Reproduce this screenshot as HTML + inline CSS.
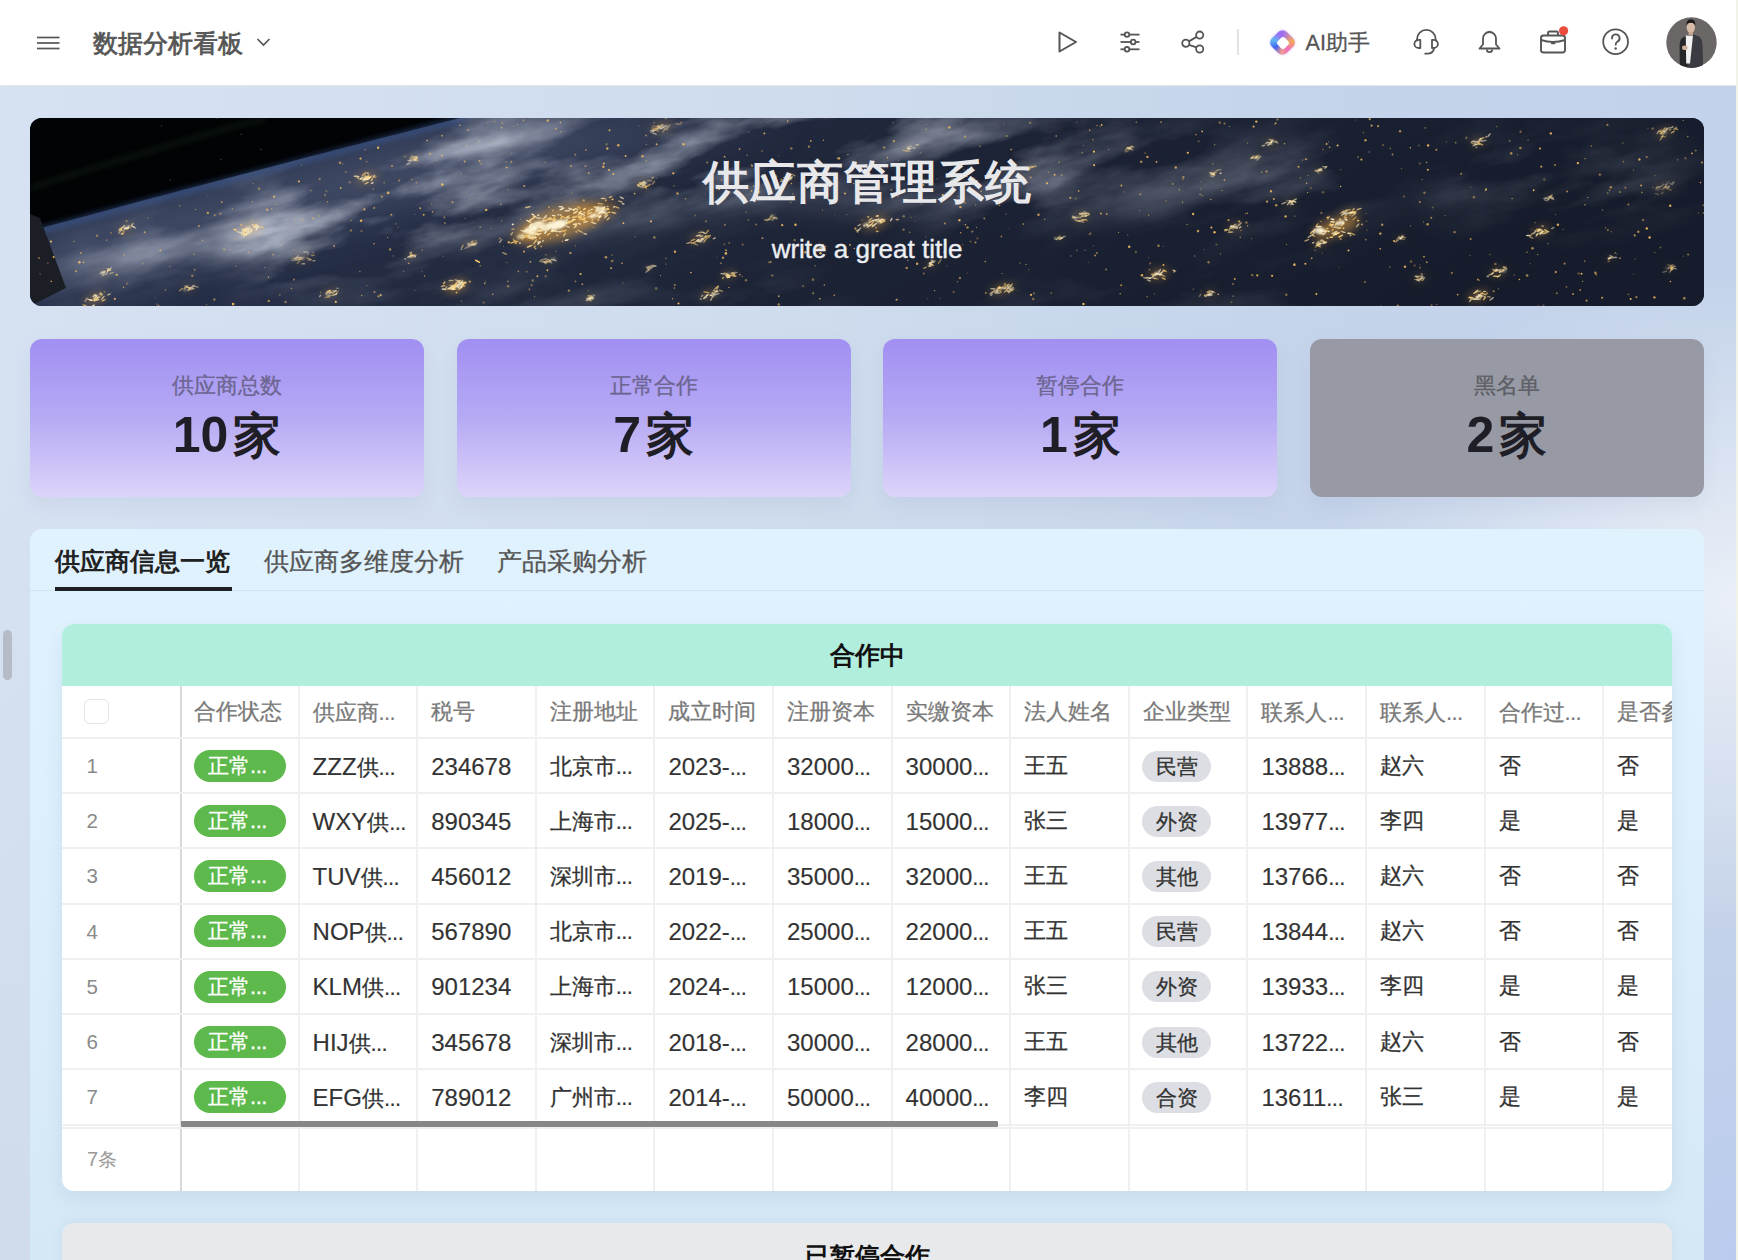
<!DOCTYPE html>
<html><head><meta charset="utf-8">
<style>
*{box-sizing:border-box;margin:0;padding:0}
html,body{width:1738px;height:1260px;overflow:hidden;background:#f0f3e6;font-family:"Liberation Sans", sans-serif}
.med{-webkit-text-stroke-width:0.3px}
.td,.th,.tag,.pill,.tab,#title,#ai,.card .lbl{-webkit-text-stroke-width:0.3px}
.abs{position:absolute}
#page{position:absolute;left:0;top:0;width:1736px;height:1260px;overflow:hidden;
 background:
 radial-gradient(ellipse 420px 330px at 1736px 600px, rgba(234,239,247,1) 0%, rgba(234,239,247,0.6) 40%, rgba(234,239,247,0) 100%),
 radial-gradient(ellipse 300px 450px at 1736px 1260px, rgba(186,203,238,1) 0%, rgba(186,203,238,0) 100%),
 linear-gradient(180deg, rgba(206,216,230,0) 35%, rgba(206,216,230,0.65) 100%),
 linear-gradient(90deg, #d6e2f2 0%, #cfdcee 45%, #c5d4eb 75%, #c2d2ea 100%);}
#hdr{position:absolute;left:0;top:0;width:1736px;height:86px;background:#fff;border-bottom:1px solid #e5e5e5}
.ico{position:absolute}
#title{position:absolute;left:93px;top:25px;font-size:25.4px;font-weight:500;color:#555;line-height:36px;letter-spacing:0px;-webkit-text-stroke-width:0.75px !important}
#ai{position:absolute;left:1305.5px;top:28px;font-size:21.6px;color:#555;line-height:30px}
#banner{position:absolute;left:30px;top:118px;width:1674px;height:188px;border-radius:12px;overflow:hidden;background:#1d2538}
#btitle{position:absolute;left:0;width:1674px;top:34px;text-align:center;font-size:46px;font-weight:700;color:#e8e8ea;line-height:60px;letter-spacing:1px}
#bsub{position:absolute;left:0;width:1674px;top:114px;text-align:center;font-size:26px;color:#eceef2;line-height:34px;-webkit-text-stroke-width:0.4px}
.card{position:absolute;top:339px;width:394px;height:158px;border-radius:12px;
 background:linear-gradient(180deg,#a18ff2 0%,#b6aaf4 50%,#ddd4fa 100%);box-shadow:0 8px 18px rgba(120,130,170,0.10)}
.card.gray{background:#979aa5}
.card .lbl{position:absolute;left:0;width:100%;top:32px;text-align:center;font-size:22.3px;font-weight:500;color:#6c6590;line-height:30px}
.card.gray .lbl{color:#5e5f66}
.card .num .j{font-size:48px;font-weight:400;-webkit-text-stroke-width:1.5px;margin-left:5px}
.card .num{position:absolute;left:0;width:100%;top:66px;text-align:center;font-size:50px;font-weight:700;color:#1f1d26;line-height:60px}
#tabs{position:absolute;left:30px;top:529px;width:1674px;height:800px;border-radius:12px;background:linear-gradient(180deg,#e0f2fd 0px,#ddeffb 300px,#d5e8f5 731px)}
.tab{position:absolute;top:9.5px;line-height:46px;color:#555;font-size:24.7px}
#tab1{left:25px;font-size:24.5px;font-weight:700;color:#222;-webkit-text-stroke-width:0 !important}
#uline{position:absolute;left:25px;top:58px;width:177px;height:4px;background:#1f2022}
#tdiv{position:absolute;left:0;top:61px;width:1674px;height:1px;background:#cfe2ee}
#tcard{position:absolute;left:62px;top:624px;width:1610px;height:567px;border-radius:12px;background:#fff;overflow:hidden;box-shadow:0 8px 20px rgba(40,90,140,0.09)}
#thead{position:absolute;left:0;top:0;width:1610px;height:62px;background:#b1eede}
#ttitle{position:absolute;left:0;width:1610px;top:0;line-height:62px;text-align:center;font-size:25px;font-weight:700;color:#111}
.vl{position:absolute;top:62px;height:505px}
.hl{position:absolute;left:0;width:1610px;height:2px;background:#f0f0f0}
.th{position:absolute;line-height:51px;font-size:21.5px;font-weight:500;color:#7a7a7a;white-space:nowrap}
.th .l{font-size:23px;font-weight:400}
.d{font-size:22px;letter-spacing:-0.6px;-webkit-text-stroke-width:0.15px}
.td{position:absolute;line-height:55px;font-size:21.5px;font-weight:500;color:#333;white-space:nowrap}
.td .l{font-size:24px;font-weight:400;-webkit-text-stroke-width:0.15px}
.idx{position:absolute;line-height:55px;font-size:20.5px;color:#8a8a8a}
.foot{font-size:19px;color:#999} .foot .l{font-size:20px}
.foot{line-height:62px}
.cb{position:absolute;width:25px;height:25px;border:1.5px solid #e3e3e3;border-radius:6px;background:#fff}
.pill{position:absolute;width:92px;height:32px;border-radius:16px;background:#5db94b;color:#fff;font-size:21px;font-weight:500;line-height:32px;text-align:center;padding-right:4px}
.pill .l{font-size:22px;font-weight:400;letter-spacing:-0.5px}
.tag{position:absolute;width:69px;height:31px;border-radius:15.5px;background:#dcdee3;color:#333;font-size:21px;font-weight:500;line-height:31px;text-align:center}
.hscroll{position:absolute;left:119px;top:497px;width:817px;height:6px;background:#878787;border-radius:1px}
#ncard{position:absolute;left:62px;top:1223px;width:1610px;height:200px;border-radius:12px;background:#e8e9eb;box-shadow:0 -2px 14px rgba(40,90,140,0.06)}
#ntitle{position:absolute;left:0;width:1610px;top:13px;line-height:40px;text-align:center;font-size:25px;font-weight:700;color:#111}
#lpill{position:absolute;left:3px;top:630px;width:9px;height:50px;border-radius:5px;background:#b5bcc8}
</style></head><body>
<div id="page">
 <div id="hdr">
  <svg class="ico" style="left:36px;top:35.5px" width="25" height="14" viewBox="0 0 25 14"><g stroke="#555" stroke-width="1.7"><line x1="1" y1="1.5" x2="23.5" y2="1.5"/><line x1="1" y1="7" x2="23.5" y2="7"/><line x1="1" y1="12.5" x2="23.5" y2="12.5"/></g></svg>
  <div id="title">数据分析看板</div>
  <svg class="ico" style="left:256px;top:37px" width="15" height="10" viewBox="0 0 15 10"><polyline points="1.5,2 7.5,8 13.5,2" fill="none" stroke="#555" stroke-width="1.7"/></svg>
  <!-- play -->
  <svg class="ico" style="left:1055px;top:29px" width="26" height="26" viewBox="0 0 26 26"><path d="M4.5 3.5 L21 13 L4.5 22.5 Z" fill="none" stroke="#555" stroke-width="2" stroke-linejoin="round"/></svg>
  <!-- sliders -->
  <svg class="ico" style="left:1117px;top:29px" width="26" height="26" viewBox="0 0 26 26"><g stroke="#555" stroke-width="1.8" fill="#fff"><line x1="3.5" y1="5.6" x2="22.5" y2="5.6"/><line x1="3.5" y1="13" x2="22.5" y2="13"/><line x1="3.5" y1="20.3" x2="22.5" y2="20.3"/><circle cx="10" cy="5.6" r="2.3"/><circle cx="16.2" cy="13" r="2.3"/><circle cx="10" cy="20.3" r="2.3"/></g></svg>
  <!-- share -->
  <svg class="ico" style="left:1179px;top:29px" width="28" height="28" viewBox="0 0 28 28"><g stroke="#555" stroke-width="1.8" fill="none"><circle cx="20.7" cy="6.1" r="3.6"/><circle cx="6.8" cy="14.2" r="3.6"/><circle cx="20.7" cy="20" r="3.6"/><line x1="9.9" y1="12.4" x2="17.6" y2="7.9"/><line x1="9.9" y1="15.9" x2="17.6" y2="18.3"/></g></svg>
  <div class="abs" style="left:1237px;top:29px;width:1.5px;height:26px;background:#e2e2e2"></div>
  <!-- AI logo -->
  <div class="abs" style="left:1270px;top:30px;width:25px;height:25px;">
   <div class="abs" style="left:2px;top:2px;width:21px;height:21px;border-radius:6px;transform:rotate(45deg);background:conic-gradient(from -45deg,#9d6ff6 0deg,#f5a55c 85deg,#ee6fc0 140deg,#f39a92 185deg,#3f63ee 235deg,#62b6f2 285deg,#9d6ff6 340deg);box-shadow:0 0 3px rgba(190,140,245,0.6)"></div>
   <div class="abs" style="left:7.5px;top:7.5px;width:10px;height:10px;border-radius:3px;transform:rotate(45deg);background:#fff"></div>
  </div>
  <div id="ai">AI助手</div>
  <!-- headset -->
  <svg class="ico" style="left:1411px;top:27px" width="30" height="30" viewBox="0 0 30 30"><g stroke="#555" stroke-width="1.8" fill="none" stroke-linecap="round" stroke-linejoin="round"><path d="M6 13.5 V12.2 A9.35 9.35 0 0 1 24.7 12.2 V13.5"/><path d="M9.3 12.8 V21 H8 A4.6 4.1 0 0 1 8 12.8 Z"/><path d="M21 12.8 V21 H22.3 A4.6 4.1 0 0 0 22.3 12.8 Z"/><path d="M23 21.8 Q22 26.6 16.5 26.7 H14.2"/></g></svg>
  <!-- bell -->
  <svg class="ico" style="left:1476px;top:28px" width="28" height="28" viewBox="0 0 28 28"><g stroke="#555" stroke-width="1.8" fill="none" stroke-linejoin="round"><path d="M13.5 4 A6.5 6.5 0 0 1 20 11 V16.5 L23.5 20.5 H3.5 L7 16.5 V11 A6.5 6.5 0 0 1 13.5 4Z"/><path d="M10.8 21.5 A2.7 2.7 0 0 0 16.2 21.5"/><line x1="13.5" y1="2.8" x2="13.5" y2="4"/></g></svg>
  <!-- briefcase -->
  <svg class="ico" style="left:1538px;top:28px;overflow:visible" width="32" height="28" viewBox="0 0 32 28"><g stroke="#555" stroke-width="1.9" fill="none" stroke-linejoin="round"><rect x="3" y="7.5" width="24" height="17" rx="2.5"/><path d="M10 7.5 V5 A1.5 1.5 0 0 1 11.5 3.5 H18.5 A1.5 1.5 0 0 1 20 5 V7.5"/><path d="M3 12 Q15 16 27 12"/></g><rect x="13" y="14.2" width="4.4" height="2" rx="0.6" fill="#555"/><circle cx="25.6" cy="2.8" r="4.6" fill="#ea4b3c"/></svg>
  <!-- help -->
  <svg class="ico" style="left:1601px;top:27px" width="30" height="30" viewBox="0 0 30 30"><circle cx="14.6" cy="14.7" r="12.4" stroke="#555" stroke-width="1.8" fill="none"/><path d="M11 11.5 A3.8 3.8 0 1 1 16.5 14.6 C15.2 15.4 14.7 16 14.7 17.7" stroke="#555" stroke-width="1.8" fill="none" stroke-linecap="round"/><circle cx="14.7" cy="21.5" r="1.2" fill="#555"/></svg>
  <!-- avatar -->
  <svg class="ico" style="left:1666px;top:17px" width="51" height="51" viewBox="0 0 51 51">
   <defs><clipPath id="avc"><circle cx="25.5" cy="25.5" r="25.2"/></clipPath></defs>
   <g clip-path="url(#avc)">
    <rect width="51" height="51" fill="#6a6766"/>
    <path d="M13.8 51 L13.6 27 Q14 21 19.5 19.2 L23 17.8 L27.5 17.8 L32.5 19.6 Q36 21.5 36.2 28 L36.8 51Z" fill="#26272b"/>
    <path d="M27 18 L32.5 19.6 Q36 21.5 36.2 28 L36.8 51 L21 51 Z" fill="#3a3c41"/>
    <path d="M19.8 18.6 L27 18.4 L24 46.5 L20.2 46.5 Z" fill="#f1f1f1"/>
    <rect x="22.6" y="14.2" width="4.4" height="4" fill="#c6a28c"/>
    <ellipse cx="24.8" cy="10.6" rx="4.2" ry="5" fill="#d8b9a6"/>
    <path d="M20.4 8.8 Q20 2.6 24.8 2.2 Q29.8 2.4 29.4 8.8 Q28.5 5.6 24.8 5.8 Q21.2 5.6 20.4 8.8Z" fill="#1c1918"/>
    <ellipse cx="18.8" cy="30.8" rx="2.8" ry="2.3" fill="#cfae9a"/>
   </g>
  </svg>
 </div>

 <div id="banner">
 <svg width="1674" height="188" viewBox="0 0 1674 188" style="position:absolute;left:0;top:0">
<defs>
<filter id="g5" x="-100%" y="-200%" width="300%" height="500%"><feGaussianBlur stdDeviation="5"/></filter>
<filter id="g1" x="-100%" y="-200%" width="300%" height="500%"><feGaussianBlur stdDeviation="1.2"/></filter>
<filter id="g3" x="-50%" y="-50%" width="200%" height="200%"><feGaussianBlur stdDeviation="3"/></filter>
<filter id="g25" x="-50%" y="-50%" width="200%" height="200%"><feGaussianBlur stdDeviation="22"/></filter>
<filter id="cl" filterUnits="userSpaceOnUse" x="-600" y="-600" width="3000" height="1400">
 <feTurbulence type="fractalNoise" baseFrequency="0.007 0.022" numOctaves="5" seed="8" result="n"/>
 <feColorMatrix in="n" type="matrix" values="0 0 0 0 0.56  0 0 0 0 0.60  0 0 0 0 0.70  2.4 0 0 0 -0.95"/>
</filter>
<linearGradient id="base" x1="0" y1="0" x2="1" y2="0.2">
 <stop offset="0" stop-color="#2b3550"/><stop offset="0.3" stop-color="#252e46"/><stop offset="0.6" stop-color="#1c2335"/><stop offset="1" stop-color="#161c2b"/>
</linearGradient>
<mask id="cm" maskUnits="userSpaceOnUse" x="0" y="0" width="1674" height="188">
 <rect width="1674" height="188" fill="#000"/>
 <g filter="url(#g25)">
  <path d="M0 165 L70 165 L520 30 L480 0 L420 0 Z" fill="#fff"/>
  <ellipse cx="420" cy="80" rx="230" ry="42" transform="rotate(-17 420 80)" fill="#fff"/>
  <ellipse cx="680" cy="35" rx="260" ry="50" transform="rotate(-8 680 35)" fill="#ddd"/>
  <ellipse cx="980" cy="45" rx="220" ry="50" fill="#999"/>
  <ellipse cx="1200" cy="60" rx="160" ry="45" fill="#555"/>
  <ellipse cx="1530" cy="60" rx="140" ry="45" fill="#444"/>
  <ellipse cx="560" cy="180" rx="260" ry="18" fill="#555"/>
  <ellipse cx="1150" cy="180" rx="200" ry="20" fill="#444"/>
 </g>
</mask>
</defs>
<rect width="1674" height="188" fill="url(#base)"/>
<path d="M0 118 L0 178 L300 105 L760 0 L440 0 Z" fill="#56617c" opacity="0.55" filter="url(#g25)"/>
<g mask="url(#cm)"><g transform="rotate(-14 600 100)"><rect x="-400" y="-500" width="2600" height="1200" fill="#fff" filter="url(#cl)"/></g></g>
<path d="M0 0 L430 0 C 320 28 150 72 0 113 Z" fill="#020305"/>
<path d="M0 115 C 150 74 320 30 435 0" stroke="#3c62a6" stroke-width="4" fill="none" opacity="0.75" filter="url(#g3)"/>
<path d="M0 70 C 80 45 160 20 235 0" stroke="#2d4a25" stroke-width="3" fill="none" opacity="0.45" filter="url(#g3)"/>
<circle cx="140.3" cy="62.1" r="0.6" fill="#8890a0" opacity="0.6"/><circle cx="131.4" cy="7.8" r="0.6" fill="#8890a0" opacity="0.6"/><circle cx="211.2" cy="16.2" r="0.6" fill="#8890a0" opacity="0.6"/><circle cx="190.8" cy="41.3" r="0.6" fill="#8890a0" opacity="0.6"/><circle cx="186.9" cy="0.1" r="0.6" fill="#8890a0" opacity="0.6"/><circle cx="230.9" cy="31.4" r="0.6" fill="#8890a0" opacity="0.6"/>
<path d="M0 96 L10 100 L36 170 L0 188 Z" fill="#1b1e24"/>
<ellipse cx="530" cy="105" rx="44.0" ry="16.5" transform="rotate(-18 530 105)" fill="#f0a840" opacity="0.50" filter="url(#g5)"/><ellipse cx="565" cy="95" rx="24.0" ry="9.0" transform="rotate(-18 565 95)" fill="#f0a840" opacity="0.45" filter="url(#g5)"/><ellipse cx="500" cy="115" rx="20.0" ry="7.5" transform="rotate(-18 500 115)" fill="#f0a840" opacity="0.40" filter="url(#g5)"/><ellipse cx="1306" cy="109" rx="24.0" ry="9.0" transform="rotate(-18 1306 109)" fill="#f0a840" opacity="0.50" filter="url(#g5)"/><ellipse cx="1290" cy="125" rx="8.0" ry="3.0" transform="rotate(-18 1290 125)" fill="#f0a840" opacity="0.35" filter="url(#g5)"/><ellipse cx="1320" cy="95" rx="9.6" ry="3.6" transform="rotate(-18 1320 95)" fill="#f0a840" opacity="0.35" filter="url(#g5)"/><ellipse cx="845" cy="105" rx="14.4" ry="5.4" transform="rotate(-18 845 105)" fill="#f0a840" opacity="0.40" filter="url(#g5)"/><ellipse cx="669" cy="120" rx="9.6" ry="3.6" transform="rotate(-18 669 120)" fill="#f0a840" opacity="0.40" filter="url(#g5)"/><ellipse cx="426" cy="168" rx="12.8" ry="4.8" transform="rotate(-18 426 168)" fill="#f0a840" opacity="0.40" filter="url(#g5)"/><ellipse cx="680" cy="176" rx="9.6" ry="3.6" transform="rotate(-18 680 176)" fill="#f0a840" opacity="0.35" filter="url(#g5)"/><ellipse cx="699" cy="157" rx="8.0" ry="3.0" transform="rotate(-18 699 157)" fill="#f0a840" opacity="0.35" filter="url(#g5)"/><ellipse cx="968" cy="172" rx="9.6" ry="3.6" transform="rotate(-18 968 172)" fill="#f0a840" opacity="0.35" filter="url(#g5)"/><ellipse cx="613" cy="67" rx="8.0" ry="3.0" transform="rotate(-18 613 67)" fill="#f0a840" opacity="0.30" filter="url(#g5)"/><ellipse cx="632" cy="9" rx="12.8" ry="4.8" transform="rotate(-18 632 9)" fill="#f0a840" opacity="0.25" filter="url(#g5)"/><ellipse cx="520" cy="142" rx="6.4" ry="2.4" transform="rotate(-18 520 142)" fill="#f0a840" opacity="0.30" filter="url(#g5)"/><ellipse cx="381" cy="138" rx="6.4" ry="2.4" transform="rotate(-18 381 138)" fill="#f0a840" opacity="0.30" filter="url(#g5)"/><ellipse cx="901" cy="146" rx="6.4" ry="2.4" transform="rotate(-18 901 146)" fill="#f0a840" opacity="0.30" filter="url(#g5)"/><ellipse cx="96" cy="111" rx="8.0" ry="3.0" transform="rotate(-18 96 111)" fill="#f0a840" opacity="0.35" filter="url(#g5)"/><ellipse cx="220" cy="111" rx="11.2" ry="4.2" transform="rotate(-18 220 111)" fill="#f0a840" opacity="0.45" filter="url(#g5)"/><ellipse cx="337" cy="60" rx="11.2" ry="4.2" transform="rotate(-18 337 60)" fill="#f0a840" opacity="0.40" filter="url(#g5)"/><ellipse cx="272" cy="140" rx="9.6" ry="3.6" transform="rotate(-18 272 140)" fill="#f0a840" opacity="0.25" filter="url(#g5)"/><ellipse cx="75" cy="155" rx="6.4" ry="2.4" transform="rotate(-18 75 155)" fill="#f0a840" opacity="0.30" filter="url(#g5)"/><ellipse cx="65" cy="181" rx="11.2" ry="4.2" transform="rotate(-18 65 181)" fill="#f0a840" opacity="0.40" filter="url(#g5)"/><ellipse cx="427" cy="168" rx="8.0" ry="3.0" transform="rotate(-18 427 168)" fill="#f0a840" opacity="0.35" filter="url(#g5)"/><ellipse cx="440" cy="127" rx="6.4" ry="2.4" transform="rotate(-18 440 127)" fill="#f0a840" opacity="0.30" filter="url(#g5)"/><ellipse cx="383" cy="41" rx="6.4" ry="2.4" transform="rotate(-18 383 41)" fill="#f0a840" opacity="0.30" filter="url(#g5)"/><ellipse cx="1051" cy="99" rx="8.0" ry="3.0" transform="rotate(-18 1051 99)" fill="#f0a840" opacity="0.35" filter="url(#g5)"/><ellipse cx="1205" cy="109" rx="8.0" ry="3.0" transform="rotate(-18 1205 109)" fill="#f0a840" opacity="0.35" filter="url(#g5)"/><ellipse cx="1128" cy="156" rx="11.2" ry="4.2" transform="rotate(-18 1128 156)" fill="#f0a840" opacity="0.40" filter="url(#g5)"/><ellipse cx="1448" cy="178" rx="11.2" ry="4.2" transform="rotate(-18 1448 178)" fill="#f0a840" opacity="0.40" filter="url(#g5)"/><ellipse cx="1468" cy="154" rx="8.0" ry="3.0" transform="rotate(-18 1468 154)" fill="#f0a840" opacity="0.40" filter="url(#g5)"/><ellipse cx="1511" cy="113" rx="9.6" ry="3.6" transform="rotate(-18 1511 113)" fill="#f0a840" opacity="0.40" filter="url(#g5)"/><ellipse cx="1448" cy="24" rx="8.0" ry="3.0" transform="rotate(-18 1448 24)" fill="#f0a840" opacity="0.35" filter="url(#g5)"/><ellipse cx="1634" cy="14" rx="9.6" ry="3.6" transform="rotate(-18 1634 14)" fill="#f0a840" opacity="0.30" filter="url(#g5)"/><ellipse cx="1634" cy="69" rx="9.6" ry="3.6" transform="rotate(-18 1634 69)" fill="#f0a840" opacity="0.17" filter="url(#g5)"/><ellipse cx="978" cy="170" rx="8.0" ry="3.0" transform="rotate(-18 978 170)" fill="#f0a840" opacity="0.30" filter="url(#g5)"/><ellipse cx="1240" cy="25" rx="6.4" ry="2.4" transform="rotate(-18 1240 25)" fill="#f0a840" opacity="0.30" filter="url(#g5)"/><ellipse cx="1225" cy="40" rx="4.8" ry="1.8" transform="rotate(-18 1225 40)" fill="#f0a840" opacity="0.30" filter="url(#g5)"/><ellipse cx="1185" cy="55" rx="4.8" ry="1.8" transform="rotate(-18 1185 55)" fill="#f0a840" opacity="0.30" filter="url(#g5)"/><ellipse cx="1290" cy="52" rx="4.8" ry="1.8" transform="rotate(-18 1290 52)" fill="#f0a840" opacity="0.30" filter="url(#g5)"/><ellipse cx="1260" cy="85" rx="6.4" ry="2.4" transform="rotate(-18 1260 85)" fill="#f0a840" opacity="0.30" filter="url(#g5)"/><ellipse cx="1370" cy="120" rx="4.8" ry="1.8" transform="rotate(-18 1370 120)" fill="#f0a840" opacity="0.30" filter="url(#g5)"/><ellipse cx="1520" cy="80" rx="4.8" ry="1.8" transform="rotate(-18 1520 80)" fill="#f0a840" opacity="0.25" filter="url(#g5)"/><ellipse cx="1580" cy="140" rx="4.8" ry="1.8" transform="rotate(-18 1580 140)" fill="#f0a840" opacity="0.25" filter="url(#g5)"/><ellipse cx="1640" cy="150" rx="4.8" ry="1.8" transform="rotate(-18 1640 150)" fill="#f0a840" opacity="0.25" filter="url(#g5)"/><ellipse cx="1390" cy="160" rx="6.4" ry="2.4" transform="rotate(-18 1390 160)" fill="#f0a840" opacity="0.30" filter="url(#g5)"/><ellipse cx="1180" cy="175" rx="6.4" ry="2.4" transform="rotate(-18 1180 175)" fill="#f0a840" opacity="0.30" filter="url(#g5)"/><ellipse cx="1030" cy="120" rx="4.8" ry="1.8" transform="rotate(-18 1030 120)" fill="#f0a840" opacity="0.25" filter="url(#g5)"/><ellipse cx="760" cy="60" rx="6.4" ry="2.4" transform="rotate(-18 760 60)" fill="#f0a840" opacity="0.30" filter="url(#g5)"/><ellipse cx="790" cy="130" rx="4.8" ry="1.8" transform="rotate(-18 790 130)" fill="#f0a840" opacity="0.25" filter="url(#g5)"/><ellipse cx="740" cy="100" rx="4.8" ry="1.8" transform="rotate(-18 740 100)" fill="#f0a840" opacity="0.25" filter="url(#g5)"/><ellipse cx="620" cy="150" rx="4.8" ry="1.8" transform="rotate(-18 620 150)" fill="#f0a840" opacity="0.25" filter="url(#g5)"/><ellipse cx="560" cy="180" rx="6.4" ry="2.4" transform="rotate(-18 560 180)" fill="#f0a840" opacity="0.30" filter="url(#g5)"/><ellipse cx="300" cy="175" rx="8.0" ry="3.0" transform="rotate(-18 300 175)" fill="#f0a840" opacity="0.35" filter="url(#g5)"/><ellipse cx="160" cy="170" rx="6.4" ry="2.4" transform="rotate(-18 160 170)" fill="#f0a840" opacity="0.30" filter="url(#g5)"/><ellipse cx="930" cy="60" rx="4.8" ry="1.8" transform="rotate(-18 930 60)" fill="#f0a840" opacity="0.25" filter="url(#g5)"/><ellipse cx="880" cy="30" rx="4.8" ry="1.8" transform="rotate(-18 880 30)" fill="#f0a840" opacity="0.25" filter="url(#g5)"/><ellipse cx="1000" cy="50" rx="4.8" ry="1.8" transform="rotate(-18 1000 50)" fill="#f0a840" opacity="0.25" filter="url(#g5)"/><ellipse cx="1100" cy="30" rx="4.8" ry="1.8" transform="rotate(-18 1100 30)" fill="#f0a840" opacity="0.25" filter="url(#g5)"/>
<ellipse cx="498.7" cy="103.2" rx="3.0" ry="0.8" transform="rotate(25 498.7 103.2)" fill="#ffe9b0" opacity="0.94"/><ellipse cx="530.6" cy="97.0" rx="1.1" ry="0.8" transform="rotate(-46 530.6 97.0)" fill="#fff3d0" opacity="0.79"/><ellipse cx="534.5" cy="116.6" rx="2.4" ry="0.8" transform="rotate(-59 534.5 116.6)" fill="#ffd98a" opacity="0.76"/><ellipse cx="555.2" cy="115.9" rx="2.0" ry="0.8" transform="rotate(9 555.2 115.9)" fill="#ffe9b0" opacity="0.66"/><ellipse cx="519.9" cy="104.6" rx="1.0" ry="0.8" transform="rotate(18 519.9 104.6)" fill="#ffd98a" opacity="0.91"/><ellipse cx="543.3" cy="99.1" rx="1.4" ry="0.8" transform="rotate(-32 543.3 99.1)" fill="#ffd98a" opacity="0.82"/><ellipse cx="521.2" cy="101.5" rx="3.4" ry="0.8" transform="rotate(2 521.2 101.5)" fill="#ffcf70" opacity="0.72"/><ellipse cx="522.3" cy="112.3" rx="1.4" ry="0.8" transform="rotate(-54 522.3 112.3)" fill="#fff3d0" opacity="0.93"/><ellipse cx="500.7" cy="107.3" rx="2.8" ry="0.8" transform="rotate(-54 500.7 107.3)" fill="#fff3d0" opacity="0.93"/><ellipse cx="510.0" cy="112.6" rx="2.2" ry="0.8" transform="rotate(3 510.0 112.6)" fill="#ffe9b0" opacity="0.70"/><ellipse cx="580.5" cy="79.1" rx="1.9" ry="0.8" transform="rotate(-24 580.5 79.1)" fill="#ffcf70" opacity="0.75"/><ellipse cx="527.0" cy="105.3" rx="1.1" ry="0.8" transform="rotate(-44 527.0 105.3)" fill="#ffd98a" opacity="0.65"/><ellipse cx="536.7" cy="122.1" rx="2.2" ry="0.8" transform="rotate(-14 536.7 122.1)" fill="#fff3d0" opacity="0.91"/><ellipse cx="563.6" cy="104.9" rx="3.0" ry="0.8" transform="rotate(17 563.6 104.9)" fill="#ffe9b0" opacity="0.77"/><ellipse cx="545.7" cy="98.9" rx="2.3" ry="0.8" transform="rotate(-27 545.7 98.9)" fill="#ffd98a" opacity="0.74"/><ellipse cx="554.5" cy="91.0" rx="1.8" ry="0.8" transform="rotate(-31 554.5 91.0)" fill="#ffd98a" opacity="0.92"/><ellipse cx="500.2" cy="102.8" rx="1.8" ry="0.8" transform="rotate(-16 500.2 102.8)" fill="#ffe9b0" opacity="0.63"/><ellipse cx="482.8" cy="106.4" rx="1.1" ry="0.8" transform="rotate(7 482.8 106.4)" fill="#fff3d0" opacity="0.93"/><ellipse cx="507.2" cy="115.4" rx="1.1" ry="0.8" transform="rotate(22 507.2 115.4)" fill="#ffe9b0" opacity="0.92"/><ellipse cx="523.7" cy="113.2" rx="3.5" ry="0.8" transform="rotate(-9 523.7 113.2)" fill="#ffd98a" opacity="0.85"/><ellipse cx="531.2" cy="99.8" rx="2.1" ry="0.8" transform="rotate(-47 531.2 99.8)" fill="#ffcf70" opacity="0.72"/><ellipse cx="447.5" cy="143.3" rx="3.1" ry="0.8" transform="rotate(28 447.5 143.3)" fill="#ffcf70" opacity="0.98"/><ellipse cx="519.8" cy="99.9" rx="1.7" ry="0.8" transform="rotate(-18 519.8 99.9)" fill="#ffd98a" opacity="0.65"/><ellipse cx="539.3" cy="90.4" rx="1.4" ry="0.8" transform="rotate(24 539.3 90.4)" fill="#fff3d0" opacity="0.67"/><ellipse cx="501.9" cy="114.8" rx="2.4" ry="0.8" transform="rotate(-15 501.9 114.8)" fill="#ffe9b0" opacity="0.91"/><ellipse cx="531.0" cy="88.8" rx="2.7" ry="0.8" transform="rotate(8 531.0 88.8)" fill="#fff3d0" opacity="0.82"/><ellipse cx="503.0" cy="96.6" rx="1.7" ry="0.8" transform="rotate(28 503.0 96.6)" fill="#fff3d0" opacity="0.98"/><ellipse cx="523.7" cy="112.6" rx="3.1" ry="0.8" transform="rotate(-17 523.7 112.6)" fill="#fff3d0" opacity="0.73"/><ellipse cx="529.6" cy="113.6" rx="2.3" ry="0.8" transform="rotate(1 529.6 113.6)" fill="#fff3d0" opacity="0.74"/><ellipse cx="502.3" cy="100.6" rx="3.1" ry="0.8" transform="rotate(-28 502.3 100.6)" fill="#ffd98a" opacity="0.95"/><ellipse cx="498.0" cy="89.1" rx="3.4" ry="0.8" transform="rotate(-13 498.0 89.1)" fill="#ffd98a" opacity="0.68"/><ellipse cx="504.7" cy="128.8" rx="1.7" ry="0.8" transform="rotate(-53 504.7 128.8)" fill="#ffcf70" opacity="0.67"/><ellipse cx="531.9" cy="90.9" rx="2.7" ry="0.8" transform="rotate(-22 531.9 90.9)" fill="#fff3d0" opacity="0.89"/><ellipse cx="544.0" cy="101.5" rx="2.1" ry="0.8" transform="rotate(-1 544.0 101.5)" fill="#ffd98a" opacity="0.90"/><ellipse cx="550.3" cy="113.4" rx="3.5" ry="0.8" transform="rotate(28 550.3 113.4)" fill="#ffd98a" opacity="0.62"/><ellipse cx="545.7" cy="106.7" rx="1.5" ry="0.8" transform="rotate(-43 545.7 106.7)" fill="#ffe9b0" opacity="0.77"/><ellipse cx="513.0" cy="122.9" rx="1.2" ry="0.8" transform="rotate(-42 513.0 122.9)" fill="#fff3d0" opacity="0.60"/><ellipse cx="515.6" cy="114.4" rx="2.0" ry="0.8" transform="rotate(-50 515.6 114.4)" fill="#fff3d0" opacity="0.99"/><ellipse cx="510.2" cy="108.7" rx="1.7" ry="0.8" transform="rotate(-14 510.2 108.7)" fill="#fff3d0" opacity="0.98"/><ellipse cx="537.3" cy="92.8" rx="3.0" ry="0.8" transform="rotate(-2 537.3 92.8)" fill="#fff3d0" opacity="0.79"/><ellipse cx="545.3" cy="108.6" rx="2.2" ry="0.8" transform="rotate(-42 545.3 108.6)" fill="#ffd98a" opacity="0.84"/><ellipse cx="505.6" cy="130.6" rx="1.0" ry="0.8" transform="rotate(-50 505.6 130.6)" fill="#ffd98a" opacity="0.73"/><ellipse cx="548.9" cy="89.5" rx="2.1" ry="0.8" transform="rotate(28 548.9 89.5)" fill="#ffcf70" opacity="0.72"/><ellipse cx="552.1" cy="96.1" rx="3.4" ry="0.8" transform="rotate(22 552.1 96.1)" fill="#fff3d0" opacity="0.90"/><ellipse cx="526.6" cy="113.6" rx="1.0" ry="0.8" transform="rotate(25 526.6 113.6)" fill="#fff3d0" opacity="0.80"/><ellipse cx="527.3" cy="117.4" rx="1.3" ry="0.8" transform="rotate(-4 527.3 117.4)" fill="#ffcf70" opacity="0.70"/><ellipse cx="542.8" cy="102.3" rx="2.0" ry="0.8" transform="rotate(-17 542.8 102.3)" fill="#fff3d0" opacity="0.70"/><ellipse cx="523.8" cy="107.5" rx="2.2" ry="0.8" transform="rotate(16 523.8 107.5)" fill="#fff3d0" opacity="0.72"/><ellipse cx="507.0" cy="105.0" rx="2.6" ry="0.8" transform="rotate(-6 507.0 105.0)" fill="#ffe9b0" opacity="0.61"/><ellipse cx="545.2" cy="106.1" rx="2.8" ry="0.8" transform="rotate(-5 545.2 106.1)" fill="#ffe9b0" opacity="0.79"/><ellipse cx="508.9" cy="125.1" rx="2.5" ry="0.8" transform="rotate(-57 508.9 125.1)" fill="#fff3d0" opacity="0.82"/><ellipse cx="524.2" cy="102.3" rx="2.7" ry="0.8" transform="rotate(-43 524.2 102.3)" fill="#ffcf70" opacity="0.91"/><ellipse cx="504.1" cy="119.4" rx="2.8" ry="0.8" transform="rotate(-3 504.1 119.4)" fill="#ffcf70" opacity="0.94"/><ellipse cx="541.6" cy="91.3" rx="2.7" ry="0.8" transform="rotate(5 541.6 91.3)" fill="#fff3d0" opacity="0.79"/><ellipse cx="528.4" cy="96.7" rx="1.0" ry="0.8" transform="rotate(10 528.4 96.7)" fill="#fff3d0" opacity="0.86"/><ellipse cx="510.4" cy="112.9" rx="1.4" ry="0.8" transform="rotate(3 510.4 112.9)" fill="#ffcf70" opacity="0.99"/><ellipse cx="505.2" cy="110.5" rx="2.4" ry="0.8" transform="rotate(-56 505.2 110.5)" fill="#ffd98a" opacity="0.71"/><ellipse cx="537.9" cy="104.4" rx="3.4" ry="0.8" transform="rotate(-30 537.9 104.4)" fill="#ffcf70" opacity="0.99"/><ellipse cx="566.5" cy="93.0" rx="1.1" ry="0.8" transform="rotate(16 566.5 93.0)" fill="#ffd98a" opacity="0.85"/><ellipse cx="533.8" cy="99.2" rx="3.2" ry="0.8" transform="rotate(29 533.8 99.2)" fill="#ffcf70" opacity="0.66"/><ellipse cx="509.3" cy="104.8" rx="1.4" ry="0.8" transform="rotate(-4 509.3 104.8)" fill="#ffe9b0" opacity="0.82"/><ellipse cx="504.9" cy="98.6" rx="1.7" ry="0.8" transform="rotate(-9 504.9 98.6)" fill="#ffe9b0" opacity="0.90"/><ellipse cx="538.0" cy="98.5" rx="2.1" ry="0.8" transform="rotate(-32 538.0 98.5)" fill="#ffcf70" opacity="0.80"/><ellipse cx="550.0" cy="94.7" rx="1.1" ry="0.8" transform="rotate(3 550.0 94.7)" fill="#ffd98a" opacity="0.83"/><ellipse cx="519.2" cy="100.8" rx="3.4" ry="0.8" transform="rotate(-11 519.2 100.8)" fill="#ffd98a" opacity="0.71"/><ellipse cx="512.2" cy="108.3" rx="2.9" ry="0.8" transform="rotate(-13 512.2 108.3)" fill="#ffd98a" opacity="0.92"/><ellipse cx="544.4" cy="91.7" rx="2.0" ry="0.8" transform="rotate(-48 544.4 91.7)" fill="#ffe9b0" opacity="0.86"/><ellipse cx="562.4" cy="102.4" rx="1.2" ry="0.8" transform="rotate(-49 562.4 102.4)" fill="#ffcf70" opacity="0.70"/><ellipse cx="546.8" cy="91.2" rx="1.8" ry="0.8" transform="rotate(12 546.8 91.2)" fill="#ffe9b0" opacity="0.82"/><ellipse cx="499.7" cy="128.2" rx="3.4" ry="0.8" transform="rotate(-21 499.7 128.2)" fill="#ffd98a" opacity="0.90"/><ellipse cx="578.2" cy="100.9" rx="2.2" ry="0.8" transform="rotate(-41 578.2 100.9)" fill="#ffcf70" opacity="0.74"/><ellipse cx="534.7" cy="112.8" rx="2.5" ry="0.8" transform="rotate(-29 534.7 112.8)" fill="#ffcf70" opacity="0.75"/><ellipse cx="523.4" cy="97.5" rx="1.7" ry="0.8" transform="rotate(-3 523.4 97.5)" fill="#fff3d0" opacity="0.81"/><ellipse cx="502.1" cy="106.6" rx="2.9" ry="0.8" transform="rotate(-24 502.1 106.6)" fill="#ffe9b0" opacity="0.61"/><ellipse cx="537.9" cy="108.8" rx="2.2" ry="0.8" transform="rotate(24 537.9 108.8)" fill="#fff3d0" opacity="0.60"/><ellipse cx="482.6" cy="124.5" rx="2.5" ry="0.8" transform="rotate(-21 482.6 124.5)" fill="#ffcf70" opacity="0.78"/><ellipse cx="546.4" cy="113.8" rx="1.2" ry="0.8" transform="rotate(18 546.4 113.8)" fill="#ffcf70" opacity="0.66"/><ellipse cx="532.0" cy="112.7" rx="1.4" ry="0.8" transform="rotate(-34 532.0 112.7)" fill="#ffd98a" opacity="0.61"/><ellipse cx="545.5" cy="94.2" rx="2.9" ry="0.8" transform="rotate(-32 545.5 94.2)" fill="#ffe9b0" opacity="0.88"/><ellipse cx="514.7" cy="99.5" rx="3.4" ry="0.8" transform="rotate(-49 514.7 99.5)" fill="#fff3d0" opacity="0.72"/><ellipse cx="508.2" cy="97.1" rx="1.4" ry="0.8" transform="rotate(-42 508.2 97.1)" fill="#ffe9b0" opacity="0.83"/><ellipse cx="508.4" cy="100.0" rx="3.3" ry="0.8" transform="rotate(4 508.4 100.0)" fill="#fff3d0" opacity="0.67"/><ellipse cx="525.2" cy="109.5" rx="3.5" ry="0.8" transform="rotate(-18 525.2 109.5)" fill="#ffd98a" opacity="0.67"/><ellipse cx="532.7" cy="107.1" rx="2.5" ry="0.8" transform="rotate(5 532.7 107.1)" fill="#fff3d0" opacity="0.60"/><ellipse cx="569.9" cy="98.8" rx="2.0" ry="0.8" transform="rotate(-56 569.9 98.8)" fill="#fff3d0" opacity="0.98"/><ellipse cx="524.2" cy="99.4" rx="3.0" ry="0.8" transform="rotate(-52 524.2 99.4)" fill="#ffcf70" opacity="0.62"/><ellipse cx="531.3" cy="107.9" rx="2.0" ry="0.8" transform="rotate(-55 531.3 107.9)" fill="#fff3d0" opacity="0.93"/><ellipse cx="499.7" cy="119.8" rx="3.2" ry="0.8" transform="rotate(26 499.7 119.8)" fill="#ffd98a" opacity="0.67"/><ellipse cx="550.2" cy="98.2" rx="2.4" ry="0.8" transform="rotate(-26 550.2 98.2)" fill="#ffd98a" opacity="0.80"/><ellipse cx="573.7" cy="89.7" rx="2.1" ry="0.8" transform="rotate(14 573.7 89.7)" fill="#ffd98a" opacity="0.74"/><ellipse cx="576.0" cy="96.4" rx="2.9" ry="0.8" transform="rotate(-36 576.0 96.4)" fill="#ffcf70" opacity="0.65"/><ellipse cx="569.1" cy="95.4" rx="1.6" ry="0.8" transform="rotate(-52 569.1 95.4)" fill="#ffcf70" opacity="0.89"/><ellipse cx="558.7" cy="93.1" rx="2.2" ry="0.8" transform="rotate(-38 558.7 93.1)" fill="#ffd98a" opacity="0.83"/><ellipse cx="582.5" cy="81.4" rx="1.2" ry="0.8" transform="rotate(9 582.5 81.4)" fill="#ffcf70" opacity="0.81"/><ellipse cx="538.1" cy="99.6" rx="2.6" ry="0.8" transform="rotate(8 538.1 99.6)" fill="#ffe9b0" opacity="0.70"/><ellipse cx="570.4" cy="85.7" rx="3.4" ry="0.8" transform="rotate(6 570.4 85.7)" fill="#ffcf70" opacity="0.64"/><ellipse cx="568.3" cy="88.8" rx="1.3" ry="0.8" transform="rotate(-54 568.3 88.8)" fill="#ffd98a" opacity="0.59"/><ellipse cx="553.7" cy="98.8" rx="1.1" ry="0.8" transform="rotate(-11 553.7 98.8)" fill="#ffe9b0" opacity="0.55"/><ellipse cx="571.7" cy="93.8" rx="1.9" ry="0.8" transform="rotate(17 571.7 93.8)" fill="#ffe9b0" opacity="0.62"/><ellipse cx="554.7" cy="100.7" rx="1.8" ry="0.8" transform="rotate(-59 554.7 100.7)" fill="#ffd98a" opacity="0.80"/><ellipse cx="579.2" cy="94.3" rx="1.4" ry="0.8" transform="rotate(4 579.2 94.3)" fill="#ffcf70" opacity="0.82"/><ellipse cx="553.2" cy="101.2" rx="1.8" ry="0.8" transform="rotate(-20 553.2 101.2)" fill="#ffd98a" opacity="0.71"/><ellipse cx="553.0" cy="101.4" rx="2.9" ry="0.8" transform="rotate(24 553.0 101.4)" fill="#ffcf70" opacity="0.89"/><ellipse cx="559.6" cy="95.2" rx="3.0" ry="0.8" transform="rotate(-22 559.6 95.2)" fill="#ffe9b0" opacity="0.61"/><ellipse cx="593.1" cy="85.9" rx="1.6" ry="0.8" transform="rotate(3 593.1 85.9)" fill="#fff3d0" opacity="0.68"/><ellipse cx="568.5" cy="98.3" rx="1.5" ry="0.8" transform="rotate(-9 568.5 98.3)" fill="#fff3d0" opacity="0.82"/><ellipse cx="566.1" cy="89.3" rx="3.0" ry="0.8" transform="rotate(13 566.1 89.3)" fill="#ffe9b0" opacity="0.76"/><ellipse cx="559.7" cy="98.5" rx="3.1" ry="0.8" transform="rotate(-16 559.7 98.5)" fill="#ffe9b0" opacity="0.57"/><ellipse cx="549.5" cy="105.8" rx="1.7" ry="0.8" transform="rotate(23 549.5 105.8)" fill="#fff3d0" opacity="0.71"/><ellipse cx="549.8" cy="101.2" rx="1.2" ry="0.8" transform="rotate(-42 549.8 101.2)" fill="#ffe9b0" opacity="0.58"/><ellipse cx="549.5" cy="95.2" rx="3.0" ry="0.8" transform="rotate(-58 549.5 95.2)" fill="#ffe9b0" opacity="0.76"/><ellipse cx="549.7" cy="99.4" rx="2.4" ry="0.8" transform="rotate(2 549.7 99.4)" fill="#ffcf70" opacity="0.89"/><ellipse cx="573.2" cy="80.5" rx="2.7" ry="0.8" transform="rotate(0 573.2 80.5)" fill="#ffd98a" opacity="0.83"/><ellipse cx="555.5" cy="103.9" rx="2.7" ry="0.8" transform="rotate(-13 555.5 103.9)" fill="#fff3d0" opacity="0.64"/><ellipse cx="587.3" cy="89.4" rx="2.5" ry="0.8" transform="rotate(18 587.3 89.4)" fill="#ffcf70" opacity="0.65"/><ellipse cx="573.7" cy="90.2" rx="2.8" ry="0.8" transform="rotate(-54 573.7 90.2)" fill="#ffe9b0" opacity="0.78"/><ellipse cx="590.4" cy="83.5" rx="2.7" ry="0.8" transform="rotate(15 590.4 83.5)" fill="#ffd98a" opacity="0.71"/><ellipse cx="570.9" cy="94.6" rx="1.9" ry="0.8" transform="rotate(11 570.9 94.6)" fill="#ffcf70" opacity="0.68"/><ellipse cx="577.8" cy="90.9" rx="1.4" ry="0.8" transform="rotate(-1 577.8 90.9)" fill="#ffd98a" opacity="0.87"/><ellipse cx="554.3" cy="94.8" rx="1.3" ry="0.8" transform="rotate(2 554.3 94.8)" fill="#fff3d0" opacity="0.63"/><ellipse cx="574.5" cy="94.7" rx="3.0" ry="0.8" transform="rotate(12 574.5 94.7)" fill="#ffe9b0" opacity="0.86"/><ellipse cx="576.1" cy="98.4" rx="2.9" ry="0.8" transform="rotate(-40 576.1 98.4)" fill="#ffe9b0" opacity="0.75"/><ellipse cx="550.4" cy="93.9" rx="2.4" ry="0.8" transform="rotate(-23 550.4 93.9)" fill="#ffd98a" opacity="0.69"/><ellipse cx="537.0" cy="101.9" rx="1.8" ry="0.8" transform="rotate(-35 537.0 101.9)" fill="#fff3d0" opacity="0.61"/><ellipse cx="571.4" cy="93.5" rx="2.4" ry="0.8" transform="rotate(-6 571.4 93.5)" fill="#ffd98a" opacity="0.70"/><ellipse cx="562.9" cy="98.0" rx="3.0" ry="0.8" transform="rotate(-30 562.9 98.0)" fill="#ffe9b0" opacity="0.56"/><ellipse cx="541.1" cy="103.8" rx="3.4" ry="0.8" transform="rotate(-31 541.1 103.8)" fill="#ffcf70" opacity="0.77"/><ellipse cx="572.8" cy="90.7" rx="2.7" ry="0.8" transform="rotate(16 572.8 90.7)" fill="#ffcf70" opacity="0.84"/><ellipse cx="584.2" cy="88.8" rx="1.3" ry="0.8" transform="rotate(-30 584.2 88.8)" fill="#fff3d0" opacity="0.76"/><ellipse cx="583.8" cy="94.7" rx="2.8" ry="0.8" transform="rotate(13 583.8 94.7)" fill="#ffd98a" opacity="0.80"/><ellipse cx="591.7" cy="79.8" rx="2.6" ry="0.8" transform="rotate(27 591.7 79.8)" fill="#ffe9b0" opacity="0.67"/><ellipse cx="567.3" cy="90.8" rx="1.8" ry="0.8" transform="rotate(-44 567.3 90.8)" fill="#ffe9b0" opacity="0.63"/><ellipse cx="577.7" cy="88.6" rx="1.0" ry="0.8" transform="rotate(28 577.7 88.6)" fill="#fff3d0" opacity="0.59"/><ellipse cx="577.6" cy="91.0" rx="1.9" ry="0.8" transform="rotate(7 577.6 91.0)" fill="#ffcf70" opacity="0.81"/><ellipse cx="561.7" cy="91.4" rx="1.3" ry="0.8" transform="rotate(-17 561.7 91.4)" fill="#fff3d0" opacity="0.81"/><ellipse cx="570.4" cy="98.2" rx="1.4" ry="0.8" transform="rotate(22 570.4 98.2)" fill="#ffe9b0" opacity="0.75"/><ellipse cx="503.3" cy="120.9" rx="1.2" ry="0.8" transform="rotate(-36 503.3 120.9)" fill="#ffe9b0" opacity="0.66"/><ellipse cx="494.2" cy="118.1" rx="3.1" ry="0.8" transform="rotate(17 494.2 118.1)" fill="#ffd98a" opacity="0.51"/><ellipse cx="490.0" cy="125.1" rx="1.0" ry="0.8" transform="rotate(9 490.0 125.1)" fill="#fff3d0" opacity="0.74"/><ellipse cx="513.9" cy="111.3" rx="3.4" ry="0.8" transform="rotate(18 513.9 111.3)" fill="#ffe9b0" opacity="0.50"/><ellipse cx="509.4" cy="124.5" rx="2.1" ry="0.8" transform="rotate(-18 509.4 124.5)" fill="#ffe9b0" opacity="0.79"/><ellipse cx="481.8" cy="115.7" rx="2.2" ry="0.8" transform="rotate(-58 481.8 115.7)" fill="#ffd98a" opacity="0.61"/><ellipse cx="500.6" cy="109.8" rx="2.5" ry="0.8" transform="rotate(21 500.6 109.8)" fill="#ffe9b0" opacity="0.55"/><ellipse cx="485.9" cy="123.2" rx="3.0" ry="0.8" transform="rotate(14 485.9 123.2)" fill="#ffcf70" opacity="0.77"/><ellipse cx="474.7" cy="135.4" rx="2.9" ry="0.8" transform="rotate(20 474.7 135.4)" fill="#ffd98a" opacity="0.58"/><ellipse cx="509.8" cy="120.2" rx="1.2" ry="0.8" transform="rotate(-27 509.8 120.2)" fill="#ffcf70" opacity="0.61"/><ellipse cx="500.0" cy="120.3" rx="1.7" ry="0.8" transform="rotate(-0 500.0 120.3)" fill="#ffe9b0" opacity="0.73"/><ellipse cx="499.7" cy="113.2" rx="2.7" ry="0.8" transform="rotate(-57 499.7 113.2)" fill="#ffcf70" opacity="0.76"/><ellipse cx="500.9" cy="115.6" rx="3.1" ry="0.8" transform="rotate(26 500.9 115.6)" fill="#ffcf70" opacity="0.52"/><ellipse cx="505.1" cy="123.9" rx="3.3" ry="0.8" transform="rotate(-57 505.1 123.9)" fill="#ffd98a" opacity="0.74"/><ellipse cx="505.3" cy="114.6" rx="2.6" ry="0.8" transform="rotate(-30 505.3 114.6)" fill="#ffd98a" opacity="0.53"/><ellipse cx="470.7" cy="123.0" rx="2.8" ry="0.8" transform="rotate(-52 470.7 123.0)" fill="#ffe9b0" opacity="0.51"/><ellipse cx="493.4" cy="119.5" rx="3.3" ry="0.8" transform="rotate(-11 493.4 119.5)" fill="#ffcf70" opacity="0.79"/><ellipse cx="502.6" cy="120.3" rx="1.7" ry="0.8" transform="rotate(-11 502.6 120.3)" fill="#ffcf70" opacity="0.52"/><ellipse cx="483.6" cy="121.2" rx="1.0" ry="0.8" transform="rotate(9 483.6 121.2)" fill="#ffcf70" opacity="0.55"/><ellipse cx="497.3" cy="112.5" rx="1.8" ry="0.8" transform="rotate(12 497.3 112.5)" fill="#ffd98a" opacity="0.49"/><ellipse cx="493.4" cy="120.0" rx="1.1" ry="0.8" transform="rotate(-33 493.4 120.0)" fill="#ffcf70" opacity="0.51"/><ellipse cx="518.7" cy="116.1" rx="2.4" ry="0.8" transform="rotate(-35 518.7 116.1)" fill="#ffcf70" opacity="0.80"/><ellipse cx="498.7" cy="118.1" rx="3.3" ry="0.8" transform="rotate(-53 498.7 118.1)" fill="#ffcf70" opacity="0.50"/><ellipse cx="505.4" cy="119.6" rx="1.2" ry="0.8" transform="rotate(-14 505.4 119.6)" fill="#fff3d0" opacity="0.75"/><ellipse cx="507.4" cy="115.9" rx="2.2" ry="0.8" transform="rotate(-9 507.4 115.9)" fill="#ffd98a" opacity="0.66"/><ellipse cx="517.6" cy="111.3" rx="1.3" ry="0.8" transform="rotate(20 517.6 111.3)" fill="#fff3d0" opacity="0.79"/><ellipse cx="500.4" cy="118.7" rx="3.0" ry="0.8" transform="rotate(7 500.4 118.7)" fill="#fff3d0" opacity="0.56"/><ellipse cx="508.2" cy="112.9" rx="1.4" ry="0.8" transform="rotate(11 508.2 112.9)" fill="#fff3d0" opacity="0.67"/><ellipse cx="514.6" cy="102.8" rx="3.1" ry="0.8" transform="rotate(-7 514.6 102.8)" fill="#ffe9b0" opacity="0.77"/><ellipse cx="497.2" cy="117.8" rx="2.1" ry="0.8" transform="rotate(2 497.2 117.8)" fill="#ffcf70" opacity="0.70"/><ellipse cx="498.3" cy="114.7" rx="2.0" ry="0.8" transform="rotate(-23 498.3 114.7)" fill="#ffcf70" opacity="0.68"/><ellipse cx="508.0" cy="123.8" rx="1.3" ry="0.8" transform="rotate(-54 508.0 123.8)" fill="#ffe9b0" opacity="0.49"/><ellipse cx="496.9" cy="112.1" rx="2.3" ry="0.8" transform="rotate(-11 496.9 112.1)" fill="#ffe9b0" opacity="0.79"/><ellipse cx="495.3" cy="113.1" rx="2.0" ry="0.8" transform="rotate(-33 495.3 113.1)" fill="#ffcf70" opacity="0.58"/><ellipse cx="518.1" cy="109.2" rx="2.3" ry="0.8" transform="rotate(21 518.1 109.2)" fill="#ffcf70" opacity="0.60"/><ellipse cx="483.0" cy="111.1" rx="1.8" ry="0.8" transform="rotate(-5 483.0 111.1)" fill="#ffcf70" opacity="0.51"/><ellipse cx="497.8" cy="117.2" rx="2.1" ry="0.8" transform="rotate(-4 497.8 117.2)" fill="#ffcf70" opacity="0.54"/><ellipse cx="509.2" cy="116.2" rx="2.7" ry="0.8" transform="rotate(-20 509.2 116.2)" fill="#fff3d0" opacity="0.77"/><ellipse cx="506.0" cy="116.0" rx="2.2" ry="0.8" transform="rotate(-12 506.0 116.0)" fill="#ffd98a" opacity="0.66"/><ellipse cx="492.9" cy="113.1" rx="3.0" ry="0.8" transform="rotate(15 492.9 113.1)" fill="#fff3d0" opacity="0.68"/><ellipse cx="1327.7" cy="107.3" rx="2.7" ry="0.8" transform="rotate(-50 1327.7 107.3)" fill="#ffe9b0" opacity="0.64"/><ellipse cx="1286.9" cy="107.1" rx="2.5" ry="0.8" transform="rotate(-56 1286.9 107.1)" fill="#ffcf70" opacity="0.67"/><ellipse cx="1297.4" cy="120.1" rx="1.2" ry="0.8" transform="rotate(17 1297.4 120.1)" fill="#ffe9b0" opacity="0.72"/><ellipse cx="1304.4" cy="114.5" rx="3.5" ry="0.8" transform="rotate(-23 1304.4 114.5)" fill="#ffe9b0" opacity="0.72"/><ellipse cx="1322.7" cy="115.9" rx="3.0" ry="0.8" transform="rotate(21 1322.7 115.9)" fill="#ffcf70" opacity="0.64"/><ellipse cx="1298.7" cy="113.4" rx="1.1" ry="0.8" transform="rotate(-9 1298.7 113.4)" fill="#fff3d0" opacity="0.86"/><ellipse cx="1299.9" cy="106.4" rx="1.9" ry="0.8" transform="rotate(-53 1299.9 106.4)" fill="#ffcf70" opacity="0.64"/><ellipse cx="1305.9" cy="106.2" rx="2.3" ry="0.8" transform="rotate(-52 1305.9 106.2)" fill="#ffcf70" opacity="0.77"/><ellipse cx="1305.8" cy="116.2" rx="3.4" ry="0.8" transform="rotate(-21 1305.8 116.2)" fill="#ffd98a" opacity="0.95"/><ellipse cx="1312.7" cy="106.5" rx="2.6" ry="0.8" transform="rotate(-44 1312.7 106.5)" fill="#ffd98a" opacity="0.73"/><ellipse cx="1310.0" cy="101.2" rx="1.3" ry="0.8" transform="rotate(-55 1310.0 101.2)" fill="#ffcf70" opacity="0.72"/><ellipse cx="1283.3" cy="113.1" rx="2.6" ry="0.8" transform="rotate(-37 1283.3 113.1)" fill="#ffd98a" opacity="0.90"/><ellipse cx="1307.3" cy="115.0" rx="2.9" ry="0.8" transform="rotate(-6 1307.3 115.0)" fill="#ffd98a" opacity="0.84"/><ellipse cx="1276.8" cy="122.2" rx="2.9" ry="0.8" transform="rotate(-20 1276.8 122.2)" fill="#ffd98a" opacity="0.65"/><ellipse cx="1309.4" cy="110.0" rx="2.1" ry="0.8" transform="rotate(-4 1309.4 110.0)" fill="#ffd98a" opacity="0.92"/><ellipse cx="1295.4" cy="113.0" rx="3.2" ry="0.8" transform="rotate(-4 1295.4 113.0)" fill="#ffe9b0" opacity="0.82"/><ellipse cx="1297.4" cy="110.5" rx="1.1" ry="0.8" transform="rotate(-8 1297.4 110.5)" fill="#ffcf70" opacity="0.86"/><ellipse cx="1280.2" cy="118.2" rx="3.3" ry="0.8" transform="rotate(-35 1280.2 118.2)" fill="#fff3d0" opacity="0.62"/><ellipse cx="1304.2" cy="116.3" rx="1.7" ry="0.8" transform="rotate(-27 1304.2 116.3)" fill="#ffd98a" opacity="0.72"/><ellipse cx="1320.6" cy="117.4" rx="1.1" ry="0.8" transform="rotate(-16 1320.6 117.4)" fill="#ffd98a" opacity="0.72"/><ellipse cx="1315.4" cy="99.3" rx="2.1" ry="0.8" transform="rotate(15 1315.4 99.3)" fill="#ffcf70" opacity="0.74"/><ellipse cx="1302.3" cy="103.5" rx="2.8" ry="0.8" transform="rotate(-5 1302.3 103.5)" fill="#ffe9b0" opacity="0.66"/><ellipse cx="1305.4" cy="109.2" rx="3.0" ry="0.8" transform="rotate(9 1305.4 109.2)" fill="#fff3d0" opacity="0.62"/><ellipse cx="1291.3" cy="112.4" rx="1.3" ry="0.8" transform="rotate(-42 1291.3 112.4)" fill="#ffd98a" opacity="0.94"/><ellipse cx="1310.9" cy="118.0" rx="2.6" ry="0.8" transform="rotate(-25 1310.9 118.0)" fill="#ffd98a" opacity="0.86"/><ellipse cx="1313.1" cy="104.8" rx="1.6" ry="0.8" transform="rotate(-54 1313.1 104.8)" fill="#fff3d0" opacity="0.77"/><ellipse cx="1301.3" cy="119.2" rx="1.9" ry="0.8" transform="rotate(-6 1301.3 119.2)" fill="#ffcf70" opacity="0.91"/><ellipse cx="1298.6" cy="99.6" rx="2.3" ry="0.8" transform="rotate(-60 1298.6 99.6)" fill="#ffcf70" opacity="0.62"/><ellipse cx="1328.1" cy="102.7" rx="1.3" ry="0.8" transform="rotate(-19 1328.1 102.7)" fill="#ffcf70" opacity="0.96"/><ellipse cx="1295.9" cy="113.2" rx="1.2" ry="0.8" transform="rotate(9 1295.9 113.2)" fill="#ffcf70" opacity="0.93"/><ellipse cx="1288.9" cy="108.6" rx="3.1" ry="0.8" transform="rotate(-4 1288.9 108.6)" fill="#ffe9b0" opacity="0.86"/><ellipse cx="1292.4" cy="115.7" rx="3.4" ry="0.8" transform="rotate(3 1292.4 115.7)" fill="#ffd98a" opacity="0.64"/><ellipse cx="1302.7" cy="111.9" rx="1.6" ry="0.8" transform="rotate(-60 1302.7 111.9)" fill="#ffcf70" opacity="0.62"/><ellipse cx="1319.1" cy="115.4" rx="2.0" ry="0.8" transform="rotate(9 1319.1 115.4)" fill="#ffe9b0" opacity="0.96"/><ellipse cx="1301.6" cy="106.8" rx="2.0" ry="0.8" transform="rotate(-19 1301.6 106.8)" fill="#ffcf70" opacity="0.98"/><ellipse cx="1305.7" cy="116.0" rx="1.5" ry="0.8" transform="rotate(2 1305.7 116.0)" fill="#fff3d0" opacity="0.91"/><ellipse cx="1323.0" cy="94.3" rx="3.0" ry="0.8" transform="rotate(-23 1323.0 94.3)" fill="#ffcf70" opacity="0.89"/><ellipse cx="1313.1" cy="113.9" rx="2.8" ry="0.8" transform="rotate(18 1313.1 113.9)" fill="#ffe9b0" opacity="0.68"/><ellipse cx="1281.3" cy="114.8" rx="1.9" ry="0.8" transform="rotate(-51 1281.3 114.8)" fill="#ffcf70" opacity="0.74"/><ellipse cx="1313.6" cy="110.2" rx="1.0" ry="0.8" transform="rotate(-47 1313.6 110.2)" fill="#ffcf70" opacity="0.98"/><ellipse cx="1302.5" cy="101.3" rx="2.2" ry="0.8" transform="rotate(15 1302.5 101.3)" fill="#fff3d0" opacity="0.89"/><ellipse cx="1315.9" cy="101.5" rx="1.9" ry="0.8" transform="rotate(29 1315.9 101.5)" fill="#fff3d0" opacity="0.90"/><ellipse cx="1283.5" cy="117.7" rx="2.1" ry="0.8" transform="rotate(23 1283.5 117.7)" fill="#ffcf70" opacity="0.67"/><ellipse cx="1294.4" cy="115.5" rx="3.1" ry="0.8" transform="rotate(-39 1294.4 115.5)" fill="#fff3d0" opacity="0.64"/><ellipse cx="1283.6" cy="115.4" rx="2.2" ry="0.8" transform="rotate(-53 1283.6 115.4)" fill="#fff3d0" opacity="0.64"/><ellipse cx="1302.7" cy="104.3" rx="1.8" ry="0.8" transform="rotate(17 1302.7 104.3)" fill="#ffe9b0" opacity="0.72"/><ellipse cx="1302.3" cy="107.6" rx="2.3" ry="0.8" transform="rotate(-53 1302.3 107.6)" fill="#ffe9b0" opacity="0.62"/><ellipse cx="1291.4" cy="113.2" rx="2.1" ry="0.8" transform="rotate(-46 1291.4 113.2)" fill="#fff3d0" opacity="0.85"/><ellipse cx="1294.0" cy="124.5" rx="2.0" ry="0.8" transform="rotate(-46 1294.0 124.5)" fill="#ffcf70" opacity="0.44"/><ellipse cx="1288.7" cy="126.5" rx="2.7" ry="0.8" transform="rotate(-18 1288.7 126.5)" fill="#ffe9b0" opacity="0.65"/><ellipse cx="1288.9" cy="125.4" rx="3.4" ry="0.8" transform="rotate(3 1288.9 125.4)" fill="#ffe9b0" opacity="0.59"/><ellipse cx="1292.5" cy="123.1" rx="2.1" ry="0.8" transform="rotate(20 1292.5 123.1)" fill="#fff3d0" opacity="0.56"/><ellipse cx="1294.6" cy="124.8" rx="3.2" ry="0.8" transform="rotate(-23 1294.6 124.8)" fill="#ffd98a" opacity="0.59"/><ellipse cx="1286.6" cy="127.2" rx="1.3" ry="0.8" transform="rotate(-20 1286.6 127.2)" fill="#ffe9b0" opacity="0.51"/><ellipse cx="1286.7" cy="128.0" rx="2.5" ry="0.8" transform="rotate(-44 1286.7 128.0)" fill="#ffcf70" opacity="0.46"/><ellipse cx="1288.8" cy="127.7" rx="2.5" ry="0.8" transform="rotate(3 1288.8 127.7)" fill="#ffe9b0" opacity="0.44"/><ellipse cx="1295.6" cy="124.5" rx="1.7" ry="0.8" transform="rotate(-1 1295.6 124.5)" fill="#ffe9b0" opacity="0.54"/><ellipse cx="1288.9" cy="128.1" rx="2.3" ry="0.8" transform="rotate(30 1288.9 128.1)" fill="#ffcf70" opacity="0.66"/><ellipse cx="1283.2" cy="124.7" rx="1.4" ry="0.8" transform="rotate(-17 1283.2 124.7)" fill="#fff3d0" opacity="0.66"/><ellipse cx="1294.2" cy="124.7" rx="1.7" ry="0.8" transform="rotate(23 1294.2 124.7)" fill="#fff3d0" opacity="0.68"/><ellipse cx="1293.8" cy="123.1" rx="3.1" ry="0.8" transform="rotate(30 1293.8 123.1)" fill="#ffd98a" opacity="0.46"/><ellipse cx="1291.0" cy="122.4" rx="1.9" ry="0.8" transform="rotate(-44 1291.0 122.4)" fill="#ffcf70" opacity="0.42"/><ellipse cx="1288.0" cy="124.1" rx="1.5" ry="0.8" transform="rotate(-46 1288.0 124.1)" fill="#ffcf70" opacity="0.45"/><ellipse cx="1288.2" cy="126.4" rx="1.5" ry="0.8" transform="rotate(-23 1288.2 126.4)" fill="#ffcf70" opacity="0.67"/><ellipse cx="1325.5" cy="95.1" rx="1.2" ry="0.8" transform="rotate(-30 1325.5 95.1)" fill="#fff3d0" opacity="0.47"/><ellipse cx="1321.4" cy="94.3" rx="2.2" ry="0.8" transform="rotate(-35 1321.4 94.3)" fill="#ffd98a" opacity="0.43"/><ellipse cx="1324.5" cy="100.3" rx="3.0" ry="0.8" transform="rotate(-40 1324.5 100.3)" fill="#ffcf70" opacity="0.42"/><ellipse cx="1316.2" cy="92.6" rx="1.3" ry="0.8" transform="rotate(2 1316.2 92.6)" fill="#ffe9b0" opacity="0.49"/><ellipse cx="1322.4" cy="94.7" rx="3.5" ry="0.8" transform="rotate(7 1322.4 94.7)" fill="#fff3d0" opacity="0.64"/><ellipse cx="1320.3" cy="96.3" rx="1.7" ry="0.8" transform="rotate(-54 1320.3 96.3)" fill="#ffd98a" opacity="0.49"/><ellipse cx="1329.2" cy="91.0" rx="2.9" ry="0.8" transform="rotate(-18 1329.2 91.0)" fill="#ffd98a" opacity="0.66"/><ellipse cx="1317.9" cy="92.0" rx="3.3" ry="0.8" transform="rotate(-10 1317.9 92.0)" fill="#ffcf70" opacity="0.61"/><ellipse cx="1325.3" cy="94.8" rx="2.7" ry="0.8" transform="rotate(-60 1325.3 94.8)" fill="#ffd98a" opacity="0.45"/><ellipse cx="1323.6" cy="94.7" rx="1.9" ry="0.8" transform="rotate(26 1323.6 94.7)" fill="#ffcf70" opacity="0.42"/><ellipse cx="1319.9" cy="94.9" rx="3.4" ry="0.8" transform="rotate(-13 1319.9 94.9)" fill="#fff3d0" opacity="0.51"/><ellipse cx="1312.3" cy="94.2" rx="3.0" ry="0.8" transform="rotate(-33 1312.3 94.2)" fill="#ffd98a" opacity="0.61"/><ellipse cx="1316.9" cy="95.2" rx="3.3" ry="0.8" transform="rotate(-9 1316.9 95.2)" fill="#ffe9b0" opacity="0.48"/><ellipse cx="1323.1" cy="97.2" rx="2.5" ry="0.8" transform="rotate(-35 1323.1 97.2)" fill="#ffd98a" opacity="0.48"/><ellipse cx="1322.1" cy="93.8" rx="2.5" ry="0.8" transform="rotate(3 1322.1 93.8)" fill="#ffcf70" opacity="0.48"/><ellipse cx="1316.1" cy="97.0" rx="1.6" ry="0.8" transform="rotate(-6 1316.1 97.0)" fill="#ffcf70" opacity="0.64"/><ellipse cx="1314.7" cy="94.0" rx="2.6" ry="0.8" transform="rotate(-9 1314.7 94.0)" fill="#ffe9b0" opacity="0.50"/><ellipse cx="1313.1" cy="96.1" rx="2.6" ry="0.8" transform="rotate(-32 1313.1 96.1)" fill="#fff3d0" opacity="0.65"/><ellipse cx="1323.5" cy="91.4" rx="1.8" ry="0.8" transform="rotate(-43 1323.5 91.4)" fill="#ffd98a" opacity="0.63"/><ellipse cx="848.8" cy="102.6" rx="2.4" ry="0.8" transform="rotate(-42 848.8 102.6)" fill="#ffd98a" opacity="0.57"/><ellipse cx="847.1" cy="101.9" rx="2.6" ry="0.8" transform="rotate(-32 847.1 101.9)" fill="#ffe9b0" opacity="0.68"/><ellipse cx="850.6" cy="103.5" rx="1.7" ry="0.8" transform="rotate(21 850.6 103.5)" fill="#ffcf70" opacity="0.74"/><ellipse cx="852.5" cy="104.0" rx="3.4" ry="0.8" transform="rotate(-23 852.5 104.0)" fill="#ffcf70" opacity="0.78"/><ellipse cx="867.4" cy="101.6" rx="2.0" ry="0.8" transform="rotate(-6 867.4 101.6)" fill="#ffd98a" opacity="0.64"/><ellipse cx="840.6" cy="103.8" rx="2.7" ry="0.8" transform="rotate(-27 840.6 103.8)" fill="#ffd98a" opacity="0.78"/><ellipse cx="840.3" cy="101.4" rx="2.8" ry="0.8" transform="rotate(-39 840.3 101.4)" fill="#ffe9b0" opacity="0.57"/><ellipse cx="852.8" cy="102.0" rx="2.2" ry="0.8" transform="rotate(17 852.8 102.0)" fill="#ffd98a" opacity="0.72"/><ellipse cx="827.6" cy="112.3" rx="2.1" ry="0.8" transform="rotate(-9 827.6 112.3)" fill="#ffd98a" opacity="0.58"/><ellipse cx="838.2" cy="98.9" rx="1.2" ry="0.8" transform="rotate(10 838.2 98.9)" fill="#ffcf70" opacity="0.65"/><ellipse cx="846.8" cy="97.9" rx="1.4" ry="0.8" transform="rotate(-16 846.8 97.9)" fill="#ffd98a" opacity="0.79"/><ellipse cx="847.9" cy="98.0" rx="1.2" ry="0.8" transform="rotate(-22 847.9 98.0)" fill="#ffd98a" opacity="0.78"/><ellipse cx="844.4" cy="102.1" rx="2.9" ry="0.8" transform="rotate(-12 844.4 102.1)" fill="#fff3d0" opacity="0.71"/><ellipse cx="853.6" cy="101.5" rx="2.2" ry="0.8" transform="rotate(-1 853.6 101.5)" fill="#fff3d0" opacity="0.50"/><ellipse cx="851.3" cy="102.2" rx="2.2" ry="0.8" transform="rotate(-56 851.3 102.2)" fill="#ffd98a" opacity="0.66"/><ellipse cx="847.2" cy="113.4" rx="1.6" ry="0.8" transform="rotate(0 847.2 113.4)" fill="#ffcf70" opacity="0.69"/><ellipse cx="829.2" cy="107.1" rx="2.2" ry="0.8" transform="rotate(-30 829.2 107.1)" fill="#fff3d0" opacity="0.55"/><ellipse cx="839.2" cy="108.0" rx="3.0" ry="0.8" transform="rotate(-39 839.2 108.0)" fill="#fff3d0" opacity="0.73"/><ellipse cx="851.4" cy="101.8" rx="1.6" ry="0.8" transform="rotate(-34 851.4 101.8)" fill="#ffcf70" opacity="0.56"/><ellipse cx="834.1" cy="107.6" rx="1.1" ry="0.8" transform="rotate(0 834.1 107.6)" fill="#ffe9b0" opacity="0.51"/><ellipse cx="844.2" cy="107.1" rx="3.3" ry="0.8" transform="rotate(-40 844.2 107.1)" fill="#fff3d0" opacity="0.78"/><ellipse cx="861.3" cy="101.7" rx="2.1" ry="0.8" transform="rotate(-60 861.3 101.7)" fill="#fff3d0" opacity="0.75"/><ellipse cx="837.3" cy="107.0" rx="1.2" ry="0.8" transform="rotate(-51 837.3 107.0)" fill="#fff3d0" opacity="0.58"/><ellipse cx="829.0" cy="111.8" rx="3.3" ry="0.8" transform="rotate(-47 829.0 111.8)" fill="#fff3d0" opacity="0.57"/><ellipse cx="827.7" cy="114.0" rx="1.0" ry="0.8" transform="rotate(-17 827.7 114.0)" fill="#ffcf70" opacity="0.51"/><ellipse cx="841.9" cy="105.8" rx="3.5" ry="0.8" transform="rotate(-50 841.9 105.8)" fill="#ffd98a" opacity="0.69"/><ellipse cx="837.3" cy="107.3" rx="1.5" ry="0.8" transform="rotate(1 837.3 107.3)" fill="#ffcf70" opacity="0.65"/><ellipse cx="842.5" cy="107.2" rx="1.1" ry="0.8" transform="rotate(-49 842.5 107.2)" fill="#ffcf70" opacity="0.61"/><ellipse cx="672.0" cy="118.0" rx="1.6" ry="0.8" transform="rotate(-16 672.0 118.0)" fill="#fff3d0" opacity="0.50"/><ellipse cx="679.0" cy="119.2" rx="2.4" ry="0.8" transform="rotate(-34 679.0 119.2)" fill="#ffcf70" opacity="0.49"/><ellipse cx="677.2" cy="113.9" rx="2.7" ry="0.8" transform="rotate(-55 677.2 113.9)" fill="#ffcf70" opacity="0.65"/><ellipse cx="670.7" cy="118.5" rx="1.9" ry="0.8" transform="rotate(2 670.7 118.5)" fill="#ffcf70" opacity="0.54"/><ellipse cx="659.2" cy="124.8" rx="3.3" ry="0.8" transform="rotate(-16 659.2 124.8)" fill="#ffd98a" opacity="0.62"/><ellipse cx="672.1" cy="120.8" rx="1.3" ry="0.8" transform="rotate(-18 672.1 120.8)" fill="#ffe9b0" opacity="0.79"/><ellipse cx="665.2" cy="125.9" rx="3.1" ry="0.8" transform="rotate(24 665.2 125.9)" fill="#ffd98a" opacity="0.50"/><ellipse cx="668.6" cy="123.4" rx="3.3" ry="0.8" transform="rotate(1 668.6 123.4)" fill="#ffe9b0" opacity="0.72"/><ellipse cx="663.6" cy="124.6" rx="3.1" ry="0.8" transform="rotate(-26 663.6 124.6)" fill="#ffcf70" opacity="0.60"/><ellipse cx="669.1" cy="122.3" rx="3.4" ry="0.8" transform="rotate(-6 669.1 122.3)" fill="#ffe9b0" opacity="0.59"/><ellipse cx="677.9" cy="118.2" rx="3.3" ry="0.8" transform="rotate(-22 677.9 118.2)" fill="#ffcf70" opacity="0.69"/><ellipse cx="684.4" cy="120.3" rx="1.9" ry="0.8" transform="rotate(-24 684.4 120.3)" fill="#ffe9b0" opacity="0.60"/><ellipse cx="668.0" cy="121.8" rx="1.4" ry="0.8" transform="rotate(-30 668.0 121.8)" fill="#fff3d0" opacity="0.64"/><ellipse cx="675.3" cy="122.1" rx="3.3" ry="0.8" transform="rotate(-56 675.3 122.1)" fill="#ffcf70" opacity="0.58"/><ellipse cx="674.5" cy="119.6" rx="3.4" ry="0.8" transform="rotate(-52 674.5 119.6)" fill="#ffd98a" opacity="0.67"/><ellipse cx="663.0" cy="121.9" rx="2.7" ry="0.8" transform="rotate(-17 663.0 121.9)" fill="#ffcf70" opacity="0.62"/><ellipse cx="670.6" cy="114.4" rx="2.6" ry="0.8" transform="rotate(-7 670.6 114.4)" fill="#ffd98a" opacity="0.51"/><ellipse cx="668.4" cy="117.5" rx="2.8" ry="0.8" transform="rotate(-8 668.4 117.5)" fill="#fff3d0" opacity="0.73"/><ellipse cx="673.8" cy="114.7" rx="2.4" ry="0.8" transform="rotate(25 673.8 114.7)" fill="#ffe9b0" opacity="0.70"/><ellipse cx="430.7" cy="170.1" rx="2.6" ry="0.8" transform="rotate(-34 430.7 170.1)" fill="#ffd98a" opacity="0.68"/><ellipse cx="424.6" cy="166.9" rx="3.1" ry="0.8" transform="rotate(-34 424.6 166.9)" fill="#ffcf70" opacity="0.72"/><ellipse cx="424.3" cy="170.7" rx="1.8" ry="0.8" transform="rotate(28 424.3 170.7)" fill="#ffcf70" opacity="0.63"/><ellipse cx="416.3" cy="169.5" rx="1.7" ry="0.8" transform="rotate(-53 416.3 169.5)" fill="#ffe9b0" opacity="0.51"/><ellipse cx="432.1" cy="167.9" rx="2.6" ry="0.8" transform="rotate(-50 432.1 167.9)" fill="#fff3d0" opacity="0.80"/><ellipse cx="418.9" cy="170.4" rx="2.2" ry="0.8" transform="rotate(-27 418.9 170.4)" fill="#fff3d0" opacity="0.52"/><ellipse cx="433.7" cy="164.5" rx="2.9" ry="0.8" transform="rotate(-11 433.7 164.5)" fill="#ffe9b0" opacity="0.64"/><ellipse cx="427.9" cy="166.7" rx="1.7" ry="0.8" transform="rotate(-4 427.9 166.7)" fill="#ffd98a" opacity="0.72"/><ellipse cx="423.5" cy="169.8" rx="2.9" ry="0.8" transform="rotate(-41 423.5 169.8)" fill="#ffcf70" opacity="0.70"/><ellipse cx="426.0" cy="168.2" rx="2.5" ry="0.8" transform="rotate(11 426.0 168.2)" fill="#ffd98a" opacity="0.67"/><ellipse cx="431.7" cy="163.9" rx="2.2" ry="0.8" transform="rotate(-50 431.7 163.9)" fill="#ffd98a" opacity="0.66"/><ellipse cx="413.1" cy="168.1" rx="2.5" ry="0.8" transform="rotate(-15 413.1 168.1)" fill="#ffd98a" opacity="0.68"/><ellipse cx="421.9" cy="170.6" rx="2.7" ry="0.8" transform="rotate(-25 421.9 170.6)" fill="#ffe9b0" opacity="0.61"/><ellipse cx="435.0" cy="164.8" rx="2.1" ry="0.8" transform="rotate(-17 435.0 164.8)" fill="#ffcf70" opacity="0.74"/><ellipse cx="423.8" cy="171.2" rx="2.9" ry="0.8" transform="rotate(1 423.8 171.2)" fill="#ffcf70" opacity="0.52"/><ellipse cx="421.1" cy="162.5" rx="2.8" ry="0.8" transform="rotate(2 421.1 162.5)" fill="#ffe9b0" opacity="0.54"/><ellipse cx="427.9" cy="163.9" rx="3.3" ry="0.8" transform="rotate(-30 427.9 163.9)" fill="#ffcf70" opacity="0.80"/><ellipse cx="423.1" cy="171.5" rx="1.3" ry="0.8" transform="rotate(2 423.1 171.5)" fill="#ffe9b0" opacity="0.70"/><ellipse cx="423.3" cy="168.8" rx="3.2" ry="0.8" transform="rotate(23 423.3 168.8)" fill="#ffcf70" opacity="0.72"/><ellipse cx="423.7" cy="170.6" rx="1.9" ry="0.8" transform="rotate(28 423.7 170.6)" fill="#ffd98a" opacity="0.51"/><ellipse cx="414.2" cy="164.8" rx="1.8" ry="0.8" transform="rotate(-57 414.2 164.8)" fill="#ffcf70" opacity="0.77"/><ellipse cx="421.6" cy="168.2" rx="2.5" ry="0.8" transform="rotate(26 421.6 168.2)" fill="#ffd98a" opacity="0.48"/><ellipse cx="422.0" cy="170.0" rx="3.1" ry="0.8" transform="rotate(1 422.0 170.0)" fill="#fff3d0" opacity="0.64"/><ellipse cx="418.5" cy="170.6" rx="1.2" ry="0.8" transform="rotate(18 418.5 170.6)" fill="#ffd98a" opacity="0.67"/><ellipse cx="413.8" cy="171.1" rx="2.4" ry="0.8" transform="rotate(-3 413.8 171.1)" fill="#fff3d0" opacity="0.74"/><ellipse cx="690.9" cy="172.7" rx="2.5" ry="0.8" transform="rotate(17 690.9 172.7)" fill="#ffd98a" opacity="0.53"/><ellipse cx="687.3" cy="176.1" rx="2.8" ry="0.8" transform="rotate(-18 687.3 176.1)" fill="#fff3d0" opacity="0.48"/><ellipse cx="686.3" cy="173.4" rx="2.5" ry="0.8" transform="rotate(-39 686.3 173.4)" fill="#ffd98a" opacity="0.69"/><ellipse cx="681.9" cy="176.7" rx="2.8" ry="0.8" transform="rotate(-25 681.9 176.7)" fill="#ffcf70" opacity="0.42"/><ellipse cx="687.5" cy="169.9" rx="2.2" ry="0.8" transform="rotate(-59 687.5 169.9)" fill="#ffe9b0" opacity="0.57"/><ellipse cx="670.8" cy="181.1" rx="1.4" ry="0.8" transform="rotate(22 670.8 181.1)" fill="#fff3d0" opacity="0.47"/><ellipse cx="672.1" cy="177.8" rx="1.7" ry="0.8" transform="rotate(-42 672.1 177.8)" fill="#fff3d0" opacity="0.47"/><ellipse cx="677.3" cy="177.4" rx="1.6" ry="0.8" transform="rotate(-30 677.3 177.4)" fill="#ffd98a" opacity="0.69"/><ellipse cx="685.9" cy="173.2" rx="3.5" ry="0.8" transform="rotate(12 685.9 173.2)" fill="#ffe9b0" opacity="0.67"/><ellipse cx="682.5" cy="175.0" rx="1.3" ry="0.8" transform="rotate(6 682.5 175.0)" fill="#fff3d0" opacity="0.49"/><ellipse cx="686.4" cy="169.6" rx="3.3" ry="0.8" transform="rotate(-40 686.4 169.6)" fill="#ffcf70" opacity="0.64"/><ellipse cx="680.7" cy="177.2" rx="1.4" ry="0.8" transform="rotate(16 680.7 177.2)" fill="#fff3d0" opacity="0.60"/><ellipse cx="683.2" cy="178.1" rx="3.4" ry="0.8" transform="rotate(-56 683.2 178.1)" fill="#fff3d0" opacity="0.54"/><ellipse cx="676.0" cy="179.5" rx="1.0" ry="0.8" transform="rotate(-18 676.0 179.5)" fill="#fff3d0" opacity="0.61"/><ellipse cx="676.5" cy="174.3" rx="3.5" ry="0.8" transform="rotate(11 676.5 174.3)" fill="#ffcf70" opacity="0.62"/><ellipse cx="674.0" cy="180.5" rx="1.2" ry="0.8" transform="rotate(5 674.0 180.5)" fill="#ffcf70" opacity="0.65"/><ellipse cx="681.9" cy="177.7" rx="1.6" ry="0.8" transform="rotate(15 681.9 177.7)" fill="#ffe9b0" opacity="0.52"/><ellipse cx="675.8" cy="178.3" rx="3.5" ry="0.8" transform="rotate(-42 675.8 178.3)" fill="#fff3d0" opacity="0.64"/><ellipse cx="681.0" cy="181.7" rx="1.2" ry="0.8" transform="rotate(-53 681.0 181.7)" fill="#fff3d0" opacity="0.59"/><ellipse cx="692.9" cy="155.8" rx="2.8" ry="0.8" transform="rotate(6 692.9 155.8)" fill="#fff3d0" opacity="0.60"/><ellipse cx="701.9" cy="157.1" rx="3.5" ry="0.8" transform="rotate(-20 701.9 157.1)" fill="#ffd98a" opacity="0.64"/><ellipse cx="697.6" cy="156.9" rx="1.5" ry="0.8" transform="rotate(-8 697.6 156.9)" fill="#ffd98a" opacity="0.56"/><ellipse cx="699.1" cy="158.1" rx="1.9" ry="0.8" transform="rotate(14 699.1 158.1)" fill="#ffcf70" opacity="0.59"/><ellipse cx="698.8" cy="158.8" rx="2.3" ry="0.8" transform="rotate(-46 698.8 158.8)" fill="#ffcf70" opacity="0.65"/><ellipse cx="695.9" cy="155.5" rx="2.5" ry="0.8" transform="rotate(18 695.9 155.5)" fill="#ffcf70" opacity="0.45"/><ellipse cx="701.3" cy="155.2" rx="1.1" ry="0.8" transform="rotate(-1 701.3 155.2)" fill="#ffd98a" opacity="0.42"/><ellipse cx="697.4" cy="157.5" rx="1.8" ry="0.8" transform="rotate(-46 697.4 157.5)" fill="#ffcf70" opacity="0.57"/><ellipse cx="698.2" cy="159.3" rx="2.0" ry="0.8" transform="rotate(-4 698.2 159.3)" fill="#fff3d0" opacity="0.67"/><ellipse cx="705.2" cy="158.1" rx="1.6" ry="0.8" transform="rotate(-3 705.2 158.1)" fill="#ffd98a" opacity="0.68"/><ellipse cx="703.6" cy="157.8" rx="1.7" ry="0.8" transform="rotate(-16 703.6 157.8)" fill="#ffcf70" opacity="0.62"/><ellipse cx="703.3" cy="155.4" rx="2.3" ry="0.8" transform="rotate(18 703.3 155.4)" fill="#ffd98a" opacity="0.63"/><ellipse cx="697.3" cy="158.4" rx="2.9" ry="0.8" transform="rotate(28 697.3 158.4)" fill="#ffd98a" opacity="0.66"/><ellipse cx="704.7" cy="154.6" rx="3.4" ry="0.8" transform="rotate(-5 704.7 154.6)" fill="#ffe9b0" opacity="0.46"/><ellipse cx="693.1" cy="160.0" rx="1.4" ry="0.8" transform="rotate(-52 693.1 160.0)" fill="#ffcf70" opacity="0.68"/><ellipse cx="697.9" cy="156.8" rx="2.8" ry="0.8" transform="rotate(29 697.9 156.8)" fill="#ffcf70" opacity="0.47"/><ellipse cx="961.6" cy="174.8" rx="2.8" ry="0.8" transform="rotate(-35 961.6 174.8)" fill="#ffe9b0" opacity="0.68"/><ellipse cx="969.7" cy="172.3" rx="2.7" ry="0.8" transform="rotate(-21 969.7 172.3)" fill="#ffcf70" opacity="0.48"/><ellipse cx="976.7" cy="167.3" rx="2.7" ry="0.8" transform="rotate(-17 976.7 167.3)" fill="#ffcf70" opacity="0.44"/><ellipse cx="970.1" cy="169.7" rx="1.6" ry="0.8" transform="rotate(-59 970.1 169.7)" fill="#ffd98a" opacity="0.43"/><ellipse cx="969.9" cy="169.9" rx="3.3" ry="0.8" transform="rotate(-5 969.9 169.9)" fill="#ffe9b0" opacity="0.55"/><ellipse cx="964.4" cy="172.7" rx="1.2" ry="0.8" transform="rotate(-10 964.4 172.7)" fill="#ffcf70" opacity="0.49"/><ellipse cx="968.9" cy="169.6" rx="1.5" ry="0.8" transform="rotate(12 968.9 169.6)" fill="#ffd98a" opacity="0.68"/><ellipse cx="970.7" cy="173.8" rx="1.2" ry="0.8" transform="rotate(25 970.7 173.8)" fill="#ffcf70" opacity="0.57"/><ellipse cx="967.4" cy="174.9" rx="3.4" ry="0.8" transform="rotate(3 967.4 174.9)" fill="#fff3d0" opacity="0.52"/><ellipse cx="974.5" cy="169.5" rx="1.5" ry="0.8" transform="rotate(-55 974.5 169.5)" fill="#ffd98a" opacity="0.64"/><ellipse cx="961.5" cy="176.9" rx="1.7" ry="0.8" transform="rotate(-45 961.5 176.9)" fill="#fff3d0" opacity="0.51"/><ellipse cx="978.3" cy="173.4" rx="1.8" ry="0.8" transform="rotate(10 978.3 173.4)" fill="#fff3d0" opacity="0.67"/><ellipse cx="969.9" cy="170.0" rx="1.8" ry="0.8" transform="rotate(-15 969.9 170.0)" fill="#ffd98a" opacity="0.57"/><ellipse cx="962.9" cy="170.8" rx="3.0" ry="0.8" transform="rotate(4 962.9 170.8)" fill="#fff3d0" opacity="0.54"/><ellipse cx="967.1" cy="171.7" rx="1.2" ry="0.8" transform="rotate(14 967.1 171.7)" fill="#fff3d0" opacity="0.46"/><ellipse cx="968.5" cy="170.3" rx="3.1" ry="0.8" transform="rotate(-58 968.5 170.3)" fill="#ffcf70" opacity="0.63"/><ellipse cx="966.7" cy="173.5" rx="1.9" ry="0.8" transform="rotate(26 966.7 173.5)" fill="#ffe9b0" opacity="0.47"/><ellipse cx="977.5" cy="167.3" rx="1.2" ry="0.8" transform="rotate(-58 977.5 167.3)" fill="#ffe9b0" opacity="0.44"/><ellipse cx="974.9" cy="170.5" rx="2.1" ry="0.8" transform="rotate(-12 974.9 170.5)" fill="#fff3d0" opacity="0.56"/><ellipse cx="623.5" cy="64.8" rx="2.8" ry="0.8" transform="rotate(-51 623.5 64.8)" fill="#ffd98a" opacity="0.45"/><ellipse cx="613.8" cy="65.1" rx="1.0" ry="0.8" transform="rotate(-41 613.8 65.1)" fill="#ffe9b0" opacity="0.41"/><ellipse cx="618.3" cy="67.7" rx="3.0" ry="0.8" transform="rotate(-33 618.3 67.7)" fill="#ffcf70" opacity="0.59"/><ellipse cx="614.3" cy="66.3" rx="3.1" ry="0.8" transform="rotate(-44 614.3 66.3)" fill="#fff3d0" opacity="0.59"/><ellipse cx="622.8" cy="59.7" rx="1.6" ry="0.8" transform="rotate(-42 622.8 59.7)" fill="#ffcf70" opacity="0.53"/><ellipse cx="614.1" cy="69.4" rx="2.5" ry="0.8" transform="rotate(-8 614.1 69.4)" fill="#ffcf70" opacity="0.48"/><ellipse cx="611.6" cy="66.2" rx="3.3" ry="0.8" transform="rotate(26 611.6 66.2)" fill="#ffd98a" opacity="0.60"/><ellipse cx="613.1" cy="64.4" rx="2.9" ry="0.8" transform="rotate(-12 613.1 64.4)" fill="#ffd98a" opacity="0.58"/><ellipse cx="608.5" cy="68.0" rx="1.5" ry="0.8" transform="rotate(19 608.5 68.0)" fill="#ffd98a" opacity="0.60"/><ellipse cx="609.0" cy="66.7" rx="2.1" ry="0.8" transform="rotate(-3 609.0 66.7)" fill="#fff3d0" opacity="0.48"/><ellipse cx="619.7" cy="62.6" rx="3.0" ry="0.8" transform="rotate(5 619.7 62.6)" fill="#ffd98a" opacity="0.41"/><ellipse cx="609.7" cy="68.2" rx="1.5" ry="0.8" transform="rotate(26 609.7 68.2)" fill="#ffd98a" opacity="0.41"/><ellipse cx="612.0" cy="68.4" rx="2.2" ry="0.8" transform="rotate(-28 612.0 68.4)" fill="#ffe9b0" opacity="0.51"/><ellipse cx="611.5" cy="65.8" rx="2.5" ry="0.8" transform="rotate(-45 611.5 65.8)" fill="#ffd98a" opacity="0.55"/><ellipse cx="613.4" cy="64.5" rx="2.4" ry="0.8" transform="rotate(-60 613.4 64.5)" fill="#fff3d0" opacity="0.42"/><ellipse cx="610.3" cy="64.8" rx="1.4" ry="0.8" transform="rotate(-6 610.3 64.8)" fill="#ffd98a" opacity="0.53"/><ellipse cx="626.3" cy="12.2" rx="3.4" ry="0.8" transform="rotate(26 626.3 12.2)" fill="#ffd98a" opacity="0.34"/><ellipse cx="623.5" cy="13.0" rx="1.0" ry="0.8" transform="rotate(-35 623.5 13.0)" fill="#fff3d0" opacity="0.41"/><ellipse cx="629.8" cy="9.2" rx="3.3" ry="0.8" transform="rotate(26 629.8 9.2)" fill="#fff3d0" opacity="0.36"/><ellipse cx="631.0" cy="7.8" rx="2.4" ry="0.8" transform="rotate(-29 631.0 7.8)" fill="#ffcf70" opacity="0.48"/><ellipse cx="632.7" cy="9.7" rx="1.5" ry="0.8" transform="rotate(-15 632.7 9.7)" fill="#fff3d0" opacity="0.45"/><ellipse cx="634.8" cy="8.2" rx="2.7" ry="0.8" transform="rotate(-28 634.8 8.2)" fill="#fff3d0" opacity="0.38"/><ellipse cx="637.9" cy="9.3" rx="2.3" ry="0.8" transform="rotate(-55 637.9 9.3)" fill="#ffe9b0" opacity="0.31"/><ellipse cx="624.3" cy="15.6" rx="2.8" ry="0.8" transform="rotate(23 624.3 15.6)" fill="#fff3d0" opacity="0.49"/><ellipse cx="631.0" cy="10.7" rx="1.6" ry="0.8" transform="rotate(18 631.0 10.7)" fill="#fff3d0" opacity="0.33"/><ellipse cx="628.2" cy="11.1" rx="3.2" ry="0.8" transform="rotate(-14 628.2 11.1)" fill="#fff3d0" opacity="0.37"/><ellipse cx="622.8" cy="12.5" rx="3.4" ry="0.8" transform="rotate(2 622.8 12.5)" fill="#fff3d0" opacity="0.46"/><ellipse cx="627.5" cy="10.4" rx="2.7" ry="0.8" transform="rotate(-36 627.5 10.4)" fill="#ffd98a" opacity="0.46"/><ellipse cx="636.6" cy="11.5" rx="1.8" ry="0.8" transform="rotate(21 636.6 11.5)" fill="#ffcf70" opacity="0.37"/><ellipse cx="622.2" cy="13.5" rx="2.3" ry="0.8" transform="rotate(-24 622.2 13.5)" fill="#fff3d0" opacity="0.41"/><ellipse cx="623.2" cy="11.7" rx="1.7" ry="0.8" transform="rotate(20 623.2 11.7)" fill="#ffd98a" opacity="0.44"/><ellipse cx="627.7" cy="8.0" rx="1.1" ry="0.8" transform="rotate(-35 627.7 8.0)" fill="#ffcf70" opacity="0.47"/><ellipse cx="636.0" cy="0.3" rx="1.5" ry="0.8" transform="rotate(-46 636.0 0.3)" fill="#ffd98a" opacity="0.39"/><ellipse cx="627.3" cy="8.6" rx="2.8" ry="0.8" transform="rotate(-18 627.3 8.6)" fill="#ffcf70" opacity="0.34"/><ellipse cx="634.0" cy="12.4" rx="2.8" ry="0.8" transform="rotate(-57 634.0 12.4)" fill="#ffe9b0" opacity="0.41"/><ellipse cx="623.9" cy="10.4" rx="3.0" ry="0.8" transform="rotate(14 623.9 10.4)" fill="#ffcf70" opacity="0.37"/><ellipse cx="639.7" cy="7.4" rx="1.1" ry="0.8" transform="rotate(-3 639.7 7.4)" fill="#ffcf70" opacity="0.32"/><ellipse cx="623.8" cy="8.0" rx="1.9" ry="0.8" transform="rotate(7 623.8 8.0)" fill="#ffd98a" opacity="0.32"/><ellipse cx="627.9" cy="9.8" rx="3.3" ry="0.8" transform="rotate(-13 627.9 9.8)" fill="#ffcf70" opacity="0.43"/><ellipse cx="648.2" cy="6.0" rx="3.0" ry="0.8" transform="rotate(6 648.2 6.0)" fill="#ffd98a" opacity="0.37"/><ellipse cx="632.7" cy="7.4" rx="1.5" ry="0.8" transform="rotate(-45 632.7 7.4)" fill="#ffe9b0" opacity="0.38"/><ellipse cx="520.2" cy="142.9" rx="1.6" ry="0.8" transform="rotate(30 520.2 142.9)" fill="#ffcf70" opacity="0.59"/><ellipse cx="514.6" cy="144.4" rx="1.5" ry="0.8" transform="rotate(25 514.6 144.4)" fill="#ffe9b0" opacity="0.56"/><ellipse cx="516.6" cy="143.9" rx="3.1" ry="0.8" transform="rotate(5 516.6 143.9)" fill="#ffcf70" opacity="0.38"/><ellipse cx="515.3" cy="143.5" rx="2.1" ry="0.8" transform="rotate(-13 515.3 143.5)" fill="#fff3d0" opacity="0.52"/><ellipse cx="514.3" cy="141.0" rx="2.5" ry="0.8" transform="rotate(-16 514.3 141.0)" fill="#ffe9b0" opacity="0.39"/><ellipse cx="510.7" cy="142.6" rx="1.8" ry="0.8" transform="rotate(-46 510.7 142.6)" fill="#ffe9b0" opacity="0.51"/><ellipse cx="518.9" cy="141.9" rx="2.9" ry="0.8" transform="rotate(20 518.9 141.9)" fill="#ffe9b0" opacity="0.54"/><ellipse cx="523.8" cy="142.0" rx="3.5" ry="0.8" transform="rotate(18 523.8 142.0)" fill="#fff3d0" opacity="0.53"/><ellipse cx="520.4" cy="144.3" rx="2.2" ry="0.8" transform="rotate(28 520.4 144.3)" fill="#fff3d0" opacity="0.43"/><ellipse cx="517.1" cy="142.6" rx="3.2" ry="0.8" transform="rotate(24 517.1 142.6)" fill="#ffcf70" opacity="0.38"/><ellipse cx="516.8" cy="144.7" rx="2.4" ry="0.8" transform="rotate(-35 516.8 144.7)" fill="#ffcf70" opacity="0.54"/><ellipse cx="512.6" cy="143.5" rx="1.5" ry="0.8" transform="rotate(-54 512.6 143.5)" fill="#ffd98a" opacity="0.59"/><ellipse cx="382.0" cy="137.3" rx="1.8" ry="0.8" transform="rotate(16 382.0 137.3)" fill="#ffe9b0" opacity="0.54"/><ellipse cx="384.1" cy="137.4" rx="3.2" ry="0.8" transform="rotate(-14 384.1 137.4)" fill="#ffcf70" opacity="0.38"/><ellipse cx="382.5" cy="138.9" rx="1.6" ry="0.8" transform="rotate(-51 382.5 138.9)" fill="#ffcf70" opacity="0.40"/><ellipse cx="381.1" cy="134.4" rx="1.1" ry="0.8" transform="rotate(-27 381.1 134.4)" fill="#ffe9b0" opacity="0.58"/><ellipse cx="382.3" cy="137.1" rx="1.2" ry="0.8" transform="rotate(28 382.3 137.1)" fill="#ffd98a" opacity="0.54"/><ellipse cx="375.3" cy="140.8" rx="1.1" ry="0.8" transform="rotate(9 375.3 140.8)" fill="#fff3d0" opacity="0.55"/><ellipse cx="384.8" cy="137.5" rx="1.3" ry="0.8" transform="rotate(11 384.8 137.5)" fill="#ffe9b0" opacity="0.49"/><ellipse cx="385.0" cy="138.6" rx="1.2" ry="0.8" transform="rotate(10 385.0 138.6)" fill="#fff3d0" opacity="0.58"/><ellipse cx="380.3" cy="135.1" rx="1.5" ry="0.8" transform="rotate(2 380.3 135.1)" fill="#ffd98a" opacity="0.48"/><ellipse cx="379.3" cy="138.9" rx="2.4" ry="0.8" transform="rotate(-12 379.3 138.9)" fill="#fff3d0" opacity="0.57"/><ellipse cx="380.5" cy="137.3" rx="1.1" ry="0.8" transform="rotate(20 380.5 137.3)" fill="#ffd98a" opacity="0.49"/><ellipse cx="380.0" cy="138.3" rx="1.5" ry="0.8" transform="rotate(-6 380.0 138.3)" fill="#ffe9b0" opacity="0.45"/><ellipse cx="909.6" cy="143.6" rx="3.2" ry="0.8" transform="rotate(-54 909.6 143.6)" fill="#ffcf70" opacity="0.49"/><ellipse cx="899.4" cy="148.1" rx="1.1" ry="0.8" transform="rotate(1 899.4 148.1)" fill="#ffe9b0" opacity="0.55"/><ellipse cx="900.4" cy="148.1" rx="1.4" ry="0.8" transform="rotate(24 900.4 148.1)" fill="#ffd98a" opacity="0.41"/><ellipse cx="902.4" cy="144.6" rx="3.5" ry="0.8" transform="rotate(-18 902.4 144.6)" fill="#fff3d0" opacity="0.57"/><ellipse cx="900.2" cy="147.4" rx="2.4" ry="0.8" transform="rotate(-42 900.2 147.4)" fill="#ffd98a" opacity="0.47"/><ellipse cx="901.8" cy="146.5" rx="1.4" ry="0.8" transform="rotate(-8 901.8 146.5)" fill="#ffe9b0" opacity="0.55"/><ellipse cx="903.1" cy="143.7" rx="3.0" ry="0.8" transform="rotate(-30 903.1 143.7)" fill="#fff3d0" opacity="0.40"/><ellipse cx="899.8" cy="145.1" rx="1.4" ry="0.8" transform="rotate(8 899.8 145.1)" fill="#fff3d0" opacity="0.50"/><ellipse cx="902.2" cy="142.6" rx="2.0" ry="0.8" transform="rotate(21 902.2 142.6)" fill="#ffe9b0" opacity="0.43"/><ellipse cx="895.0" cy="149.7" rx="2.2" ry="0.8" transform="rotate(-21 895.0 149.7)" fill="#ffd98a" opacity="0.56"/><ellipse cx="901.6" cy="146.7" rx="2.9" ry="0.8" transform="rotate(19 901.6 146.7)" fill="#ffd98a" opacity="0.57"/><ellipse cx="901.1" cy="144.3" rx="3.1" ry="0.8" transform="rotate(-56 901.1 144.3)" fill="#ffe9b0" opacity="0.55"/><ellipse cx="98.3" cy="110.0" rx="1.3" ry="0.8" transform="rotate(-57 98.3 110.0)" fill="#fff3d0" opacity="0.61"/><ellipse cx="89.4" cy="112.0" rx="1.7" ry="0.8" transform="rotate(-58 89.4 112.0)" fill="#ffe9b0" opacity="0.48"/><ellipse cx="96.5" cy="110.9" rx="1.3" ry="0.8" transform="rotate(26 96.5 110.9)" fill="#ffcf70" opacity="0.52"/><ellipse cx="92.4" cy="115.8" rx="1.8" ry="0.8" transform="rotate(-4 92.4 115.8)" fill="#ffcf70" opacity="0.68"/><ellipse cx="95.0" cy="110.7" rx="2.2" ry="0.8" transform="rotate(-45 95.0 110.7)" fill="#ffe9b0" opacity="0.68"/><ellipse cx="91.5" cy="110.0" rx="1.4" ry="0.8" transform="rotate(-34 91.5 110.0)" fill="#ffcf70" opacity="0.53"/><ellipse cx="92.6" cy="115.2" rx="2.4" ry="0.8" transform="rotate(-39 92.6 115.2)" fill="#ffcf70" opacity="0.48"/><ellipse cx="98.1" cy="109.1" rx="2.8" ry="0.8" transform="rotate(-56 98.1 109.1)" fill="#ffe9b0" opacity="0.55"/><ellipse cx="95.7" cy="110.2" rx="2.5" ry="0.8" transform="rotate(13 95.7 110.2)" fill="#fff3d0" opacity="0.69"/><ellipse cx="90.2" cy="113.4" rx="3.1" ry="0.8" transform="rotate(-53 90.2 113.4)" fill="#ffe9b0" opacity="0.51"/><ellipse cx="98.8" cy="109.3" rx="1.2" ry="0.8" transform="rotate(18 98.8 109.3)" fill="#ffe9b0" opacity="0.54"/><ellipse cx="92.8" cy="109.1" rx="3.1" ry="0.8" transform="rotate(-43 92.8 109.1)" fill="#ffe9b0" opacity="0.64"/><ellipse cx="91.7" cy="112.1" rx="3.4" ry="0.8" transform="rotate(29 91.7 112.1)" fill="#ffd98a" opacity="0.56"/><ellipse cx="102.1" cy="106.6" rx="2.3" ry="0.8" transform="rotate(-48 102.1 106.6)" fill="#ffd98a" opacity="0.60"/><ellipse cx="103.4" cy="108.8" rx="2.9" ry="0.8" transform="rotate(29 103.4 108.8)" fill="#fff3d0" opacity="0.68"/><ellipse cx="90.8" cy="111.5" rx="1.8" ry="0.8" transform="rotate(-30 90.8 111.5)" fill="#ffcf70" opacity="0.56"/><ellipse cx="217.7" cy="115.1" rx="3.3" ry="0.8" transform="rotate(-58 217.7 115.1)" fill="#ffe9b0" opacity="0.80"/><ellipse cx="227.1" cy="110.4" rx="3.2" ry="0.8" transform="rotate(-59 227.1 110.4)" fill="#ffe9b0" opacity="0.59"/><ellipse cx="215.1" cy="116.2" rx="2.6" ry="0.8" transform="rotate(-15 215.1 116.2)" fill="#ffe9b0" opacity="0.81"/><ellipse cx="227.6" cy="109.6" rx="2.7" ry="0.8" transform="rotate(-50 227.6 109.6)" fill="#fff3d0" opacity="0.79"/><ellipse cx="213.5" cy="116.1" rx="2.7" ry="0.8" transform="rotate(-8 213.5 116.1)" fill="#ffe9b0" opacity="0.74"/><ellipse cx="215.4" cy="112.0" rx="2.9" ry="0.8" transform="rotate(-50 215.4 112.0)" fill="#ffe9b0" opacity="0.86"/><ellipse cx="214.5" cy="113.5" rx="2.8" ry="0.8" transform="rotate(-59 214.5 113.5)" fill="#ffd98a" opacity="0.63"/><ellipse cx="211.9" cy="114.1" rx="1.5" ry="0.8" transform="rotate(-11 211.9 114.1)" fill="#fff3d0" opacity="0.59"/><ellipse cx="221.3" cy="112.3" rx="1.3" ry="0.8" transform="rotate(-59 221.3 112.3)" fill="#ffe9b0" opacity="0.55"/><ellipse cx="223.0" cy="107.0" rx="1.5" ry="0.8" transform="rotate(19 223.0 107.0)" fill="#ffe9b0" opacity="0.71"/><ellipse cx="226.0" cy="108.3" rx="2.7" ry="0.8" transform="rotate(-43 226.0 108.3)" fill="#fff3d0" opacity="0.78"/><ellipse cx="214.0" cy="110.9" rx="2.1" ry="0.8" transform="rotate(-23 214.0 110.9)" fill="#ffcf70" opacity="0.58"/><ellipse cx="231.4" cy="109.3" rx="2.8" ry="0.8" transform="rotate(6 231.4 109.3)" fill="#ffcf70" opacity="0.58"/><ellipse cx="219.5" cy="111.5" rx="3.0" ry="0.8" transform="rotate(0 219.5 111.5)" fill="#ffe9b0" opacity="0.62"/><ellipse cx="215.4" cy="115.9" rx="1.2" ry="0.8" transform="rotate(-59 215.4 115.9)" fill="#ffcf70" opacity="0.89"/><ellipse cx="205.1" cy="111.7" rx="2.2" ry="0.8" transform="rotate(18 205.1 111.7)" fill="#ffcf70" opacity="0.87"/><ellipse cx="213.3" cy="114.0" rx="1.1" ry="0.8" transform="rotate(26 213.3 114.0)" fill="#ffe9b0" opacity="0.67"/><ellipse cx="214.8" cy="112.4" rx="3.5" ry="0.8" transform="rotate(19 214.8 112.4)" fill="#ffe9b0" opacity="0.86"/><ellipse cx="209.5" cy="114.4" rx="3.3" ry="0.8" transform="rotate(19 209.5 114.4)" fill="#fff3d0" opacity="0.55"/><ellipse cx="220.3" cy="114.1" rx="3.1" ry="0.8" transform="rotate(-44 220.3 114.1)" fill="#fff3d0" opacity="0.65"/><ellipse cx="224.9" cy="108.0" rx="2.8" ry="0.8" transform="rotate(-54 224.9 108.0)" fill="#ffd98a" opacity="0.89"/><ellipse cx="215.1" cy="116.8" rx="3.5" ry="0.8" transform="rotate(-50 215.1 116.8)" fill="#ffe9b0" opacity="0.65"/><ellipse cx="334.8" cy="60.5" rx="1.9" ry="0.8" transform="rotate(16 334.8 60.5)" fill="#fff3d0" opacity="0.64"/><ellipse cx="333.0" cy="61.3" rx="3.3" ry="0.8" transform="rotate(7 333.0 61.3)" fill="#ffd98a" opacity="0.74"/><ellipse cx="334.9" cy="58.2" rx="1.6" ry="0.8" transform="rotate(-28 334.9 58.2)" fill="#ffd98a" opacity="0.50"/><ellipse cx="334.2" cy="61.6" rx="2.9" ry="0.8" transform="rotate(-53 334.2 61.6)" fill="#fff3d0" opacity="0.68"/><ellipse cx="326.5" cy="58.4" rx="3.2" ry="0.8" transform="rotate(6 326.5 58.4)" fill="#ffe9b0" opacity="0.78"/><ellipse cx="339.1" cy="60.0" rx="1.4" ry="0.8" transform="rotate(-20 339.1 60.0)" fill="#ffd98a" opacity="0.60"/><ellipse cx="334.1" cy="56.2" rx="3.1" ry="0.8" transform="rotate(-39 334.1 56.2)" fill="#ffcf70" opacity="0.73"/><ellipse cx="344.0" cy="58.4" rx="2.1" ry="0.8" transform="rotate(-55 344.0 58.4)" fill="#ffe9b0" opacity="0.60"/><ellipse cx="331.4" cy="60.1" rx="2.3" ry="0.8" transform="rotate(-36 331.4 60.1)" fill="#fff3d0" opacity="0.70"/><ellipse cx="328.2" cy="60.2" rx="1.6" ry="0.8" transform="rotate(20 328.2 60.2)" fill="#ffcf70" opacity="0.62"/><ellipse cx="338.0" cy="60.5" rx="3.4" ry="0.8" transform="rotate(-24 338.0 60.5)" fill="#ffe9b0" opacity="0.76"/><ellipse cx="337.2" cy="61.0" rx="1.7" ry="0.8" transform="rotate(-14 337.2 61.0)" fill="#ffd98a" opacity="0.54"/><ellipse cx="338.2" cy="57.7" rx="2.1" ry="0.8" transform="rotate(-49 338.2 57.7)" fill="#ffcf70" opacity="0.51"/><ellipse cx="337.8" cy="55.1" rx="1.2" ry="0.8" transform="rotate(13 337.8 55.1)" fill="#ffe9b0" opacity="0.71"/><ellipse cx="339.1" cy="60.3" rx="2.7" ry="0.8" transform="rotate(-27 339.1 60.3)" fill="#ffe9b0" opacity="0.74"/><ellipse cx="341.9" cy="61.7" rx="1.8" ry="0.8" transform="rotate(-56 341.9 61.7)" fill="#ffd98a" opacity="0.70"/><ellipse cx="343.7" cy="58.6" rx="2.7" ry="0.8" transform="rotate(27 343.7 58.6)" fill="#ffcf70" opacity="0.50"/><ellipse cx="342.3" cy="65.0" rx="1.7" ry="0.8" transform="rotate(-26 342.3 65.0)" fill="#fff3d0" opacity="0.73"/><ellipse cx="338.5" cy="58.6" rx="3.5" ry="0.8" transform="rotate(-1 338.5 58.6)" fill="#ffcf70" opacity="0.74"/><ellipse cx="335.8" cy="60.0" rx="2.0" ry="0.8" transform="rotate(-35 335.8 60.0)" fill="#ffd98a" opacity="0.65"/><ellipse cx="337.3" cy="59.8" rx="2.1" ry="0.8" transform="rotate(-39 337.3 59.8)" fill="#ffcf70" opacity="0.80"/><ellipse cx="336.6" cy="65.1" rx="2.5" ry="0.8" transform="rotate(-27 336.6 65.1)" fill="#ffd98a" opacity="0.72"/><ellipse cx="263.2" cy="140.3" rx="1.7" ry="0.8" transform="rotate(-30 263.2 140.3)" fill="#ffcf70" opacity="0.34"/><ellipse cx="273.3" cy="145.8" rx="2.1" ry="0.8" transform="rotate(-4 273.3 145.8)" fill="#fff3d0" opacity="0.49"/><ellipse cx="276.0" cy="134.1" rx="3.2" ry="0.8" transform="rotate(6 276.0 134.1)" fill="#fff3d0" opacity="0.34"/><ellipse cx="266.7" cy="141.5" rx="2.9" ry="0.8" transform="rotate(19 266.7 141.5)" fill="#ffe9b0" opacity="0.35"/><ellipse cx="268.4" cy="144.3" rx="2.4" ry="0.8" transform="rotate(-41 268.4 144.3)" fill="#ffd98a" opacity="0.38"/><ellipse cx="268.3" cy="139.5" rx="3.2" ry="0.8" transform="rotate(3 268.3 139.5)" fill="#ffe9b0" opacity="0.40"/><ellipse cx="279.5" cy="142.1" rx="2.5" ry="0.8" transform="rotate(0 279.5 142.1)" fill="#ffcf70" opacity="0.41"/><ellipse cx="266.2" cy="140.6" rx="2.5" ry="0.8" transform="rotate(-11 266.2 140.6)" fill="#ffd98a" opacity="0.47"/><ellipse cx="264.4" cy="142.2" rx="3.3" ry="0.8" transform="rotate(-1 264.4 142.2)" fill="#fff3d0" opacity="0.32"/><ellipse cx="278.2" cy="136.3" rx="1.0" ry="0.8" transform="rotate(23 278.2 136.3)" fill="#fff3d0" opacity="0.30"/><ellipse cx="282.9" cy="137.4" rx="2.0" ry="0.8" transform="rotate(-6 282.9 137.4)" fill="#ffcf70" opacity="0.43"/><ellipse cx="270.2" cy="140.2" rx="2.3" ry="0.8" transform="rotate(-54 270.2 140.2)" fill="#ffd98a" opacity="0.35"/><ellipse cx="271.1" cy="140.6" rx="2.9" ry="0.8" transform="rotate(-27 271.1 140.6)" fill="#ffe9b0" opacity="0.35"/><ellipse cx="278.9" cy="140.7" rx="3.2" ry="0.8" transform="rotate(20 278.9 140.7)" fill="#ffe9b0" opacity="0.43"/><ellipse cx="284.0" cy="142.8" rx="1.8" ry="0.8" transform="rotate(-3 284.0 142.8)" fill="#ffe9b0" opacity="0.48"/><ellipse cx="283.2" cy="134.5" rx="1.1" ry="0.8" transform="rotate(4 283.2 134.5)" fill="#ffe9b0" opacity="0.30"/><ellipse cx="268.6" cy="139.4" rx="1.3" ry="0.8" transform="rotate(-27 268.6 139.4)" fill="#fff3d0" opacity="0.45"/><ellipse cx="270.0" cy="141.2" rx="2.6" ry="0.8" transform="rotate(-6 270.0 141.2)" fill="#ffcf70" opacity="0.48"/><ellipse cx="267.0" cy="138.8" rx="2.9" ry="0.8" transform="rotate(-42 267.0 138.8)" fill="#fff3d0" opacity="0.34"/><ellipse cx="81.6" cy="155.0" rx="2.5" ry="0.8" transform="rotate(-16 81.6 155.0)" fill="#ffd98a" opacity="0.43"/><ellipse cx="78.2" cy="152.1" rx="2.1" ry="0.8" transform="rotate(-58 78.2 152.1)" fill="#ffe9b0" opacity="0.60"/><ellipse cx="76.5" cy="155.5" rx="1.9" ry="0.8" transform="rotate(-45 76.5 155.5)" fill="#fff3d0" opacity="0.47"/><ellipse cx="74.4" cy="153.6" rx="1.6" ry="0.8" transform="rotate(7 74.4 153.6)" fill="#ffd98a" opacity="0.59"/><ellipse cx="74.0" cy="154.3" rx="1.4" ry="0.8" transform="rotate(-47 74.0 154.3)" fill="#ffe9b0" opacity="0.57"/><ellipse cx="72.7" cy="154.2" rx="2.3" ry="0.8" transform="rotate(5 72.7 154.2)" fill="#ffe9b0" opacity="0.47"/><ellipse cx="79.6" cy="151.3" rx="3.1" ry="0.8" transform="rotate(-37 79.6 151.3)" fill="#fff3d0" opacity="0.43"/><ellipse cx="71.1" cy="155.3" rx="1.6" ry="0.8" transform="rotate(-11 71.1 155.3)" fill="#fff3d0" opacity="0.51"/><ellipse cx="73.3" cy="157.0" rx="1.6" ry="0.8" transform="rotate(-42 73.3 157.0)" fill="#ffe9b0" opacity="0.47"/><ellipse cx="78.2" cy="152.5" rx="1.6" ry="0.8" transform="rotate(-14 78.2 152.5)" fill="#fff3d0" opacity="0.56"/><ellipse cx="78.6" cy="151.0" rx="2.5" ry="0.8" transform="rotate(15 78.6 151.0)" fill="#ffd98a" opacity="0.49"/><ellipse cx="79.3" cy="152.3" rx="2.3" ry="0.8" transform="rotate(-5 79.3 152.3)" fill="#ffd98a" opacity="0.53"/><ellipse cx="67.4" cy="181.8" rx="2.4" ry="0.8" transform="rotate(-5 67.4 181.8)" fill="#ffe9b0" opacity="0.77"/><ellipse cx="62.1" cy="182.2" rx="1.4" ry="0.8" transform="rotate(5 62.1 182.2)" fill="#ffe9b0" opacity="0.73"/><ellipse cx="65.8" cy="177.4" rx="1.5" ry="0.8" transform="rotate(10 65.8 177.4)" fill="#fff3d0" opacity="0.62"/><ellipse cx="70.2" cy="175.5" rx="2.0" ry="0.8" transform="rotate(-59 70.2 175.5)" fill="#ffcf70" opacity="0.54"/><ellipse cx="63.4" cy="187.5" rx="1.7" ry="0.8" transform="rotate(-24 63.4 187.5)" fill="#ffe9b0" opacity="0.78"/><ellipse cx="72.8" cy="179.8" rx="2.7" ry="0.8" transform="rotate(-49 72.8 179.8)" fill="#ffe9b0" opacity="0.69"/><ellipse cx="54.7" cy="187.3" rx="2.4" ry="0.8" transform="rotate(17 54.7 187.3)" fill="#ffcf70" opacity="0.62"/><ellipse cx="78.9" cy="176.4" rx="2.1" ry="0.8" transform="rotate(-18 78.9 176.4)" fill="#ffe9b0" opacity="0.61"/><ellipse cx="64.3" cy="180.6" rx="1.3" ry="0.8" transform="rotate(-53 64.3 180.6)" fill="#ffcf70" opacity="0.70"/><ellipse cx="71.4" cy="176.0" rx="2.1" ry="0.8" transform="rotate(26 71.4 176.0)" fill="#ffe9b0" opacity="0.51"/><ellipse cx="66.2" cy="180.4" rx="3.4" ry="0.8" transform="rotate(-22 66.2 180.4)" fill="#ffd98a" opacity="0.59"/><ellipse cx="64.6" cy="182.7" rx="1.3" ry="0.8" transform="rotate(-50 64.6 182.7)" fill="#ffd98a" opacity="0.73"/><ellipse cx="65.4" cy="181.9" rx="1.9" ry="0.8" transform="rotate(-21 65.4 181.9)" fill="#ffd98a" opacity="0.64"/><ellipse cx="60.8" cy="181.9" rx="1.6" ry="0.8" transform="rotate(24 60.8 181.9)" fill="#fff3d0" opacity="0.72"/><ellipse cx="66.1" cy="178.6" rx="1.4" ry="0.8" transform="rotate(-59 66.1 178.6)" fill="#ffd98a" opacity="0.73"/><ellipse cx="73.6" cy="182.2" rx="2.3" ry="0.8" transform="rotate(-25 73.6 182.2)" fill="#ffcf70" opacity="0.73"/><ellipse cx="67.1" cy="180.7" rx="2.3" ry="0.8" transform="rotate(-44 67.1 180.7)" fill="#ffcf70" opacity="0.52"/><ellipse cx="71.4" cy="177.1" rx="1.8" ry="0.8" transform="rotate(-55 71.4 177.1)" fill="#ffcf70" opacity="0.50"/><ellipse cx="56.0" cy="181.8" rx="2.6" ry="0.8" transform="rotate(-58 56.0 181.8)" fill="#ffe9b0" opacity="0.49"/><ellipse cx="64.1" cy="177.7" rx="2.1" ry="0.8" transform="rotate(-43 64.1 177.7)" fill="#ffe9b0" opacity="0.62"/><ellipse cx="69.1" cy="179.1" rx="1.3" ry="0.8" transform="rotate(-25 69.1 179.1)" fill="#ffe9b0" opacity="0.58"/><ellipse cx="59.5" cy="181.7" rx="2.8" ry="0.8" transform="rotate(20 59.5 181.7)" fill="#ffe9b0" opacity="0.70"/><ellipse cx="426.0" cy="167.5" rx="2.4" ry="0.8" transform="rotate(0 426.0 167.5)" fill="#ffd98a" opacity="0.45"/><ellipse cx="420.8" cy="169.5" rx="2.6" ry="0.8" transform="rotate(-33 420.8 169.5)" fill="#fff3d0" opacity="0.54"/><ellipse cx="427.2" cy="162.5" rx="3.1" ry="0.8" transform="rotate(20 427.2 162.5)" fill="#fff3d0" opacity="0.59"/><ellipse cx="433.9" cy="166.3" rx="3.1" ry="0.8" transform="rotate(-29 433.9 166.3)" fill="#ffcf70" opacity="0.45"/><ellipse cx="431.0" cy="165.9" rx="2.1" ry="0.8" transform="rotate(-40 431.0 165.9)" fill="#fff3d0" opacity="0.69"/><ellipse cx="422.9" cy="170.5" rx="1.7" ry="0.8" transform="rotate(3 422.9 170.5)" fill="#fff3d0" opacity="0.42"/><ellipse cx="415.7" cy="171.6" rx="1.1" ry="0.8" transform="rotate(-4 415.7 171.6)" fill="#ffcf70" opacity="0.64"/><ellipse cx="429.6" cy="170.1" rx="3.0" ry="0.8" transform="rotate(-54 429.6 170.1)" fill="#ffd98a" opacity="0.45"/><ellipse cx="432.9" cy="166.5" rx="2.6" ry="0.8" transform="rotate(-57 432.9 166.5)" fill="#ffd98a" opacity="0.63"/><ellipse cx="424.1" cy="168.1" rx="3.3" ry="0.8" transform="rotate(-40 424.1 168.1)" fill="#ffcf70" opacity="0.57"/><ellipse cx="431.1" cy="165.4" rx="2.5" ry="0.8" transform="rotate(25 431.1 165.4)" fill="#ffcf70" opacity="0.53"/><ellipse cx="429.4" cy="165.4" rx="1.1" ry="0.8" transform="rotate(4 429.4 165.4)" fill="#ffd98a" opacity="0.63"/><ellipse cx="428.2" cy="169.0" rx="1.1" ry="0.8" transform="rotate(15 428.2 169.0)" fill="#ffe9b0" opacity="0.51"/><ellipse cx="422.7" cy="167.3" rx="1.1" ry="0.8" transform="rotate(24 422.7 167.3)" fill="#fff3d0" opacity="0.44"/><ellipse cx="434.0" cy="168.1" rx="1.4" ry="0.8" transform="rotate(6 434.0 168.1)" fill="#ffcf70" opacity="0.62"/><ellipse cx="421.1" cy="170.8" rx="1.0" ry="0.8" transform="rotate(19 421.1 170.8)" fill="#ffcf70" opacity="0.56"/><ellipse cx="446.0" cy="123.0" rx="1.3" ry="0.8" transform="rotate(-6 446.0 123.0)" fill="#ffcf70" opacity="0.40"/><ellipse cx="443.6" cy="126.7" rx="2.8" ry="0.8" transform="rotate(4 443.6 126.7)" fill="#fff3d0" opacity="0.58"/><ellipse cx="439.6" cy="126.0" rx="2.9" ry="0.8" transform="rotate(6 439.6 126.0)" fill="#ffe9b0" opacity="0.44"/><ellipse cx="444.2" cy="126.6" rx="3.1" ry="0.8" transform="rotate(-14 444.2 126.6)" fill="#ffe9b0" opacity="0.46"/><ellipse cx="438.7" cy="127.3" rx="1.2" ry="0.8" transform="rotate(17 438.7 127.3)" fill="#ffcf70" opacity="0.42"/><ellipse cx="440.7" cy="127.4" rx="2.9" ry="0.8" transform="rotate(-36 440.7 127.4)" fill="#ffe9b0" opacity="0.39"/><ellipse cx="442.2" cy="123.5" rx="1.8" ry="0.8" transform="rotate(-30 442.2 123.5)" fill="#ffcf70" opacity="0.57"/><ellipse cx="432.4" cy="128.6" rx="2.3" ry="0.8" transform="rotate(-59 432.4 128.6)" fill="#ffcf70" opacity="0.53"/><ellipse cx="436.6" cy="129.6" rx="2.5" ry="0.8" transform="rotate(-28 436.6 129.6)" fill="#fff3d0" opacity="0.40"/><ellipse cx="431.4" cy="131.2" rx="1.0" ry="0.8" transform="rotate(2 431.4 131.2)" fill="#fff3d0" opacity="0.51"/><ellipse cx="445.2" cy="125.3" rx="3.1" ry="0.8" transform="rotate(-12 445.2 125.3)" fill="#ffd98a" opacity="0.47"/><ellipse cx="443.6" cy="125.1" rx="2.7" ry="0.8" transform="rotate(-0 443.6 125.1)" fill="#ffd98a" opacity="0.52"/><ellipse cx="386.1" cy="38.6" rx="2.3" ry="0.8" transform="rotate(-3 386.1 38.6)" fill="#fff3d0" opacity="0.40"/><ellipse cx="378.3" cy="45.7" rx="2.4" ry="0.8" transform="rotate(-26 378.3 45.7)" fill="#fff3d0" opacity="0.48"/><ellipse cx="385.5" cy="40.9" rx="2.9" ry="0.8" transform="rotate(-48 385.5 40.9)" fill="#ffcf70" opacity="0.55"/><ellipse cx="386.9" cy="40.6" rx="1.5" ry="0.8" transform="rotate(27 386.9 40.6)" fill="#ffd98a" opacity="0.38"/><ellipse cx="385.6" cy="41.7" rx="3.3" ry="0.8" transform="rotate(24 385.6 41.7)" fill="#ffcf70" opacity="0.53"/><ellipse cx="381.7" cy="40.2" rx="2.4" ry="0.8" transform="rotate(-31 381.7 40.2)" fill="#ffcf70" opacity="0.41"/><ellipse cx="381.6" cy="38.4" rx="2.1" ry="0.8" transform="rotate(-30 381.6 38.4)" fill="#ffe9b0" opacity="0.39"/><ellipse cx="385.5" cy="39.6" rx="2.5" ry="0.8" transform="rotate(3 385.5 39.6)" fill="#fff3d0" opacity="0.44"/><ellipse cx="385.0" cy="42.4" rx="1.2" ry="0.8" transform="rotate(-8 385.0 42.4)" fill="#fff3d0" opacity="0.47"/><ellipse cx="379.8" cy="42.7" rx="2.6" ry="0.8" transform="rotate(3 379.8 42.7)" fill="#fff3d0" opacity="0.53"/><ellipse cx="384.9" cy="41.6" rx="2.8" ry="0.8" transform="rotate(2 384.9 41.6)" fill="#ffe9b0" opacity="0.40"/><ellipse cx="385.0" cy="39.2" rx="3.1" ry="0.8" transform="rotate(23 385.0 39.2)" fill="#ffcf70" opacity="0.40"/><ellipse cx="1057.1" cy="97.4" rx="3.2" ry="0.8" transform="rotate(-23 1057.1 97.4)" fill="#ffcf70" opacity="0.69"/><ellipse cx="1051.3" cy="103.6" rx="3.2" ry="0.8" transform="rotate(15 1051.3 103.6)" fill="#ffd98a" opacity="0.52"/><ellipse cx="1047.7" cy="102.9" rx="3.0" ry="0.8" transform="rotate(14 1047.7 102.9)" fill="#ffd98a" opacity="0.57"/><ellipse cx="1051.1" cy="102.2" rx="3.1" ry="0.8" transform="rotate(-14 1051.1 102.2)" fill="#fff3d0" opacity="0.42"/><ellipse cx="1053.2" cy="94.4" rx="2.7" ry="0.8" transform="rotate(-28 1053.2 94.4)" fill="#ffe9b0" opacity="0.48"/><ellipse cx="1051.0" cy="95.6" rx="2.5" ry="0.8" transform="rotate(8 1051.0 95.6)" fill="#fff3d0" opacity="0.64"/><ellipse cx="1056.4" cy="95.4" rx="3.3" ry="0.8" transform="rotate(4 1056.4 95.4)" fill="#ffe9b0" opacity="0.65"/><ellipse cx="1049.1" cy="99.4" rx="2.3" ry="0.8" transform="rotate(13 1049.1 99.4)" fill="#ffcf70" opacity="0.46"/><ellipse cx="1055.6" cy="95.6" rx="1.5" ry="0.8" transform="rotate(-29 1055.6 95.6)" fill="#ffd98a" opacity="0.59"/><ellipse cx="1043.2" cy="99.7" rx="1.8" ry="0.8" transform="rotate(17 1043.2 99.7)" fill="#ffcf70" opacity="0.66"/><ellipse cx="1044.5" cy="98.9" rx="2.8" ry="0.8" transform="rotate(20 1044.5 98.9)" fill="#fff3d0" opacity="0.57"/><ellipse cx="1055.7" cy="97.7" rx="1.6" ry="0.8" transform="rotate(-20 1055.7 97.7)" fill="#fff3d0" opacity="0.58"/><ellipse cx="1053.2" cy="97.5" rx="3.4" ry="0.8" transform="rotate(-30 1053.2 97.5)" fill="#ffe9b0" opacity="0.47"/><ellipse cx="1051.7" cy="96.3" rx="3.4" ry="0.8" transform="rotate(-15 1051.7 96.3)" fill="#ffcf70" opacity="0.47"/><ellipse cx="1052.4" cy="98.2" rx="1.5" ry="0.8" transform="rotate(29 1052.4 98.2)" fill="#ffe9b0" opacity="0.49"/><ellipse cx="1054.2" cy="101.9" rx="3.0" ry="0.8" transform="rotate(-6 1054.2 101.9)" fill="#ffcf70" opacity="0.69"/><ellipse cx="1199.1" cy="112.3" rx="1.2" ry="0.8" transform="rotate(-1 1199.1 112.3)" fill="#ffd98a" opacity="0.57"/><ellipse cx="1201.3" cy="109.6" rx="3.3" ry="0.8" transform="rotate(-36 1201.3 109.6)" fill="#ffe9b0" opacity="0.54"/><ellipse cx="1204.6" cy="109.0" rx="1.4" ry="0.8" transform="rotate(10 1204.6 109.0)" fill="#ffe9b0" opacity="0.55"/><ellipse cx="1202.0" cy="110.6" rx="2.5" ry="0.8" transform="rotate(7 1202.0 110.6)" fill="#ffd98a" opacity="0.46"/><ellipse cx="1207.1" cy="109.9" rx="1.3" ry="0.8" transform="rotate(-16 1207.1 109.9)" fill="#ffe9b0" opacity="0.45"/><ellipse cx="1200.6" cy="114.1" rx="3.1" ry="0.8" transform="rotate(-1 1200.6 114.1)" fill="#ffd98a" opacity="0.66"/><ellipse cx="1195.9" cy="111.9" rx="1.7" ry="0.8" transform="rotate(25 1195.9 111.9)" fill="#ffe9b0" opacity="0.69"/><ellipse cx="1201.5" cy="107.5" rx="1.3" ry="0.8" transform="rotate(5 1201.5 107.5)" fill="#ffe9b0" opacity="0.52"/><ellipse cx="1206.5" cy="108.8" rx="1.4" ry="0.8" transform="rotate(9 1206.5 108.8)" fill="#fff3d0" opacity="0.59"/><ellipse cx="1196.3" cy="112.1" rx="2.5" ry="0.8" transform="rotate(-23 1196.3 112.1)" fill="#ffcf70" opacity="0.64"/><ellipse cx="1201.9" cy="108.6" rx="2.7" ry="0.8" transform="rotate(-9 1201.9 108.6)" fill="#ffe9b0" opacity="0.52"/><ellipse cx="1206.5" cy="110.0" rx="1.2" ry="0.8" transform="rotate(13 1206.5 110.0)" fill="#ffd98a" opacity="0.56"/><ellipse cx="1210.0" cy="109.3" rx="1.7" ry="0.8" transform="rotate(-38 1210.0 109.3)" fill="#fff3d0" opacity="0.67"/><ellipse cx="1209.8" cy="106.1" rx="3.0" ry="0.8" transform="rotate(-43 1209.8 106.1)" fill="#ffe9b0" opacity="0.62"/><ellipse cx="1204.3" cy="107.1" rx="1.6" ry="0.8" transform="rotate(-26 1204.3 107.1)" fill="#ffd98a" opacity="0.58"/><ellipse cx="1202.9" cy="109.1" rx="3.4" ry="0.8" transform="rotate(19 1202.9 109.1)" fill="#fff3d0" opacity="0.59"/><ellipse cx="1130.8" cy="157.0" rx="1.8" ry="0.8" transform="rotate(-32 1130.8 157.0)" fill="#ffcf70" opacity="0.60"/><ellipse cx="1133.7" cy="160.4" rx="2.5" ry="0.8" transform="rotate(22 1133.7 160.4)" fill="#ffcf70" opacity="0.78"/><ellipse cx="1122.0" cy="156.2" rx="1.0" ry="0.8" transform="rotate(-52 1122.0 156.2)" fill="#ffcf70" opacity="0.72"/><ellipse cx="1123.9" cy="156.1" rx="2.5" ry="0.8" transform="rotate(-46 1123.9 156.1)" fill="#ffd98a" opacity="0.56"/><ellipse cx="1115.4" cy="159.9" rx="2.5" ry="0.8" transform="rotate(8 1115.4 159.9)" fill="#ffe9b0" opacity="0.54"/><ellipse cx="1117.3" cy="159.7" rx="1.4" ry="0.8" transform="rotate(15 1117.3 159.7)" fill="#fff3d0" opacity="0.51"/><ellipse cx="1119.5" cy="160.1" rx="2.0" ry="0.8" transform="rotate(7 1119.5 160.1)" fill="#fff3d0" opacity="0.68"/><ellipse cx="1118.9" cy="162.4" rx="2.3" ry="0.8" transform="rotate(19 1118.9 162.4)" fill="#fff3d0" opacity="0.58"/><ellipse cx="1128.1" cy="156.2" rx="3.2" ry="0.8" transform="rotate(6 1128.1 156.2)" fill="#fff3d0" opacity="0.76"/><ellipse cx="1128.3" cy="155.5" rx="2.8" ry="0.8" transform="rotate(-13 1128.3 155.5)" fill="#fff3d0" opacity="0.58"/><ellipse cx="1131.5" cy="155.1" rx="3.1" ry="0.8" transform="rotate(-51 1131.5 155.1)" fill="#fff3d0" opacity="0.73"/><ellipse cx="1124.0" cy="157.4" rx="3.1" ry="0.8" transform="rotate(-43 1124.0 157.4)" fill="#ffe9b0" opacity="0.78"/><ellipse cx="1129.8" cy="152.4" rx="2.0" ry="0.8" transform="rotate(-56 1129.8 152.4)" fill="#fff3d0" opacity="0.63"/><ellipse cx="1120.3" cy="159.9" rx="1.9" ry="0.8" transform="rotate(-23 1120.3 159.9)" fill="#fff3d0" opacity="0.56"/><ellipse cx="1126.2" cy="156.4" rx="2.3" ry="0.8" transform="rotate(-59 1126.2 156.4)" fill="#ffe9b0" opacity="0.60"/><ellipse cx="1134.1" cy="152.7" rx="1.4" ry="0.8" transform="rotate(8 1134.1 152.7)" fill="#ffcf70" opacity="0.66"/><ellipse cx="1124.2" cy="160.2" rx="1.9" ry="0.8" transform="rotate(15 1124.2 160.2)" fill="#fff3d0" opacity="0.52"/><ellipse cx="1144.8" cy="153.4" rx="1.8" ry="0.8" transform="rotate(-33 1144.8 153.4)" fill="#ffe9b0" opacity="0.51"/><ellipse cx="1134.7" cy="152.7" rx="2.7" ry="0.8" transform="rotate(28 1134.7 152.7)" fill="#ffcf70" opacity="0.64"/><ellipse cx="1125.9" cy="160.5" rx="3.1" ry="0.8" transform="rotate(11 1125.9 160.5)" fill="#ffcf70" opacity="0.48"/><ellipse cx="1143.8" cy="152.5" rx="1.5" ry="0.8" transform="rotate(22 1143.8 152.5)" fill="#ffd98a" opacity="0.74"/><ellipse cx="1132.8" cy="157.4" rx="3.2" ry="0.8" transform="rotate(24 1132.8 157.4)" fill="#ffe9b0" opacity="0.50"/><ellipse cx="1445.0" cy="180.6" rx="2.8" ry="0.8" transform="rotate(-24 1445.0 180.6)" fill="#ffd98a" opacity="0.57"/><ellipse cx="1454.5" cy="180.4" rx="2.3" ry="0.8" transform="rotate(-53 1454.5 180.4)" fill="#ffcf70" opacity="0.77"/><ellipse cx="1440.8" cy="179.6" rx="2.7" ry="0.8" transform="rotate(-3 1440.8 179.6)" fill="#ffd98a" opacity="0.78"/><ellipse cx="1448.7" cy="177.2" rx="1.0" ry="0.8" transform="rotate(-36 1448.7 177.2)" fill="#fff3d0" opacity="0.58"/><ellipse cx="1461.6" cy="180.9" rx="2.9" ry="0.8" transform="rotate(-35 1461.6 180.9)" fill="#fff3d0" opacity="0.60"/><ellipse cx="1440.9" cy="181.8" rx="3.0" ry="0.8" transform="rotate(-53 1440.9 181.8)" fill="#ffe9b0" opacity="0.68"/><ellipse cx="1449.9" cy="177.2" rx="2.4" ry="0.8" transform="rotate(27 1449.9 177.2)" fill="#fff3d0" opacity="0.57"/><ellipse cx="1451.1" cy="176.0" rx="2.9" ry="0.8" transform="rotate(-45 1451.1 176.0)" fill="#ffd98a" opacity="0.58"/><ellipse cx="1456.5" cy="175.9" rx="1.9" ry="0.8" transform="rotate(-46 1456.5 175.9)" fill="#ffd98a" opacity="0.60"/><ellipse cx="1454.6" cy="173.5" rx="1.8" ry="0.8" transform="rotate(-2 1454.6 173.5)" fill="#ffd98a" opacity="0.74"/><ellipse cx="1449.3" cy="181.1" rx="1.5" ry="0.8" transform="rotate(14 1449.3 181.1)" fill="#ffe9b0" opacity="0.55"/><ellipse cx="1448.3" cy="178.7" rx="3.2" ry="0.8" transform="rotate(-50 1448.3 178.7)" fill="#ffe9b0" opacity="0.77"/><ellipse cx="1445.5" cy="181.2" rx="3.5" ry="0.8" transform="rotate(4 1445.5 181.2)" fill="#fff3d0" opacity="0.61"/><ellipse cx="1445.8" cy="173.8" rx="3.4" ry="0.8" transform="rotate(-40 1445.8 173.8)" fill="#ffe9b0" opacity="0.80"/><ellipse cx="1458.9" cy="178.8" rx="2.2" ry="0.8" transform="rotate(7 1458.9 178.8)" fill="#ffe9b0" opacity="0.48"/><ellipse cx="1440.0" cy="179.4" rx="1.3" ry="0.8" transform="rotate(15 1440.0 179.4)" fill="#ffcf70" opacity="0.77"/><ellipse cx="1452.9" cy="175.8" rx="3.0" ry="0.8" transform="rotate(13 1452.9 175.8)" fill="#ffcf70" opacity="0.73"/><ellipse cx="1451.9" cy="177.9" rx="1.3" ry="0.8" transform="rotate(-0 1451.9 177.9)" fill="#fff3d0" opacity="0.62"/><ellipse cx="1448.8" cy="178.2" rx="3.3" ry="0.8" transform="rotate(-6 1448.8 178.2)" fill="#ffe9b0" opacity="0.62"/><ellipse cx="1451.0" cy="179.2" rx="1.4" ry="0.8" transform="rotate(-56 1451.0 179.2)" fill="#ffcf70" opacity="0.61"/><ellipse cx="1454.2" cy="178.5" rx="1.6" ry="0.8" transform="rotate(23 1454.2 178.5)" fill="#fff3d0" opacity="0.49"/><ellipse cx="1448.2" cy="173.5" rx="3.4" ry="0.8" transform="rotate(-12 1448.2 173.5)" fill="#ffd98a" opacity="0.60"/><ellipse cx="1476.3" cy="150.9" rx="1.2" ry="0.8" transform="rotate(21 1476.3 150.9)" fill="#fff3d0" opacity="0.65"/><ellipse cx="1469.0" cy="157.9" rx="2.6" ry="0.8" transform="rotate(-35 1469.0 157.9)" fill="#ffd98a" opacity="0.68"/><ellipse cx="1466.5" cy="151.4" rx="1.5" ry="0.8" transform="rotate(18 1466.5 151.4)" fill="#ffe9b0" opacity="0.72"/><ellipse cx="1467.5" cy="152.8" rx="3.5" ry="0.8" transform="rotate(5 1467.5 152.8)" fill="#ffd98a" opacity="0.57"/><ellipse cx="1466.0" cy="158.3" rx="3.5" ry="0.8" transform="rotate(3 1466.0 158.3)" fill="#ffd98a" opacity="0.79"/><ellipse cx="1470.0" cy="153.9" rx="1.3" ry="0.8" transform="rotate(-41 1470.0 153.9)" fill="#fff3d0" opacity="0.78"/><ellipse cx="1463.6" cy="151.7" rx="1.5" ry="0.8" transform="rotate(18 1463.6 151.7)" fill="#ffd98a" opacity="0.60"/><ellipse cx="1469.7" cy="151.8" rx="2.0" ry="0.8" transform="rotate(-9 1469.7 151.8)" fill="#ffe9b0" opacity="0.61"/><ellipse cx="1465.5" cy="153.0" rx="2.7" ry="0.8" transform="rotate(-12 1465.5 153.0)" fill="#ffcf70" opacity="0.55"/><ellipse cx="1474.6" cy="149.2" rx="2.2" ry="0.8" transform="rotate(6 1474.6 149.2)" fill="#ffd98a" opacity="0.67"/><ellipse cx="1460.8" cy="156.4" rx="2.7" ry="0.8" transform="rotate(-16 1460.8 156.4)" fill="#ffd98a" opacity="0.68"/><ellipse cx="1462.7" cy="155.1" rx="1.7" ry="0.8" transform="rotate(-21 1462.7 155.1)" fill="#ffe9b0" opacity="0.67"/><ellipse cx="1472.0" cy="152.4" rx="2.4" ry="0.8" transform="rotate(-42 1472.0 152.4)" fill="#ffd98a" opacity="0.48"/><ellipse cx="1466.2" cy="152.4" rx="1.7" ry="0.8" transform="rotate(-21 1466.2 152.4)" fill="#fff3d0" opacity="0.63"/><ellipse cx="1473.1" cy="152.5" rx="2.9" ry="0.8" transform="rotate(-48 1473.1 152.5)" fill="#ffcf70" opacity="0.66"/><ellipse cx="1457.7" cy="158.4" rx="1.5" ry="0.8" transform="rotate(12 1457.7 158.4)" fill="#fff3d0" opacity="0.55"/><ellipse cx="1501.5" cy="116.4" rx="2.5" ry="0.8" transform="rotate(-50 1501.5 116.4)" fill="#ffcf70" opacity="0.58"/><ellipse cx="1504.7" cy="114.3" rx="2.5" ry="0.8" transform="rotate(-44 1504.7 114.3)" fill="#fff3d0" opacity="0.62"/><ellipse cx="1498.1" cy="117.5" rx="2.3" ry="0.8" transform="rotate(-3 1498.1 117.5)" fill="#fff3d0" opacity="0.80"/><ellipse cx="1501.2" cy="119.5" rx="2.5" ry="0.8" transform="rotate(21 1501.2 119.5)" fill="#ffe9b0" opacity="0.50"/><ellipse cx="1522.8" cy="110.0" rx="2.0" ry="0.8" transform="rotate(-32 1522.8 110.0)" fill="#fff3d0" opacity="0.48"/><ellipse cx="1515.0" cy="115.2" rx="2.9" ry="0.8" transform="rotate(-14 1515.0 115.2)" fill="#ffd98a" opacity="0.67"/><ellipse cx="1511.3" cy="115.0" rx="2.6" ry="0.8" transform="rotate(-39 1511.3 115.0)" fill="#ffcf70" opacity="0.77"/><ellipse cx="1508.6" cy="112.8" rx="1.7" ry="0.8" transform="rotate(-7 1508.6 112.8)" fill="#ffcf70" opacity="0.79"/><ellipse cx="1515.8" cy="112.2" rx="2.0" ry="0.8" transform="rotate(24 1515.8 112.2)" fill="#ffd98a" opacity="0.72"/><ellipse cx="1507.0" cy="116.7" rx="2.5" ry="0.8" transform="rotate(-57 1507.0 116.7)" fill="#fff3d0" opacity="0.56"/><ellipse cx="1511.2" cy="114.9" rx="2.3" ry="0.8" transform="rotate(-22 1511.2 114.9)" fill="#ffd98a" opacity="0.73"/><ellipse cx="1506.5" cy="112.9" rx="2.5" ry="0.8" transform="rotate(17 1506.5 112.9)" fill="#ffd98a" opacity="0.53"/><ellipse cx="1509.7" cy="112.0" rx="3.0" ry="0.8" transform="rotate(3 1509.7 112.0)" fill="#ffd98a" opacity="0.62"/><ellipse cx="1512.6" cy="108.0" rx="1.4" ry="0.8" transform="rotate(17 1512.6 108.0)" fill="#ffe9b0" opacity="0.51"/><ellipse cx="1517.4" cy="113.6" rx="2.1" ry="0.8" transform="rotate(4 1517.4 113.6)" fill="#ffd98a" opacity="0.73"/><ellipse cx="1509.0" cy="111.3" rx="3.3" ry="0.8" transform="rotate(0 1509.0 111.3)" fill="#ffcf70" opacity="0.73"/><ellipse cx="1512.8" cy="113.3" rx="2.5" ry="0.8" transform="rotate(21 1512.8 113.3)" fill="#ffd98a" opacity="0.69"/><ellipse cx="1509.2" cy="111.8" rx="1.2" ry="0.8" transform="rotate(-42 1509.2 111.8)" fill="#fff3d0" opacity="0.59"/><ellipse cx="1507.1" cy="116.5" rx="1.4" ry="0.8" transform="rotate(-17 1507.1 116.5)" fill="#ffd98a" opacity="0.68"/><ellipse cx="1450.4" cy="22.3" rx="2.2" ry="0.8" transform="rotate(27 1450.4 22.3)" fill="#fff3d0" opacity="0.56"/><ellipse cx="1449.7" cy="21.9" rx="2.4" ry="0.8" transform="rotate(-57 1449.7 21.9)" fill="#ffe9b0" opacity="0.49"/><ellipse cx="1443.1" cy="25.5" rx="2.1" ry="0.8" transform="rotate(-3 1443.1 25.5)" fill="#ffd98a" opacity="0.45"/><ellipse cx="1442.7" cy="23.5" rx="2.4" ry="0.8" transform="rotate(-24 1442.7 23.5)" fill="#ffe9b0" opacity="0.68"/><ellipse cx="1444.9" cy="23.9" rx="1.2" ry="0.8" transform="rotate(-3 1444.9 23.9)" fill="#ffe9b0" opacity="0.58"/><ellipse cx="1453.8" cy="22.8" rx="3.0" ry="0.8" transform="rotate(-9 1453.8 22.8)" fill="#fff3d0" opacity="0.49"/><ellipse cx="1447.9" cy="24.6" rx="2.8" ry="0.8" transform="rotate(15 1447.9 24.6)" fill="#ffcf70" opacity="0.56"/><ellipse cx="1446.3" cy="29.4" rx="1.1" ry="0.8" transform="rotate(-9 1446.3 29.4)" fill="#fff3d0" opacity="0.43"/><ellipse cx="1456.3" cy="18.8" rx="1.2" ry="0.8" transform="rotate(27 1456.3 18.8)" fill="#ffe9b0" opacity="0.55"/><ellipse cx="1448.6" cy="23.5" rx="1.8" ry="0.8" transform="rotate(3 1448.6 23.5)" fill="#ffd98a" opacity="0.63"/><ellipse cx="1459.1" cy="17.1" rx="2.5" ry="0.8" transform="rotate(-51 1459.1 17.1)" fill="#fff3d0" opacity="0.59"/><ellipse cx="1452.3" cy="20.3" rx="2.6" ry="0.8" transform="rotate(-16 1452.3 20.3)" fill="#ffd98a" opacity="0.69"/><ellipse cx="1447.0" cy="26.3" rx="3.3" ry="0.8" transform="rotate(-2 1447.0 26.3)" fill="#ffd98a" opacity="0.59"/><ellipse cx="1450.4" cy="26.0" rx="3.2" ry="0.8" transform="rotate(20 1450.4 26.0)" fill="#ffcf70" opacity="0.65"/><ellipse cx="1450.7" cy="20.7" rx="1.4" ry="0.8" transform="rotate(30 1450.7 20.7)" fill="#ffe9b0" opacity="0.44"/><ellipse cx="1444.9" cy="27.0" rx="2.9" ry="0.8" transform="rotate(-20 1444.9 27.0)" fill="#fff3d0" opacity="0.54"/><ellipse cx="1634.0" cy="11.2" rx="2.8" ry="0.8" transform="rotate(-45 1634.0 11.2)" fill="#ffd98a" opacity="0.59"/><ellipse cx="1646.5" cy="11.1" rx="2.1" ry="0.8" transform="rotate(24 1646.5 11.1)" fill="#ffcf70" opacity="0.58"/><ellipse cx="1642.7" cy="8.9" rx="1.1" ry="0.8" transform="rotate(-43 1642.7 8.9)" fill="#fff3d0" opacity="0.52"/><ellipse cx="1640.2" cy="11.7" rx="1.8" ry="0.8" transform="rotate(-34 1640.2 11.7)" fill="#ffd98a" opacity="0.48"/><ellipse cx="1631.2" cy="14.1" rx="3.1" ry="0.8" transform="rotate(28 1631.2 14.1)" fill="#ffd98a" opacity="0.55"/><ellipse cx="1631.1" cy="15.9" rx="2.7" ry="0.8" transform="rotate(19 1631.1 15.9)" fill="#ffd98a" opacity="0.40"/><ellipse cx="1645.1" cy="10.3" rx="2.7" ry="0.8" transform="rotate(-41 1645.1 10.3)" fill="#ffd98a" opacity="0.46"/><ellipse cx="1627.8" cy="14.4" rx="2.2" ry="0.8" transform="rotate(-59 1627.8 14.4)" fill="#fff3d0" opacity="0.45"/><ellipse cx="1633.4" cy="18.5" rx="2.9" ry="0.8" transform="rotate(6 1633.4 18.5)" fill="#ffcf70" opacity="0.41"/><ellipse cx="1639.1" cy="10.0" rx="3.4" ry="0.8" transform="rotate(-14 1639.1 10.0)" fill="#fff3d0" opacity="0.49"/><ellipse cx="1635.6" cy="12.6" rx="2.6" ry="0.8" transform="rotate(-50 1635.6 12.6)" fill="#fff3d0" opacity="0.59"/><ellipse cx="1631.3" cy="14.4" rx="1.9" ry="0.8" transform="rotate(-57 1631.3 14.4)" fill="#ffcf70" opacity="0.39"/><ellipse cx="1632.8" cy="14.0" rx="3.1" ry="0.8" transform="rotate(-40 1632.8 14.0)" fill="#ffcf70" opacity="0.38"/><ellipse cx="1629.9" cy="13.1" rx="2.0" ry="0.8" transform="rotate(-20 1629.9 13.1)" fill="#ffd98a" opacity="0.37"/><ellipse cx="1636.9" cy="11.5" rx="1.5" ry="0.8" transform="rotate(-17 1636.9 11.5)" fill="#ffcf70" opacity="0.51"/><ellipse cx="1630.9" cy="12.1" rx="1.1" ry="0.8" transform="rotate(-20 1630.9 12.1)" fill="#ffcf70" opacity="0.39"/><ellipse cx="1642.9" cy="14.0" rx="2.6" ry="0.8" transform="rotate(-28 1642.9 14.0)" fill="#ffd98a" opacity="0.58"/><ellipse cx="1633.7" cy="13.6" rx="1.1" ry="0.8" transform="rotate(6 1633.7 13.6)" fill="#ffd98a" opacity="0.51"/><ellipse cx="1631.6" cy="19.9" rx="3.3" ry="0.8" transform="rotate(-56 1631.6 19.9)" fill="#ffd98a" opacity="0.55"/><ellipse cx="1631.1" cy="68.3" rx="2.6" ry="0.8" transform="rotate(-25 1631.1 68.3)" fill="#ffe9b0" opacity="0.31"/><ellipse cx="1641.2" cy="66.0" rx="2.0" ry="0.8" transform="rotate(24 1641.2 66.0)" fill="#fff3d0" opacity="0.30"/><ellipse cx="1635.3" cy="68.2" rx="1.3" ry="0.8" transform="rotate(-54 1635.3 68.2)" fill="#fff3d0" opacity="0.32"/><ellipse cx="1626.7" cy="70.2" rx="2.0" ry="0.8" transform="rotate(-47 1626.7 70.2)" fill="#ffcf70" opacity="0.26"/><ellipse cx="1632.2" cy="75.0" rx="2.0" ry="0.8" transform="rotate(-39 1632.2 75.0)" fill="#fff3d0" opacity="0.26"/><ellipse cx="1635.3" cy="69.1" rx="2.3" ry="0.8" transform="rotate(-27 1635.3 69.1)" fill="#ffd98a" opacity="0.27"/><ellipse cx="1628.0" cy="69.0" rx="2.4" ry="0.8" transform="rotate(-13 1628.0 69.0)" fill="#ffd98a" opacity="0.31"/><ellipse cx="1632.6" cy="71.1" rx="1.5" ry="0.8" transform="rotate(-53 1632.6 71.1)" fill="#ffcf70" opacity="0.27"/><ellipse cx="1643.4" cy="64.3" rx="1.6" ry="0.8" transform="rotate(-5 1643.4 64.3)" fill="#ffe9b0" opacity="0.25"/><ellipse cx="1643.2" cy="65.2" rx="1.1" ry="0.8" transform="rotate(-43 1643.2 65.2)" fill="#fff3d0" opacity="0.34"/><ellipse cx="1638.4" cy="69.5" rx="2.6" ry="0.8" transform="rotate(-56 1638.4 69.5)" fill="#fff3d0" opacity="0.33"/><ellipse cx="1633.5" cy="66.3" rx="1.3" ry="0.8" transform="rotate(-19 1633.5 66.3)" fill="#fff3d0" opacity="0.27"/><ellipse cx="1640.1" cy="71.8" rx="1.9" ry="0.8" transform="rotate(6 1640.1 71.8)" fill="#ffcf70" opacity="0.27"/><ellipse cx="1626.9" cy="76.0" rx="2.6" ry="0.8" transform="rotate(16 1626.9 76.0)" fill="#ffd98a" opacity="0.27"/><ellipse cx="1636.3" cy="66.7" rx="1.1" ry="0.8" transform="rotate(29 1636.3 66.7)" fill="#fff3d0" opacity="0.34"/><ellipse cx="1622.8" cy="69.5" rx="1.1" ry="0.8" transform="rotate(28 1622.8 69.5)" fill="#ffd98a" opacity="0.25"/><ellipse cx="1636.1" cy="69.1" rx="3.5" ry="0.8" transform="rotate(-17 1636.1 69.1)" fill="#ffd98a" opacity="0.34"/><ellipse cx="1637.5" cy="69.9" rx="3.0" ry="0.8" transform="rotate(-11 1637.5 69.9)" fill="#ffd98a" opacity="0.27"/><ellipse cx="1637.3" cy="65.0" rx="2.5" ry="0.8" transform="rotate(-51 1637.3 65.0)" fill="#fff3d0" opacity="0.22"/><ellipse cx="976.2" cy="169.3" rx="2.2" ry="0.8" transform="rotate(-35 976.2 169.3)" fill="#ffe9b0" opacity="0.45"/><ellipse cx="978.3" cy="168.5" rx="1.1" ry="0.8" transform="rotate(18 978.3 168.5)" fill="#fff3d0" opacity="0.43"/><ellipse cx="982.1" cy="171.8" rx="3.1" ry="0.8" transform="rotate(-17 982.1 171.8)" fill="#ffcf70" opacity="0.47"/><ellipse cx="980.5" cy="171.9" rx="1.2" ry="0.8" transform="rotate(-1 980.5 171.9)" fill="#fff3d0" opacity="0.55"/><ellipse cx="982.5" cy="172.5" rx="1.2" ry="0.8" transform="rotate(-39 982.5 172.5)" fill="#ffd98a" opacity="0.51"/><ellipse cx="972.3" cy="169.9" rx="2.0" ry="0.8" transform="rotate(-56 972.3 169.9)" fill="#fff3d0" opacity="0.50"/><ellipse cx="977.6" cy="170.7" rx="3.5" ry="0.8" transform="rotate(-55 977.6 170.7)" fill="#ffcf70" opacity="0.58"/><ellipse cx="977.8" cy="171.9" rx="1.8" ry="0.8" transform="rotate(15 977.8 171.9)" fill="#ffcf70" opacity="0.42"/><ellipse cx="980.1" cy="170.9" rx="1.3" ry="0.8" transform="rotate(18 980.1 170.9)" fill="#ffe9b0" opacity="0.48"/><ellipse cx="979.2" cy="166.6" rx="1.9" ry="0.8" transform="rotate(29 979.2 166.6)" fill="#ffcf70" opacity="0.45"/><ellipse cx="978.5" cy="170.1" rx="1.9" ry="0.8" transform="rotate(-5 978.5 170.1)" fill="#fff3d0" opacity="0.39"/><ellipse cx="982.4" cy="170.2" rx="1.7" ry="0.8" transform="rotate(-30 982.4 170.2)" fill="#fff3d0" opacity="0.53"/><ellipse cx="975.2" cy="173.3" rx="1.8" ry="0.8" transform="rotate(-48 975.2 173.3)" fill="#ffd98a" opacity="0.52"/><ellipse cx="973.3" cy="168.9" rx="2.3" ry="0.8" transform="rotate(-54 973.3 168.9)" fill="#ffd98a" opacity="0.36"/><ellipse cx="979.9" cy="173.6" rx="2.5" ry="0.8" transform="rotate(-41 979.9 173.6)" fill="#ffd98a" opacity="0.50"/><ellipse cx="981.3" cy="167.5" rx="2.9" ry="0.8" transform="rotate(-58 981.3 167.5)" fill="#ffcf70" opacity="0.55"/><ellipse cx="1245.6" cy="23.9" rx="3.5" ry="0.8" transform="rotate(25 1245.6 23.9)" fill="#ffe9b0" opacity="0.47"/><ellipse cx="1241.8" cy="23.3" rx="3.0" ry="0.8" transform="rotate(-59 1241.8 23.3)" fill="#ffd98a" opacity="0.45"/><ellipse cx="1241.2" cy="24.3" rx="1.4" ry="0.8" transform="rotate(7 1241.2 24.3)" fill="#ffe9b0" opacity="0.48"/><ellipse cx="1241.3" cy="23.8" rx="1.6" ry="0.8" transform="rotate(-56 1241.3 23.8)" fill="#ffd98a" opacity="0.43"/><ellipse cx="1236.6" cy="25.0" rx="2.4" ry="0.8" transform="rotate(-36 1236.6 25.0)" fill="#ffe9b0" opacity="0.46"/><ellipse cx="1240.2" cy="21.6" rx="1.9" ry="0.8" transform="rotate(9 1240.2 21.6)" fill="#ffcf70" opacity="0.54"/><ellipse cx="1238.7" cy="26.6" rx="1.7" ry="0.8" transform="rotate(-56 1238.7 26.6)" fill="#fff3d0" opacity="0.55"/><ellipse cx="1233.4" cy="27.6" rx="2.0" ry="0.8" transform="rotate(-12 1233.4 27.6)" fill="#fff3d0" opacity="0.52"/><ellipse cx="1239.8" cy="26.5" rx="3.2" ry="0.8" transform="rotate(-12 1239.8 26.5)" fill="#ffe9b0" opacity="0.41"/><ellipse cx="1238.9" cy="24.8" rx="2.8" ry="0.8" transform="rotate(9 1238.9 24.8)" fill="#fff3d0" opacity="0.54"/><ellipse cx="1246.4" cy="23.3" rx="1.3" ry="0.8" transform="rotate(15 1246.4 23.3)" fill="#ffe9b0" opacity="0.39"/><ellipse cx="1241.6" cy="23.9" rx="1.8" ry="0.8" transform="rotate(-58 1241.6 23.9)" fill="#ffe9b0" opacity="0.50"/><ellipse cx="1226.9" cy="38.0" rx="3.0" ry="0.8" transform="rotate(-14 1226.9 38.0)" fill="#ffcf70" opacity="0.49"/><ellipse cx="1222.0" cy="39.3" rx="2.9" ry="0.8" transform="rotate(-50 1222.0 39.3)" fill="#ffe9b0" opacity="0.42"/><ellipse cx="1228.8" cy="40.2" rx="3.4" ry="0.8" transform="rotate(-48 1228.8 40.2)" fill="#ffe9b0" opacity="0.50"/><ellipse cx="1223.6" cy="40.2" rx="1.2" ry="0.8" transform="rotate(-9 1223.6 40.2)" fill="#ffe9b0" opacity="0.39"/><ellipse cx="1226.9" cy="39.4" rx="1.4" ry="0.8" transform="rotate(-18 1226.9 39.4)" fill="#ffe9b0" opacity="0.52"/><ellipse cx="1221.9" cy="39.9" rx="1.3" ry="0.8" transform="rotate(-40 1221.9 39.9)" fill="#ffd98a" opacity="0.45"/><ellipse cx="1222.5" cy="39.5" rx="2.0" ry="0.8" transform="rotate(-16 1222.5 39.5)" fill="#ffd98a" opacity="0.54"/><ellipse cx="1225.8" cy="39.9" rx="1.7" ry="0.8" transform="rotate(-25 1225.8 39.9)" fill="#ffe9b0" opacity="0.54"/><ellipse cx="1226.7" cy="39.1" rx="2.1" ry="0.8" transform="rotate(-25 1226.7 39.1)" fill="#ffd98a" opacity="0.51"/><ellipse cx="1183.8" cy="55.2" rx="2.6" ry="0.8" transform="rotate(-37 1183.8 55.2)" fill="#ffcf70" opacity="0.51"/><ellipse cx="1190.6" cy="55.2" rx="1.5" ry="0.8" transform="rotate(-20 1190.6 55.2)" fill="#fff3d0" opacity="0.57"/><ellipse cx="1182.0" cy="58.3" rx="2.5" ry="0.8" transform="rotate(14 1182.0 58.3)" fill="#fff3d0" opacity="0.40"/><ellipse cx="1182.2" cy="56.2" rx="2.9" ry="0.8" transform="rotate(11 1182.2 56.2)" fill="#ffe9b0" opacity="0.56"/><ellipse cx="1188.7" cy="52.0" rx="3.4" ry="0.8" transform="rotate(-12 1188.7 52.0)" fill="#ffe9b0" opacity="0.39"/><ellipse cx="1181.8" cy="55.1" rx="3.0" ry="0.8" transform="rotate(18 1181.8 55.1)" fill="#ffd98a" opacity="0.56"/><ellipse cx="1183.0" cy="55.8" rx="2.6" ry="0.8" transform="rotate(6 1183.0 55.8)" fill="#fff3d0" opacity="0.41"/><ellipse cx="1183.7" cy="56.9" rx="1.9" ry="0.8" transform="rotate(7 1183.7 56.9)" fill="#ffcf70" opacity="0.57"/><ellipse cx="1186.2" cy="54.1" rx="1.3" ry="0.8" transform="rotate(-15 1186.2 54.1)" fill="#ffcf70" opacity="0.43"/><ellipse cx="1290.4" cy="52.5" rx="2.1" ry="0.8" transform="rotate(-7 1290.4 52.5)" fill="#ffcf70" opacity="0.48"/><ellipse cx="1289.3" cy="52.3" rx="1.8" ry="0.8" transform="rotate(9 1289.3 52.3)" fill="#ffe9b0" opacity="0.48"/><ellipse cx="1288.8" cy="52.4" rx="3.2" ry="0.8" transform="rotate(-55 1288.8 52.4)" fill="#fff3d0" opacity="0.47"/><ellipse cx="1294.4" cy="48.8" rx="2.5" ry="0.8" transform="rotate(2 1294.4 48.8)" fill="#ffe9b0" opacity="0.56"/><ellipse cx="1291.5" cy="51.8" rx="1.6" ry="0.8" transform="rotate(14 1291.5 51.8)" fill="#ffcf70" opacity="0.46"/><ellipse cx="1295.9" cy="49.3" rx="2.1" ry="0.8" transform="rotate(-41 1295.9 49.3)" fill="#ffe9b0" opacity="0.55"/><ellipse cx="1286.4" cy="52.7" rx="2.1" ry="0.8" transform="rotate(18 1286.4 52.7)" fill="#ffe9b0" opacity="0.51"/><ellipse cx="1290.8" cy="51.3" rx="1.9" ry="0.8" transform="rotate(-30 1290.8 51.3)" fill="#fff3d0" opacity="0.55"/><ellipse cx="1287.0" cy="52.2" rx="2.9" ry="0.8" transform="rotate(-28 1287.0 52.2)" fill="#ffcf70" opacity="0.39"/><ellipse cx="1262.4" cy="86.2" rx="1.8" ry="0.8" transform="rotate(13 1262.4 86.2)" fill="#fff3d0" opacity="0.59"/><ellipse cx="1262.0" cy="85.0" rx="2.7" ry="0.8" transform="rotate(-56 1262.0 85.0)" fill="#ffcf70" opacity="0.41"/><ellipse cx="1261.0" cy="83.1" rx="2.0" ry="0.8" transform="rotate(-1 1261.0 83.1)" fill="#fff3d0" opacity="0.41"/><ellipse cx="1264.3" cy="82.0" rx="3.2" ry="0.8" transform="rotate(-27 1264.3 82.0)" fill="#ffe9b0" opacity="0.60"/><ellipse cx="1254.1" cy="84.9" rx="3.2" ry="0.8" transform="rotate(-23 1254.1 84.9)" fill="#ffe9b0" opacity="0.55"/><ellipse cx="1263.4" cy="83.7" rx="2.9" ry="0.8" transform="rotate(4 1263.4 83.7)" fill="#ffd98a" opacity="0.42"/><ellipse cx="1262.1" cy="84.1" rx="1.4" ry="0.8" transform="rotate(-34 1262.1 84.1)" fill="#ffd98a" opacity="0.57"/><ellipse cx="1260.6" cy="83.8" rx="2.0" ry="0.8" transform="rotate(-11 1260.6 83.8)" fill="#ffcf70" opacity="0.58"/><ellipse cx="1260.1" cy="83.2" rx="1.4" ry="0.8" transform="rotate(30 1260.1 83.2)" fill="#ffcf70" opacity="0.56"/><ellipse cx="1259.3" cy="82.7" rx="3.3" ry="0.8" transform="rotate(8 1259.3 82.7)" fill="#fff3d0" opacity="0.37"/><ellipse cx="1258.7" cy="85.0" rx="3.2" ry="0.8" transform="rotate(-50 1258.7 85.0)" fill="#fff3d0" opacity="0.56"/><ellipse cx="1264.6" cy="83.6" rx="2.1" ry="0.8" transform="rotate(17 1264.6 83.6)" fill="#fff3d0" opacity="0.59"/><ellipse cx="1372.7" cy="120.9" rx="2.6" ry="0.8" transform="rotate(15 1372.7 120.9)" fill="#ffcf70" opacity="0.38"/><ellipse cx="1371.4" cy="119.7" rx="2.8" ry="0.8" transform="rotate(-30 1371.4 119.7)" fill="#ffe9b0" opacity="0.37"/><ellipse cx="1367.7" cy="120.8" rx="3.5" ry="0.8" transform="rotate(-56 1367.7 120.8)" fill="#ffcf70" opacity="0.47"/><ellipse cx="1370.1" cy="120.0" rx="1.8" ry="0.8" transform="rotate(6 1370.1 120.0)" fill="#ffe9b0" opacity="0.56"/><ellipse cx="1366.8" cy="123.2" rx="2.3" ry="0.8" transform="rotate(-34 1366.8 123.2)" fill="#ffe9b0" opacity="0.40"/><ellipse cx="1371.5" cy="118.7" rx="2.5" ry="0.8" transform="rotate(-45 1371.5 118.7)" fill="#ffd98a" opacity="0.57"/><ellipse cx="1370.8" cy="120.7" rx="1.8" ry="0.8" transform="rotate(-32 1370.8 120.7)" fill="#fff3d0" opacity="0.47"/><ellipse cx="1372.4" cy="119.0" rx="1.0" ry="0.8" transform="rotate(-23 1372.4 119.0)" fill="#fff3d0" opacity="0.44"/><ellipse cx="1373.9" cy="119.2" rx="2.1" ry="0.8" transform="rotate(21 1373.9 119.2)" fill="#ffd98a" opacity="0.54"/><ellipse cx="1516.1" cy="80.1" rx="3.0" ry="0.8" transform="rotate(-7 1516.1 80.1)" fill="#fff3d0" opacity="0.46"/><ellipse cx="1520.6" cy="79.1" rx="3.5" ry="0.8" transform="rotate(19 1520.6 79.1)" fill="#ffe9b0" opacity="0.38"/><ellipse cx="1518.2" cy="81.5" rx="2.3" ry="0.8" transform="rotate(-47 1518.2 81.5)" fill="#fff3d0" opacity="0.39"/><ellipse cx="1519.6" cy="80.2" rx="2.6" ry="0.8" transform="rotate(-40 1519.6 80.2)" fill="#ffcf70" opacity="0.46"/><ellipse cx="1515.2" cy="82.1" rx="1.7" ry="0.8" transform="rotate(30 1515.2 82.1)" fill="#fff3d0" opacity="0.38"/><ellipse cx="1521.8" cy="80.5" rx="3.3" ry="0.8" transform="rotate(30 1521.8 80.5)" fill="#fff3d0" opacity="0.43"/><ellipse cx="1520.8" cy="77.7" rx="2.5" ry="0.8" transform="rotate(-30 1520.8 77.7)" fill="#ffd98a" opacity="0.36"/><ellipse cx="1520.9" cy="78.1" rx="1.9" ry="0.8" transform="rotate(-31 1520.9 78.1)" fill="#ffd98a" opacity="0.48"/><ellipse cx="1522.6" cy="80.1" rx="1.6" ry="0.8" transform="rotate(-3 1522.6 80.1)" fill="#ffd98a" opacity="0.42"/><ellipse cx="1584.2" cy="139.6" rx="2.4" ry="0.8" transform="rotate(-17 1584.2 139.6)" fill="#ffe9b0" opacity="0.38"/><ellipse cx="1586.1" cy="139.5" rx="1.3" ry="0.8" transform="rotate(-9 1586.1 139.5)" fill="#fff3d0" opacity="0.47"/><ellipse cx="1580.0" cy="139.8" rx="2.5" ry="0.8" transform="rotate(-29 1580.0 139.8)" fill="#ffd98a" opacity="0.46"/><ellipse cx="1578.6" cy="141.0" rx="1.1" ry="0.8" transform="rotate(-21 1578.6 141.0)" fill="#ffd98a" opacity="0.39"/><ellipse cx="1579.6" cy="140.1" rx="2.3" ry="0.8" transform="rotate(-42 1579.6 140.1)" fill="#ffd98a" opacity="0.42"/><ellipse cx="1578.7" cy="143.2" rx="1.5" ry="0.8" transform="rotate(-1 1578.7 143.2)" fill="#ffcf70" opacity="0.38"/><ellipse cx="1579.1" cy="140.3" rx="2.0" ry="0.8" transform="rotate(-1 1579.1 140.3)" fill="#ffe9b0" opacity="0.36"/><ellipse cx="1582.0" cy="138.4" rx="3.1" ry="0.8" transform="rotate(27 1582.0 138.4)" fill="#fff3d0" opacity="0.36"/><ellipse cx="1580.9" cy="139.9" rx="2.7" ry="0.8" transform="rotate(-17 1580.9 139.9)" fill="#ffe9b0" opacity="0.41"/><ellipse cx="1640.9" cy="152.4" rx="3.0" ry="0.8" transform="rotate(-57 1640.9 152.4)" fill="#ffe9b0" opacity="0.47"/><ellipse cx="1643.1" cy="151.0" rx="1.1" ry="0.8" transform="rotate(-43 1643.1 151.0)" fill="#fff3d0" opacity="0.37"/><ellipse cx="1643.8" cy="150.3" rx="3.3" ry="0.8" transform="rotate(15 1643.8 150.3)" fill="#fff3d0" opacity="0.43"/><ellipse cx="1643.8" cy="147.8" rx="2.7" ry="0.8" transform="rotate(30 1643.8 147.8)" fill="#ffe9b0" opacity="0.31"/><ellipse cx="1642.9" cy="148.7" rx="2.6" ry="0.8" transform="rotate(-14 1642.9 148.7)" fill="#ffd98a" opacity="0.42"/><ellipse cx="1640.3" cy="148.7" rx="3.4" ry="0.8" transform="rotate(-44 1640.3 148.7)" fill="#ffd98a" opacity="0.42"/><ellipse cx="1640.1" cy="147.5" rx="3.1" ry="0.8" transform="rotate(18 1640.1 147.5)" fill="#ffcf70" opacity="0.36"/><ellipse cx="1634.7" cy="153.7" rx="2.8" ry="0.8" transform="rotate(-14 1634.7 153.7)" fill="#ffe9b0" opacity="0.31"/><ellipse cx="1641.5" cy="150.2" rx="1.9" ry="0.8" transform="rotate(-28 1641.5 150.2)" fill="#ffe9b0" opacity="0.49"/><ellipse cx="1393.1" cy="160.2" rx="2.4" ry="0.8" transform="rotate(-18 1393.1 160.2)" fill="#fff3d0" opacity="0.49"/><ellipse cx="1390.1" cy="161.5" rx="1.0" ry="0.8" transform="rotate(-36 1390.1 161.5)" fill="#ffd98a" opacity="0.58"/><ellipse cx="1386.9" cy="158.7" rx="2.1" ry="0.8" transform="rotate(23 1386.9 158.7)" fill="#fff3d0" opacity="0.56"/><ellipse cx="1391.7" cy="156.1" rx="1.4" ry="0.8" transform="rotate(15 1391.7 156.1)" fill="#ffd98a" opacity="0.48"/><ellipse cx="1387.9" cy="162.3" rx="2.5" ry="0.8" transform="rotate(29 1387.9 162.3)" fill="#ffe9b0" opacity="0.49"/><ellipse cx="1392.0" cy="158.4" rx="1.5" ry="0.8" transform="rotate(13 1392.0 158.4)" fill="#fff3d0" opacity="0.58"/><ellipse cx="1391.2" cy="160.1" rx="2.0" ry="0.8" transform="rotate(-37 1391.2 160.1)" fill="#ffcf70" opacity="0.50"/><ellipse cx="1387.8" cy="158.3" rx="3.5" ry="0.8" transform="rotate(-3 1387.8 158.3)" fill="#ffd98a" opacity="0.53"/><ellipse cx="1387.9" cy="160.0" rx="1.4" ry="0.8" transform="rotate(16 1387.9 160.0)" fill="#ffcf70" opacity="0.41"/><ellipse cx="1392.9" cy="161.8" rx="2.0" ry="0.8" transform="rotate(-36 1392.9 161.8)" fill="#ffd98a" opacity="0.49"/><ellipse cx="1389.2" cy="161.5" rx="2.9" ry="0.8" transform="rotate(-23 1389.2 161.5)" fill="#ffd98a" opacity="0.37"/><ellipse cx="1387.0" cy="161.7" rx="3.3" ry="0.8" transform="rotate(7 1387.0 161.7)" fill="#ffe9b0" opacity="0.39"/><ellipse cx="1180.2" cy="177.3" rx="3.0" ry="0.8" transform="rotate(-9 1180.2 177.3)" fill="#ffe9b0" opacity="0.58"/><ellipse cx="1182.2" cy="173.6" rx="1.1" ry="0.8" transform="rotate(-1 1182.2 173.6)" fill="#ffcf70" opacity="0.54"/><ellipse cx="1179.0" cy="176.7" rx="3.0" ry="0.8" transform="rotate(-6 1179.0 176.7)" fill="#fff3d0" opacity="0.58"/><ellipse cx="1182.1" cy="173.5" rx="2.2" ry="0.8" transform="rotate(19 1182.1 173.5)" fill="#fff3d0" opacity="0.47"/><ellipse cx="1180.3" cy="175.2" rx="2.3" ry="0.8" transform="rotate(5 1180.3 175.2)" fill="#ffe9b0" opacity="0.46"/><ellipse cx="1183.7" cy="174.3" rx="2.1" ry="0.8" transform="rotate(12 1183.7 174.3)" fill="#ffd98a" opacity="0.41"/><ellipse cx="1179.1" cy="173.6" rx="2.5" ry="0.8" transform="rotate(-4 1179.1 173.6)" fill="#ffcf70" opacity="0.36"/><ellipse cx="1178.4" cy="173.7" rx="2.6" ry="0.8" transform="rotate(-39 1178.4 173.7)" fill="#ffcf70" opacity="0.55"/><ellipse cx="1170.1" cy="177.4" rx="2.2" ry="0.8" transform="rotate(-57 1170.1 177.4)" fill="#ffd98a" opacity="0.37"/><ellipse cx="1179.0" cy="176.3" rx="2.0" ry="0.8" transform="rotate(-46 1179.0 176.3)" fill="#fff3d0" opacity="0.51"/><ellipse cx="1175.9" cy="178.4" rx="1.4" ry="0.8" transform="rotate(21 1175.9 178.4)" fill="#ffe9b0" opacity="0.47"/><ellipse cx="1176.6" cy="177.0" rx="2.6" ry="0.8" transform="rotate(-28 1176.6 177.0)" fill="#ffe9b0" opacity="0.56"/><ellipse cx="1025.7" cy="119.8" rx="2.1" ry="0.8" transform="rotate(13 1025.7 119.8)" fill="#ffe9b0" opacity="0.32"/><ellipse cx="1031.2" cy="119.6" rx="2.1" ry="0.8" transform="rotate(9 1031.2 119.6)" fill="#ffe9b0" opacity="0.43"/><ellipse cx="1028.1" cy="119.7" rx="3.1" ry="0.8" transform="rotate(-49 1028.1 119.7)" fill="#ffd98a" opacity="0.49"/><ellipse cx="1031.9" cy="119.7" rx="1.4" ry="0.8" transform="rotate(-3 1031.9 119.7)" fill="#ffcf70" opacity="0.40"/><ellipse cx="1025.8" cy="121.3" rx="2.0" ry="0.8" transform="rotate(10 1025.8 121.3)" fill="#fff3d0" opacity="0.40"/><ellipse cx="1034.3" cy="118.5" rx="1.8" ry="0.8" transform="rotate(-2 1034.3 118.5)" fill="#fff3d0" opacity="0.44"/><ellipse cx="1029.6" cy="120.6" rx="2.7" ry="0.8" transform="rotate(5 1029.6 120.6)" fill="#ffd98a" opacity="0.42"/><ellipse cx="1030.9" cy="120.5" rx="2.1" ry="0.8" transform="rotate(-41 1030.9 120.5)" fill="#ffd98a" opacity="0.34"/><ellipse cx="1031.2" cy="120.2" rx="3.1" ry="0.8" transform="rotate(-25 1031.2 120.2)" fill="#ffe9b0" opacity="0.47"/><ellipse cx="751.8" cy="63.3" rx="2.1" ry="0.8" transform="rotate(-11 751.8 63.3)" fill="#ffe9b0" opacity="0.57"/><ellipse cx="756.4" cy="59.9" rx="3.3" ry="0.8" transform="rotate(-35 756.4 59.9)" fill="#ffe9b0" opacity="0.46"/><ellipse cx="755.7" cy="59.2" rx="3.0" ry="0.8" transform="rotate(-15 755.7 59.2)" fill="#fff3d0" opacity="0.53"/><ellipse cx="758.2" cy="62.0" rx="2.4" ry="0.8" transform="rotate(-9 758.2 62.0)" fill="#fff3d0" opacity="0.46"/><ellipse cx="762.5" cy="56.5" rx="1.4" ry="0.8" transform="rotate(9 762.5 56.5)" fill="#ffd98a" opacity="0.43"/><ellipse cx="757.0" cy="59.2" rx="1.8" ry="0.8" transform="rotate(-45 757.0 59.2)" fill="#ffe9b0" opacity="0.50"/><ellipse cx="752.0" cy="61.8" rx="1.9" ry="0.8" transform="rotate(26 752.0 61.8)" fill="#ffcf70" opacity="0.52"/><ellipse cx="759.4" cy="60.8" rx="2.6" ry="0.8" transform="rotate(5 759.4 60.8)" fill="#fff3d0" opacity="0.53"/><ellipse cx="764.3" cy="57.6" rx="1.4" ry="0.8" transform="rotate(17 764.3 57.6)" fill="#ffe9b0" opacity="0.43"/><ellipse cx="760.2" cy="59.2" rx="2.4" ry="0.8" transform="rotate(4 760.2 59.2)" fill="#fff3d0" opacity="0.44"/><ellipse cx="760.4" cy="60.3" rx="1.8" ry="0.8" transform="rotate(4 760.4 60.3)" fill="#ffcf70" opacity="0.59"/><ellipse cx="761.6" cy="59.2" rx="1.5" ry="0.8" transform="rotate(-10 761.6 59.2)" fill="#fff3d0" opacity="0.60"/><ellipse cx="792.6" cy="130.9" rx="1.6" ry="0.8" transform="rotate(-38 792.6 130.9)" fill="#ffd98a" opacity="0.35"/><ellipse cx="787.6" cy="128.4" rx="3.5" ry="0.8" transform="rotate(-26 787.6 128.4)" fill="#fff3d0" opacity="0.47"/><ellipse cx="790.8" cy="130.8" rx="1.3" ry="0.8" transform="rotate(-52 790.8 130.8)" fill="#fff3d0" opacity="0.33"/><ellipse cx="790.4" cy="129.5" rx="1.5" ry="0.8" transform="rotate(-15 790.4 129.5)" fill="#fff3d0" opacity="0.37"/><ellipse cx="789.0" cy="130.7" rx="2.7" ry="0.8" transform="rotate(-32 789.0 130.7)" fill="#fff3d0" opacity="0.33"/><ellipse cx="795.2" cy="128.5" rx="1.2" ry="0.8" transform="rotate(5 795.2 128.5)" fill="#ffd98a" opacity="0.48"/><ellipse cx="787.1" cy="130.5" rx="2.4" ry="0.8" transform="rotate(3 787.1 130.5)" fill="#ffd98a" opacity="0.34"/><ellipse cx="792.6" cy="130.3" rx="1.5" ry="0.8" transform="rotate(12 792.6 130.3)" fill="#ffd98a" opacity="0.35"/><ellipse cx="791.7" cy="130.6" rx="3.3" ry="0.8" transform="rotate(-48 791.7 130.6)" fill="#fff3d0" opacity="0.47"/><ellipse cx="737.1" cy="101.9" rx="2.8" ry="0.8" transform="rotate(-7 737.1 101.9)" fill="#ffe9b0" opacity="0.42"/><ellipse cx="745.7" cy="100.4" rx="2.7" ry="0.8" transform="rotate(16 745.7 100.4)" fill="#ffe9b0" opacity="0.39"/><ellipse cx="739.5" cy="101.4" rx="2.4" ry="0.8" transform="rotate(20 739.5 101.4)" fill="#ffe9b0" opacity="0.35"/><ellipse cx="744.8" cy="99.5" rx="3.0" ry="0.8" transform="rotate(3 744.8 99.5)" fill="#ffd98a" opacity="0.47"/><ellipse cx="741.8" cy="100.8" rx="1.1" ry="0.8" transform="rotate(-1 741.8 100.8)" fill="#ffcf70" opacity="0.46"/><ellipse cx="741.1" cy="97.8" rx="2.1" ry="0.8" transform="rotate(-38 741.1 97.8)" fill="#ffd98a" opacity="0.41"/><ellipse cx="740.3" cy="99.8" rx="3.2" ry="0.8" transform="rotate(-43 740.3 99.8)" fill="#ffd98a" opacity="0.47"/><ellipse cx="743.5" cy="101.1" rx="2.3" ry="0.8" transform="rotate(-56 743.5 101.1)" fill="#ffe9b0" opacity="0.41"/><ellipse cx="736.1" cy="102.0" rx="2.6" ry="0.8" transform="rotate(22 736.1 102.0)" fill="#ffcf70" opacity="0.33"/><ellipse cx="621.1" cy="150.1" rx="2.9" ry="0.8" transform="rotate(-35 621.1 150.1)" fill="#ffe9b0" opacity="0.36"/><ellipse cx="617.3" cy="152.9" rx="2.7" ry="0.8" transform="rotate(-47 617.3 152.9)" fill="#fff3d0" opacity="0.44"/><ellipse cx="617.5" cy="148.9" rx="2.4" ry="0.8" transform="rotate(-14 617.5 148.9)" fill="#ffe9b0" opacity="0.35"/><ellipse cx="618.2" cy="150.5" rx="1.2" ry="0.8" transform="rotate(20 618.2 150.5)" fill="#ffe9b0" opacity="0.47"/><ellipse cx="619.0" cy="152.0" rx="1.9" ry="0.8" transform="rotate(-45 619.0 152.0)" fill="#ffcf70" opacity="0.44"/><ellipse cx="623.7" cy="147.6" rx="3.3" ry="0.8" transform="rotate(7 623.7 147.6)" fill="#ffe9b0" opacity="0.49"/><ellipse cx="618.7" cy="149.3" rx="3.1" ry="0.8" transform="rotate(-41 618.7 149.3)" fill="#ffd98a" opacity="0.41"/><ellipse cx="620.6" cy="149.4" rx="1.8" ry="0.8" transform="rotate(12 620.6 149.4)" fill="#fff3d0" opacity="0.41"/><ellipse cx="623.7" cy="148.3" rx="2.6" ry="0.8" transform="rotate(-4 623.7 148.3)" fill="#fff3d0" opacity="0.40"/><ellipse cx="560.0" cy="180.2" rx="1.6" ry="0.8" transform="rotate(-0 560.0 180.2)" fill="#ffcf70" opacity="0.40"/><ellipse cx="561.3" cy="180.4" rx="2.3" ry="0.8" transform="rotate(8 561.3 180.4)" fill="#fff3d0" opacity="0.56"/><ellipse cx="559.9" cy="181.5" rx="3.0" ry="0.8" transform="rotate(-36 559.9 181.5)" fill="#ffd98a" opacity="0.48"/><ellipse cx="559.9" cy="181.0" rx="1.0" ry="0.8" transform="rotate(-58 559.9 181.0)" fill="#ffd98a" opacity="0.48"/><ellipse cx="558.4" cy="181.0" rx="3.4" ry="0.8" transform="rotate(-34 558.4 181.0)" fill="#fff3d0" opacity="0.60"/><ellipse cx="562.5" cy="178.8" rx="2.0" ry="0.8" transform="rotate(28 562.5 178.8)" fill="#fff3d0" opacity="0.44"/><ellipse cx="560.8" cy="182.5" rx="1.2" ry="0.8" transform="rotate(28 560.8 182.5)" fill="#ffd98a" opacity="0.53"/><ellipse cx="560.1" cy="180.5" rx="3.3" ry="0.8" transform="rotate(-22 560.1 180.5)" fill="#fff3d0" opacity="0.42"/><ellipse cx="559.9" cy="177.9" rx="2.7" ry="0.8" transform="rotate(12 559.9 177.9)" fill="#ffcf70" opacity="0.52"/><ellipse cx="557.8" cy="179.7" rx="2.4" ry="0.8" transform="rotate(-34 557.8 179.7)" fill="#ffd98a" opacity="0.47"/><ellipse cx="563.8" cy="177.3" rx="1.4" ry="0.8" transform="rotate(9 563.8 177.3)" fill="#fff3d0" opacity="0.39"/><ellipse cx="563.2" cy="180.5" rx="1.6" ry="0.8" transform="rotate(-58 563.2 180.5)" fill="#ffe9b0" opacity="0.42"/><ellipse cx="299.8" cy="173.3" rx="2.3" ry="0.8" transform="rotate(28 299.8 173.3)" fill="#ffcf70" opacity="0.52"/><ellipse cx="299.2" cy="173.3" rx="2.3" ry="0.8" transform="rotate(-55 299.2 173.3)" fill="#ffe9b0" opacity="0.48"/><ellipse cx="299.0" cy="173.3" rx="2.5" ry="0.8" transform="rotate(-19 299.0 173.3)" fill="#ffcf70" opacity="0.50"/><ellipse cx="290.2" cy="177.9" rx="1.6" ry="0.8" transform="rotate(-46 290.2 177.9)" fill="#fff3d0" opacity="0.47"/><ellipse cx="303.5" cy="172.9" rx="1.3" ry="0.8" transform="rotate(2 303.5 172.9)" fill="#ffe9b0" opacity="0.52"/><ellipse cx="306.8" cy="175.2" rx="1.7" ry="0.8" transform="rotate(-59 306.8 175.2)" fill="#ffd98a" opacity="0.63"/><ellipse cx="305.2" cy="173.2" rx="1.8" ry="0.8" transform="rotate(-15 305.2 173.2)" fill="#ffe9b0" opacity="0.61"/><ellipse cx="306.1" cy="176.1" rx="1.2" ry="0.8" transform="rotate(-28 306.1 176.1)" fill="#ffd98a" opacity="0.49"/><ellipse cx="306.0" cy="172.5" rx="1.2" ry="0.8" transform="rotate(-11 306.0 172.5)" fill="#fff3d0" opacity="0.44"/><ellipse cx="307.5" cy="170.3" rx="1.3" ry="0.8" transform="rotate(3 307.5 170.3)" fill="#fff3d0" opacity="0.46"/><ellipse cx="304.5" cy="176.7" rx="2.4" ry="0.8" transform="rotate(-20 304.5 176.7)" fill="#ffe9b0" opacity="0.68"/><ellipse cx="296.9" cy="174.5" rx="2.3" ry="0.8" transform="rotate(-55 296.9 174.5)" fill="#ffd98a" opacity="0.67"/><ellipse cx="300.8" cy="174.6" rx="2.2" ry="0.8" transform="rotate(-20 300.8 174.6)" fill="#ffe9b0" opacity="0.65"/><ellipse cx="299.8" cy="177.8" rx="2.8" ry="0.8" transform="rotate(-9 299.8 177.8)" fill="#ffe9b0" opacity="0.44"/><ellipse cx="303.1" cy="175.0" rx="1.8" ry="0.8" transform="rotate(-33 303.1 175.0)" fill="#ffcf70" opacity="0.62"/><ellipse cx="297.4" cy="179.2" rx="3.1" ry="0.8" transform="rotate(-6 297.4 179.2)" fill="#ffcf70" opacity="0.43"/><ellipse cx="156.0" cy="169.2" rx="3.1" ry="0.8" transform="rotate(-39 156.0 169.2)" fill="#ffd98a" opacity="0.59"/><ellipse cx="162.4" cy="168.7" rx="2.8" ry="0.8" transform="rotate(-42 162.4 168.7)" fill="#fff3d0" opacity="0.56"/><ellipse cx="159.4" cy="170.2" rx="2.1" ry="0.8" transform="rotate(24 159.4 170.2)" fill="#ffe9b0" opacity="0.57"/><ellipse cx="165.7" cy="168.5" rx="3.3" ry="0.8" transform="rotate(15 165.7 168.5)" fill="#ffe9b0" opacity="0.44"/><ellipse cx="158.9" cy="172.3" rx="1.1" ry="0.8" transform="rotate(-31 158.9 172.3)" fill="#ffcf70" opacity="0.47"/><ellipse cx="160.3" cy="169.7" rx="3.3" ry="0.8" transform="rotate(5 160.3 169.7)" fill="#ffcf70" opacity="0.40"/><ellipse cx="163.0" cy="170.3" rx="1.5" ry="0.8" transform="rotate(-0 163.0 170.3)" fill="#ffe9b0" opacity="0.42"/><ellipse cx="150.9" cy="171.7" rx="2.7" ry="0.8" transform="rotate(-38 150.9 171.7)" fill="#ffcf70" opacity="0.49"/><ellipse cx="156.0" cy="168.4" rx="1.9" ry="0.8" transform="rotate(21 156.0 168.4)" fill="#ffd98a" opacity="0.50"/><ellipse cx="159.3" cy="171.0" rx="2.4" ry="0.8" transform="rotate(-37 159.3 171.0)" fill="#ffd98a" opacity="0.55"/><ellipse cx="158.7" cy="169.5" rx="1.8" ry="0.8" transform="rotate(7 158.7 169.5)" fill="#fff3d0" opacity="0.36"/><ellipse cx="161.8" cy="171.3" rx="2.5" ry="0.8" transform="rotate(-11 161.8 171.3)" fill="#fff3d0" opacity="0.43"/><ellipse cx="933.8" cy="57.7" rx="1.7" ry="0.8" transform="rotate(28 933.8 57.7)" fill="#ffe9b0" opacity="0.30"/><ellipse cx="931.9" cy="59.7" rx="3.1" ry="0.8" transform="rotate(-17 931.9 59.7)" fill="#ffd98a" opacity="0.49"/><ellipse cx="932.1" cy="59.0" rx="2.6" ry="0.8" transform="rotate(-46 932.1 59.0)" fill="#ffe9b0" opacity="0.30"/><ellipse cx="927.3" cy="63.3" rx="3.3" ry="0.8" transform="rotate(-12 927.3 63.3)" fill="#ffcf70" opacity="0.32"/><ellipse cx="921.6" cy="61.6" rx="3.0" ry="0.8" transform="rotate(-37 921.6 61.6)" fill="#ffcf70" opacity="0.40"/><ellipse cx="927.6" cy="61.7" rx="2.5" ry="0.8" transform="rotate(-39 927.6 61.7)" fill="#ffcf70" opacity="0.47"/><ellipse cx="930.5" cy="59.8" rx="1.9" ry="0.8" transform="rotate(-33 930.5 59.8)" fill="#ffd98a" opacity="0.38"/><ellipse cx="930.4" cy="60.2" rx="1.4" ry="0.8" transform="rotate(-4 930.4 60.2)" fill="#ffe9b0" opacity="0.35"/><ellipse cx="934.6" cy="57.2" rx="3.0" ry="0.8" transform="rotate(-1 934.6 57.2)" fill="#fff3d0" opacity="0.31"/><ellipse cx="879.1" cy="30.7" rx="2.8" ry="0.8" transform="rotate(-4 879.1 30.7)" fill="#ffe9b0" opacity="0.40"/><ellipse cx="879.0" cy="28.8" rx="2.8" ry="0.8" transform="rotate(-22 879.0 28.8)" fill="#fff3d0" opacity="0.37"/><ellipse cx="878.5" cy="30.7" rx="1.5" ry="0.8" transform="rotate(28 878.5 30.7)" fill="#ffd98a" opacity="0.40"/><ellipse cx="874.6" cy="32.6" rx="2.6" ry="0.8" transform="rotate(19 874.6 32.6)" fill="#ffcf70" opacity="0.48"/><ellipse cx="879.0" cy="30.5" rx="1.7" ry="0.8" transform="rotate(12 879.0 30.5)" fill="#fff3d0" opacity="0.46"/><ellipse cx="879.0" cy="33.2" rx="2.1" ry="0.8" transform="rotate(-3 879.0 33.2)" fill="#ffe9b0" opacity="0.31"/><ellipse cx="887.3" cy="26.9" rx="2.0" ry="0.8" transform="rotate(-2 887.3 26.9)" fill="#ffe9b0" opacity="0.46"/><ellipse cx="884.2" cy="30.0" rx="1.6" ry="0.8" transform="rotate(4 884.2 30.0)" fill="#fff3d0" opacity="0.48"/><ellipse cx="877.6" cy="32.3" rx="1.9" ry="0.8" transform="rotate(-23 877.6 32.3)" fill="#ffd98a" opacity="0.34"/><ellipse cx="1004.0" cy="48.4" rx="2.9" ry="0.8" transform="rotate(-27 1004.0 48.4)" fill="#ffe9b0" opacity="0.34"/><ellipse cx="1004.8" cy="48.7" rx="2.4" ry="0.8" transform="rotate(-8 1004.8 48.7)" fill="#ffcf70" opacity="0.35"/><ellipse cx="999.4" cy="51.2" rx="1.3" ry="0.8" transform="rotate(-55 999.4 51.2)" fill="#ffe9b0" opacity="0.47"/><ellipse cx="1002.3" cy="48.5" rx="1.7" ry="0.8" transform="rotate(9 1002.3 48.5)" fill="#ffcf70" opacity="0.42"/><ellipse cx="996.6" cy="50.8" rx="3.0" ry="0.8" transform="rotate(-11 996.6 50.8)" fill="#ffcf70" opacity="0.44"/><ellipse cx="999.4" cy="49.8" rx="2.3" ry="0.8" transform="rotate(-16 999.4 49.8)" fill="#ffcf70" opacity="0.37"/><ellipse cx="998.8" cy="50.5" rx="2.9" ry="0.8" transform="rotate(-58 998.8 50.5)" fill="#ffd98a" opacity="0.43"/><ellipse cx="1001.1" cy="49.4" rx="3.5" ry="0.8" transform="rotate(-26 1001.1 49.4)" fill="#ffcf70" opacity="0.35"/><ellipse cx="998.3" cy="51.3" rx="1.5" ry="0.8" transform="rotate(16 998.3 51.3)" fill="#fff3d0" opacity="0.39"/><ellipse cx="1098.0" cy="29.8" rx="2.8" ry="0.8" transform="rotate(-5 1098.0 29.8)" fill="#ffd98a" opacity="0.41"/><ellipse cx="1099.2" cy="31.0" rx="2.0" ry="0.8" transform="rotate(23 1099.2 31.0)" fill="#ffcf70" opacity="0.32"/><ellipse cx="1097.1" cy="33.4" rx="2.1" ry="0.8" transform="rotate(-26 1097.1 33.4)" fill="#ffd98a" opacity="0.33"/><ellipse cx="1100.3" cy="29.7" rx="3.4" ry="0.8" transform="rotate(-39 1100.3 29.7)" fill="#ffd98a" opacity="0.42"/><ellipse cx="1098.9" cy="29.8" rx="2.2" ry="0.8" transform="rotate(27 1098.9 29.8)" fill="#ffd98a" opacity="0.37"/><ellipse cx="1102.3" cy="28.8" rx="2.3" ry="0.8" transform="rotate(13 1102.3 28.8)" fill="#ffd98a" opacity="0.47"/><ellipse cx="1099.0" cy="30.1" rx="2.5" ry="0.8" transform="rotate(3 1099.0 30.1)" fill="#fff3d0" opacity="0.31"/><ellipse cx="1101.1" cy="31.1" rx="2.5" ry="0.8" transform="rotate(25 1101.1 31.1)" fill="#ffe9b0" opacity="0.45"/><ellipse cx="1096.1" cy="31.8" rx="2.2" ry="0.8" transform="rotate(-44 1096.1 31.8)" fill="#ffd98a" opacity="0.42"/><circle cx="694.3" cy="126.3" r="1.1" fill="#f2bd62" opacity="0.33"/><circle cx="541.6" cy="75.0" r="0.7" fill="#f2bd62" opacity="0.43"/><circle cx="1210.3" cy="119.3" r="0.8" fill="#f2bd62" opacity="0.59"/><circle cx="861.4" cy="72.0" r="1.0" fill="#f2bd62" opacity="0.52"/><circle cx="46.0" cy="153.2" r="1.0" fill="#f2bd62" opacity="0.70"/><circle cx="568.5" cy="101.3" r="1.0" fill="#f2bd62" opacity="0.48"/><circle cx="695.6" cy="132.0" r="1.0" fill="#f2bd62" opacity="0.39"/><circle cx="734.4" cy="15.4" r="0.9" fill="#f2bd62" opacity="0.94"/><circle cx="726.2" cy="106.4" r="1.0" fill="#f2bd62" opacity="0.47"/><circle cx="760.8" cy="84.4" r="0.7" fill="#f2bd62" opacity="0.59"/><circle cx="1017.0" cy="65.3" r="1.1" fill="#f2bd62" opacity="0.89"/><circle cx="887.1" cy="145.7" r="1.2" fill="#f2bd62" opacity="0.84"/><circle cx="1124.4" cy="176.0" r="0.8" fill="#f2bd62" opacity="0.36"/><circle cx="176.5" cy="186.5" r="0.7" fill="#f2bd62" opacity="0.45"/><circle cx="168.9" cy="107.9" r="0.9" fill="#f2bd62" opacity="0.80"/><circle cx="1455.5" cy="72.5" r="0.8" fill="#f2bd62" opacity="0.57"/><circle cx="890.6" cy="77.8" r="1.2" fill="#f2bd62" opacity="0.67"/><circle cx="552.3" cy="166.2" r="1.0" fill="#f2bd62" opacity="0.63"/><circle cx="310.7" cy="69.9" r="0.9" fill="#f2bd62" opacity="0.86"/><circle cx="1325.2" cy="2.0" r="0.6" fill="#f2bd62" opacity="0.49"/><circle cx="573.4" cy="48.7" r="1.2" fill="#f2bd62" opacity="0.86"/><circle cx="407.1" cy="42.7" r="0.6" fill="#f2bd62" opacity="0.34"/><circle cx="1503.7" cy="72.2" r="1.0" fill="#f2bd62" opacity="0.88"/><circle cx="1590.0" cy="140.2" r="0.9" fill="#f2bd62" opacity="0.62"/><circle cx="319.7" cy="64.3" r="1.3" fill="#f2bd62" opacity="0.33"/><circle cx="1616.7" cy="39.0" r="1.1" fill="#f2bd62" opacity="0.54"/><circle cx="1579.5" cy="72.2" r="1.0" fill="#f2bd62" opacity="0.41"/><circle cx="854.2" cy="29.6" r="1.1" fill="#f2bd62" opacity="0.69"/><circle cx="1501.7" cy="111.2" r="0.6" fill="#f2bd62" opacity="0.34"/><circle cx="462.8" cy="176.3" r="0.7" fill="#f2bd62" opacity="0.86"/><circle cx="1395.2" cy="9.9" r="0.9" fill="#f2bd62" opacity="0.43"/><circle cx="20.9" cy="163.1" r="0.9" fill="#f2bd62" opacity="0.32"/><circle cx="268.9" cy="63.4" r="1.1" fill="#f2bd62" opacity="0.82"/><circle cx="616.4" cy="70.8" r="0.8" fill="#f2bd62" opacity="0.54"/><circle cx="503.9" cy="102.3" r="0.6" fill="#f2bd62" opacity="0.80"/><circle cx="128.4" cy="187.4" r="0.9" fill="#f2bd62" opacity="0.63"/><circle cx="748.5" cy="37.7" r="0.6" fill="#f2bd62" opacity="0.34"/><circle cx="412.0" cy="17.7" r="0.9" fill="#f2bd62" opacity="0.77"/><circle cx="53.5" cy="144.4" r="0.8" fill="#f2bd62" opacity="0.94"/><circle cx="784.2" cy="67.4" r="0.5" fill="#f2bd62" opacity="0.83"/><circle cx="490.4" cy="101.0" r="0.5" fill="#f2bd62" opacity="0.74"/><circle cx="1170.9" cy="71.0" r="0.5" fill="#f2bd62" opacity="0.94"/><circle cx="1120.2" cy="145.4" r="1.1" fill="#f2bd62" opacity="0.42"/><circle cx="1566.2" cy="156.5" r="1.0" fill="#f2bd62" opacity="0.57"/><circle cx="789.8" cy="180.7" r="0.8" fill="#f2bd62" opacity="0.94"/><circle cx="1180.8" cy="81.5" r="0.7" fill="#f2bd62" opacity="0.76"/><circle cx="1336.1" cy="95.6" r="0.6" fill="#f2bd62" opacity="0.59"/><circle cx="1091.2" cy="167.3" r="1.0" fill="#f2bd62" opacity="0.68"/><circle cx="990.2" cy="144.9" r="0.9" fill="#f2bd62" opacity="0.33"/><circle cx="1184.5" cy="114.2" r="1.2" fill="#f2bd62" opacity="0.92"/><circle cx="507.4" cy="158.3" r="1.0" fill="#f2bd62" opacity="0.84"/><circle cx="1255.6" cy="98.4" r="1.2" fill="#f2bd62" opacity="0.86"/><circle cx="249.8" cy="177.0" r="1.0" fill="#f2bd62" opacity="0.36"/><circle cx="1293.0" cy="74.3" r="1.3" fill="#f2bd62" opacity="0.32"/><circle cx="1076.7" cy="95.9" r="1.0" fill="#f2bd62" opacity="0.67"/><circle cx="431.2" cy="55.3" r="0.6" fill="#f2bd62" opacity="0.56"/><circle cx="863.9" cy="23.1" r="1.2" fill="#f2bd62" opacity="0.70"/><circle cx="172.5" cy="122.4" r="0.8" fill="#f2bd62" opacity="0.57"/><circle cx="576.5" cy="26.2" r="1.2" fill="#f2bd62" opacity="0.37"/><circle cx="331.5" cy="113.0" r="1.2" fill="#f2bd62" opacity="0.33"/><circle cx="914.4" cy="134.3" r="1.1" fill="#f2bd62" opacity="0.80"/><circle cx="1004.0" cy="175.2" r="1.0" fill="#f2bd62" opacity="0.48"/><circle cx="1217.5" cy="25.1" r="0.8" fill="#f2bd62" opacity="0.40"/><circle cx="67.0" cy="117.7" r="1.2" fill="#f2bd62" opacity="0.49"/><circle cx="304.1" cy="128.1" r="1.0" fill="#f2bd62" opacity="0.68"/><circle cx="1071.6" cy="7.0" r="0.9" fill="#f2bd62" opacity="0.92"/><circle cx="558.4" cy="172.5" r="0.7" fill="#f2bd62" opacity="0.41"/><circle cx="334.4" cy="91.4" r="1.1" fill="#f2bd62" opacity="0.79"/><circle cx="1350.3" cy="115.6" r="1.2" fill="#f2bd62" opacity="0.85"/><circle cx="461.7" cy="25.4" r="0.5" fill="#f2bd62" opacity="0.51"/><circle cx="265.6" cy="101.1" r="0.7" fill="#f2bd62" opacity="0.68"/><circle cx="517.4" cy="152.2" r="1.0" fill="#f2bd62" opacity="0.91"/><circle cx="1203.2" cy="178.1" r="0.9" fill="#f2bd62" opacity="0.44"/><circle cx="348.5" cy="178.3" r="1.1" fill="#f2bd62" opacity="0.66"/><circle cx="1309.1" cy="149.5" r="0.5" fill="#f2bd62" opacity="0.39"/><circle cx="218.4" cy="134.2" r="0.8" fill="#f2bd62" opacity="0.79"/><circle cx="1153.4" cy="59.1" r="1.2" fill="#f2bd62" opacity="0.60"/><circle cx="1226.3" cy="3.6" r="1.2" fill="#f2bd62" opacity="0.88"/><circle cx="820.0" cy="126.9" r="1.1" fill="#f2bd62" opacity="0.62"/><circle cx="263.9" cy="161.6" r="1.1" fill="#f2bd62" opacity="0.51"/><circle cx="1653.4" cy="138.2" r="0.6" fill="#f2bd62" opacity="0.41"/><circle cx="1459.9" cy="136.6" r="0.8" fill="#f2bd62" opacity="0.45"/><circle cx="716.5" cy="56.4" r="0.9" fill="#f2bd62" opacity="0.42"/><circle cx="1215.6" cy="95.7" r="0.6" fill="#f2bd62" opacity="0.55"/><circle cx="369.2" cy="62.5" r="1.1" fill="#f2bd62" opacity="0.53"/><circle cx="1297.5" cy="99.5" r="1.0" fill="#f2bd62" opacity="0.94"/><circle cx="867.1" cy="181.5" r="0.7" fill="#f2bd62" opacity="0.74"/><circle cx="1189.7" cy="4.7" r="1.1" fill="#f2bd62" opacity="0.57"/><circle cx="947.4" cy="120.4" r="1.1" fill="#f2bd62" opacity="0.33"/><circle cx="783.2" cy="175.3" r="1.0" fill="#f2bd62" opacity="0.59"/><circle cx="626.8" cy="60.4" r="0.6" fill="#f2bd62" opacity="0.35"/><circle cx="1665.7" cy="32.5" r="1.1" fill="#f2bd62" opacity="0.46"/><circle cx="959.4" cy="56.0" r="1.1" fill="#f2bd62" opacity="0.94"/><circle cx="1396.8" cy="144.2" r="0.9" fill="#f2bd62" opacity="0.72"/><circle cx="1000.7" cy="59.4" r="1.2" fill="#f2bd62" opacity="0.44"/><circle cx="732.1" cy="33.0" r="1.0" fill="#f2bd62" opacity="0.35"/><circle cx="1237.1" cy="83.7" r="1.1" fill="#f2bd62" opacity="0.77"/><circle cx="1575.7" cy="109.8" r="0.6" fill="#f2bd62" opacity="0.78"/><circle cx="718.8" cy="14.1" r="0.6" fill="#f2bd62" opacity="0.57"/><circle cx="1188.2" cy="176.2" r="0.8" fill="#f2bd62" opacity="0.92"/><circle cx="1310.6" cy="68.5" r="0.8" fill="#f2bd62" opacity="0.90"/><circle cx="126.6" cy="186.0" r="0.5" fill="#f2bd62" opacity="0.85"/><circle cx="876.7" cy="149.9" r="1.2" fill="#f2bd62" opacity="0.69"/><circle cx="1332.0" cy="106.4" r="0.9" fill="#f2bd62" opacity="0.81"/><circle cx="655.5" cy="80.7" r="0.8" fill="#f2bd62" opacity="0.67"/><circle cx="1374.1" cy="116.7" r="0.5" fill="#f2bd62" opacity="0.34"/><circle cx="885.0" cy="103.3" r="0.6" fill="#f2bd62" opacity="0.37"/><circle cx="392.2" cy="132.0" r="1.0" fill="#f2bd62" opacity="0.37"/><circle cx="522.9" cy="92.4" r="1.0" fill="#f2bd62" opacity="0.57"/><circle cx="624.2" cy="4.6" r="0.6" fill="#f2bd62" opacity="0.76"/><circle cx="1394.0" cy="138.6" r="0.9" fill="#f2bd62" opacity="0.80"/><circle cx="234.5" cy="149.6" r="0.5" fill="#f2bd62" opacity="0.69"/><circle cx="815.0" cy="75.5" r="1.1" fill="#f2bd62" opacity="0.80"/><circle cx="978.7" cy="110.7" r="0.5" fill="#f2bd62" opacity="0.36"/><circle cx="481.7" cy="35.6" r="0.7" fill="#f2bd62" opacity="0.35"/><circle cx="177.8" cy="94.9" r="1.2" fill="#f2bd62" opacity="0.73"/><circle cx="1245.7" cy="5.3" r="0.9" fill="#f2bd62" opacity="0.93"/><circle cx="1466.7" cy="8.5" r="0.7" fill="#f2bd62" opacity="0.47"/><circle cx="397.1" cy="22.5" r="0.8" fill="#f2bd62" opacity="0.92"/><circle cx="1465.4" cy="145.9" r="1.2" fill="#f2bd62" opacity="0.46"/><circle cx="934.2" cy="51.8" r="0.8" fill="#f2bd62" opacity="0.33"/><circle cx="1192.1" cy="72.6" r="0.7" fill="#f2bd62" opacity="0.64"/><circle cx="612.5" cy="38.3" r="1.3" fill="#f2bd62" opacity="0.71"/><circle cx="1406.8" cy="186.3" r="0.6" fill="#f2bd62" opacity="0.66"/><circle cx="555.9" cy="31.9" r="1.0" fill="#f2bd62" opacity="0.49"/><circle cx="1060.5" cy="115.6" r="1.0" fill="#f2bd62" opacity="0.57"/><circle cx="125.0" cy="179.9" r="0.5" fill="#f2bd62" opacity="0.40"/><circle cx="682.6" cy="174.9" r="0.9" fill="#f2bd62" opacity="0.52"/><circle cx="1053.4" cy="186.0" r="1.3" fill="#f2bd62" opacity="0.90"/><circle cx="1603.5" cy="52.0" r="0.6" fill="#f2bd62" opacity="0.73"/><circle cx="1371.5" cy="50.5" r="0.7" fill="#f2bd62" opacity="0.45"/><circle cx="930.7" cy="114.7" r="0.7" fill="#f2bd62" opacity="0.82"/><circle cx="836.0" cy="83.3" r="0.5" fill="#f2bd62" opacity="0.60"/><circle cx="577.3" cy="30.5" r="1.2" fill="#f2bd62" opacity="0.85"/><circle cx="412.1" cy="37.6" r="1.1" fill="#f2bd62" opacity="0.63"/><circle cx="1526.8" cy="175.2" r="1.0" fill="#f2bd62" opacity="0.52"/><circle cx="873.6" cy="111.6" r="1.2" fill="#f2bd62" opacity="0.49"/><circle cx="704.6" cy="67.9" r="1.1" fill="#f2bd62" opacity="0.49"/><circle cx="651.2" cy="4.6" r="1.2" fill="#f2bd62" opacity="0.41"/><circle cx="1618.0" cy="10.6" r="0.5" fill="#f2bd62" opacity="0.52"/><circle cx="626.1" cy="170.4" r="1.3" fill="#f2bd62" opacity="0.38"/><circle cx="721.5" cy="46.8" r="1.0" fill="#f2bd62" opacity="0.43"/><circle cx="456.2" cy="91.9" r="1.2" fill="#f2bd62" opacity="0.92"/><circle cx="1041.0" cy="138.0" r="0.7" fill="#f2bd62" opacity="0.57"/><circle cx="823.4" cy="43.8" r="0.6" fill="#f2bd62" opacity="0.31"/><circle cx="993.3" cy="106.1" r="0.8" fill="#f2bd62" opacity="0.73"/><circle cx="1268.5" cy="48.7" r="1.0" fill="#f2bd62" opacity="0.81"/><circle cx="392.1" cy="153.7" r="0.6" fill="#f2bd62" opacity="0.46"/><circle cx="450.2" cy="109.3" r="0.8" fill="#f2bd62" opacity="0.61"/><circle cx="1388.8" cy="27.4" r="1.0" fill="#f2bd62" opacity="0.34"/><circle cx="93.5" cy="169.2" r="0.7" fill="#f2bd62" opacity="0.80"/><circle cx="1619.6" cy="119.5" r="1.2" fill="#f2bd62" opacity="0.93"/><circle cx="1227.3" cy="157.4" r="1.1" fill="#f2bd62" opacity="0.86"/><circle cx="540.4" cy="135.0" r="1.1" fill="#f2bd62" opacity="0.84"/><circle cx="1534.6" cy="145.6" r="1.1" fill="#f2bd62" opacity="0.60"/><circle cx="1440.9" cy="69.2" r="0.6" fill="#f2bd62" opacity="0.38"/><circle cx="1000.2" cy="4.7" r="1.3" fill="#f2bd62" opacity="0.37"/><circle cx="263.8" cy="131.7" r="0.5" fill="#f2bd62" opacity="0.74"/><circle cx="732.4" cy="120.2" r="1.1" fill="#f2bd62" opacity="0.53"/><circle cx="1291.4" cy="94.9" r="1.2" fill="#f2bd62" opacity="0.41"/><circle cx="866.4" cy="181.7" r="1.0" fill="#f2bd62" opacity="0.63"/><circle cx="346.0" cy="58.4" r="0.6" fill="#f2bd62" opacity="0.57"/><circle cx="890.7" cy="34.3" r="0.5" fill="#f2bd62" opacity="0.69"/><circle cx="915.1" cy="74.9" r="0.6" fill="#f2bd62" opacity="0.36"/><circle cx="455.5" cy="163.4" r="0.6" fill="#f2bd62" opacity="0.37"/><circle cx="929.4" cy="102.3" r="1.2" fill="#f2bd62" opacity="0.84"/><circle cx="422.5" cy="84.2" r="1.1" fill="#f2bd62" opacity="0.59"/><circle cx="931.1" cy="4.8" r="0.5" fill="#f2bd62" opacity="0.53"/><circle cx="297.4" cy="83.7" r="0.7" fill="#f2bd62" opacity="0.67"/><circle cx="348.1" cy="29.8" r="1.2" fill="#f2bd62" opacity="0.87"/><circle cx="893.5" cy="66.8" r="0.9" fill="#f2bd62" opacity="0.86"/><circle cx="745.9" cy="58.2" r="1.3" fill="#f2bd62" opacity="0.50"/><circle cx="824.3" cy="130.4" r="0.7" fill="#f2bd62" opacity="0.95"/><circle cx="255.6" cy="184.0" r="1.3" fill="#f2bd62" opacity="0.51"/><circle cx="1657.8" cy="18.6" r="0.8" fill="#f2bd62" opacity="0.62"/><circle cx="1157.1" cy="106.4" r="0.6" fill="#f2bd62" opacity="0.70"/><circle cx="581.1" cy="150.2" r="0.9" fill="#f2bd62" opacity="0.92"/><circle cx="1604.4" cy="116.8" r="0.9" fill="#f2bd62" opacity="0.56"/><circle cx="500.4" cy="143.8" r="0.9" fill="#f2bd62" opacity="0.77"/><circle cx="519.0" cy="89.1" r="1.1" fill="#f2bd62" opacity="0.59"/><circle cx="390.2" cy="90.3" r="1.0" fill="#f2bd62" opacity="0.72"/><circle cx="794.3" cy="167.0" r="0.7" fill="#f2bd62" opacity="0.85"/><circle cx="473.6" cy="128.3" r="0.7" fill="#f2bd62" opacity="0.30"/><circle cx="1640.4" cy="163.5" r="0.8" fill="#f2bd62" opacity="0.86"/><circle cx="100.6" cy="109.8" r="1.0" fill="#f2bd62" opacity="0.40"/><circle cx="928.0" cy="78.1" r="0.9" fill="#f2bd62" opacity="0.36"/><circle cx="469.9" cy="120.6" r="1.0" fill="#f2bd62" opacity="0.50"/><circle cx="1244.2" cy="6.5" r="0.5" fill="#f2bd62" opacity="0.51"/><circle cx="1605.1" cy="141.1" r="0.5" fill="#f2bd62" opacity="0.65"/><circle cx="1381.0" cy="143.5" r="1.2" fill="#f2bd62" opacity="0.42"/><circle cx="1014.7" cy="101.2" r="0.6" fill="#f2bd62" opacity="0.83"/><circle cx="202.4" cy="90.7" r="0.8" fill="#f2bd62" opacity="0.50"/><circle cx="165.6" cy="91.6" r="0.5" fill="#f2bd62" opacity="0.93"/><circle cx="873.7" cy="98.3" r="1.2" fill="#f2bd62" opacity="0.45"/><circle cx="1507.8" cy="136.6" r="0.7" fill="#f2bd62" opacity="0.75"/><circle cx="1606.4" cy="179.2" r="1.1" fill="#f2bd62" opacity="0.61"/><circle cx="394.5" cy="158.0" r="0.7" fill="#f2bd62" opacity="0.78"/><circle cx="1243.8" cy="81.1" r="1.0" fill="#f2bd62" opacity="0.84"/><circle cx="1008.5" cy="96.8" r="1.2" fill="#f2bd62" opacity="0.76"/><circle cx="929.9" cy="160.0" r="1.2" fill="#f2bd62" opacity="0.53"/><circle cx="1598.4" cy="86.5" r="1.0" fill="#f2bd62" opacity="0.60"/><circle cx="1622.6" cy="10.5" r="1.2" fill="#f2bd62" opacity="0.40"/><circle cx="1603.4" cy="156.0" r="0.5" fill="#f2bd62" opacity="0.48"/><circle cx="76.5" cy="122.3" r="1.0" fill="#f2bd62" opacity="0.36"/><circle cx="891.1" cy="86.0" r="0.6" fill="#f2bd62" opacity="0.58"/><circle cx="1647.7" cy="41.8" r="0.6" fill="#f2bd62" opacity="0.73"/><circle cx="563.3" cy="109.2" r="0.5" fill="#f2bd62" opacity="0.77"/><circle cx="1163.1" cy="96.0" r="1.2" fill="#f2bd62" opacity="0.89"/><circle cx="1513.4" cy="187.6" r="1.2" fill="#f2bd62" opacity="0.34"/><circle cx="1256.3" cy="176.7" r="1.3" fill="#f2bd62" opacity="0.47"/><circle cx="1543.0" cy="176.0" r="1.0" fill="#f2bd62" opacity="0.70"/><circle cx="745.9" cy="66.7" r="0.8" fill="#f2bd62" opacity="0.82"/><circle cx="1091.4" cy="67.6" r="1.0" fill="#f2bd62" opacity="0.78"/><circle cx="1425.8" cy="24.8" r="0.7" fill="#f2bd62" opacity="0.80"/><circle cx="360.1" cy="131.4" r="1.2" fill="#f2bd62" opacity="0.65"/><circle cx="809.1" cy="40.4" r="1.2" fill="#f2bd62" opacity="0.81"/><circle cx="568.2" cy="102.0" r="1.2" fill="#f2bd62" opacity="0.58"/><circle cx="567.5" cy="98.0" r="1.2" fill="#f2bd62" opacity="0.79"/><circle cx="237.2" cy="91.8" r="1.2" fill="#f2bd62" opacity="0.73"/><circle cx="1630.4" cy="129.5" r="0.9" fill="#f2bd62" opacity="0.43"/><circle cx="696.3" cy="132.4" r="0.8" fill="#f2bd62" opacity="0.62"/><circle cx="10.1" cy="155.8" r="0.6" fill="#f2bd62" opacity="0.63"/><circle cx="435.8" cy="116.9" r="0.6" fill="#f2bd62" opacity="0.38"/><circle cx="946.5" cy="109.3" r="0.6" fill="#f2bd62" opacity="0.72"/><circle cx="1285.0" cy="132.3" r="0.9" fill="#f2bd62" opacity="0.36"/><circle cx="868.1" cy="78.8" r="0.8" fill="#f2bd62" opacity="0.34"/><circle cx="96.7" cy="103.1" r="0.9" fill="#f2bd62" opacity="0.67"/><circle cx="312.4" cy="45.8" r="0.5" fill="#f2bd62" opacity="0.81"/><circle cx="451.3" cy="45.8" r="1.1" fill="#f2bd62" opacity="0.38"/><circle cx="773.1" cy="168.1" r="1.2" fill="#f2bd62" opacity="0.34"/><circle cx="579.0" cy="51.9" r="1.0" fill="#f2bd62" opacity="0.87"/><circle cx="916.8" cy="147.8" r="0.6" fill="#f2bd62" opacity="0.41"/><circle cx="879.7" cy="114.3" r="0.9" fill="#f2bd62" opacity="0.44"/><circle cx="1641.7" cy="151.5" r="1.0" fill="#f2bd62" opacity="0.80"/><circle cx="1217.7" cy="107.7" r="0.7" fill="#f2bd62" opacity="0.72"/><circle cx="1184.7" cy="54.2" r="0.5" fill="#f2bd62" opacity="0.65"/><circle cx="515.7" cy="158.2" r="1.2" fill="#f2bd62" opacity="0.33"/><circle cx="1589.7" cy="73.9" r="1.2" fill="#f2bd62" opacity="0.35"/><circle cx="988.1" cy="172.5" r="0.5" fill="#f2bd62" opacity="0.34"/><circle cx="1611.1" cy="67.6" r="1.0" fill="#f2bd62" opacity="0.73"/><circle cx="429.8" cy="7.2" r="0.7" fill="#f2bd62" opacity="0.89"/><circle cx="310.0" cy="44.8" r="1.2" fill="#f2bd62" opacity="0.64"/><circle cx="1018.6" cy="54.3" r="0.6" fill="#f2bd62" opacity="0.66"/><circle cx="1362.5" cy="36.5" r="0.9" fill="#f2bd62" opacity="0.64"/><circle cx="1031.6" cy="57.3" r="1.1" fill="#f2bd62" opacity="0.42"/><circle cx="1421.6" cy="155.4" r="0.8" fill="#f2bd62" opacity="0.47"/><circle cx="793.2" cy="127.1" r="1.1" fill="#f2bd62" opacity="0.71"/><circle cx="1264.8" cy="98.2" r="0.9" fill="#f2bd62" opacity="0.30"/><circle cx="331.1" cy="102.7" r="1.2" fill="#f2bd62" opacity="0.90"/><circle cx="935.4" cy="106.7" r="0.8" fill="#f2bd62" opacity="0.83"/><circle cx="525.9" cy="133.4" r="0.8" fill="#f2bd62" opacity="0.38"/><circle cx="868.7" cy="42.1" r="0.5" fill="#f2bd62" opacity="0.68"/><circle cx="964.4" cy="63.2" r="1.2" fill="#f2bd62" opacity="0.85"/><circle cx="1569.9" cy="56.6" r="1.2" fill="#f2bd62" opacity="0.56"/><circle cx="555.5" cy="48.1" r="1.2" fill="#f2bd62" opacity="0.45"/><circle cx="635.9" cy="146.1" r="0.5" fill="#f2bd62" opacity="0.89"/><circle cx="1057.1" cy="102.6" r="0.8" fill="#f2bd62" opacity="0.43"/><circle cx="1593.5" cy="43.6" r="0.9" fill="#f2bd62" opacity="0.49"/><circle cx="288.5" cy="97.8" r="1.1" fill="#f2bd62" opacity="0.37"/><circle cx="222.4" cy="102.1" r="0.6" fill="#f2bd62" opacity="0.69"/><circle cx="616.0" cy="17.5" r="1.1" fill="#f2bd62" opacity="0.48"/><circle cx="1551.5" cy="155.7" r="1.0" fill="#f2bd62" opacity="0.91"/><circle cx="516.0" cy="136.8" r="0.8" fill="#f2bd62" opacity="0.53"/><circle cx="630.6" cy="157.5" r="0.6" fill="#f2bd62" opacity="0.76"/><circle cx="1502.5" cy="130.3" r="1.2" fill="#f2bd62" opacity="0.69"/><circle cx="1236.5" cy="53.4" r="1.2" fill="#f2bd62" opacity="0.52"/><circle cx="1364.1" cy="123.1" r="1.1" fill="#f2bd62" opacity="0.91"/><circle cx="849.3" cy="51.8" r="0.7" fill="#f2bd62" opacity="0.72"/><circle cx="1396.6" cy="44.5" r="0.8" fill="#f2bd62" opacity="0.75"/><circle cx="896.2" cy="11.5" r="1.0" fill="#f2bd62" opacity="0.35"/><circle cx="1131.1" cy="4.1" r="0.9" fill="#f2bd62" opacity="0.66"/><circle cx="343.3" cy="71.1" r="0.6" fill="#f2bd62" opacity="0.87"/><circle cx="1654.3" cy="180.2" r="1.2" fill="#f2bd62" opacity="0.70"/><circle cx="1508.0" cy="187.2" r="0.7" fill="#f2bd62" opacity="0.34"/><circle cx="1110.3" cy="76.2" r="1.0" fill="#f2bd62" opacity="0.52"/><circle cx="792.6" cy="92.1" r="0.5" fill="#f2bd62" opacity="0.86"/><circle cx="1296.6" cy="25.9" r="0.9" fill="#f2bd62" opacity="0.94"/><circle cx="945.6" cy="87.0" r="0.6" fill="#f2bd62" opacity="0.78"/><circle cx="1496.9" cy="134.3" r="0.7" fill="#f2bd62" opacity="0.71"/><circle cx="1547.9" cy="45.1" r="1.2" fill="#f2bd62" opacity="0.93"/><circle cx="1331.4" cy="41.6" r="1.1" fill="#f2bd62" opacity="0.82"/><circle cx="919.4" cy="9.4" r="1.2" fill="#f2bd62" opacity="0.83"/><circle cx="722.1" cy="47.8" r="0.9" fill="#f2bd62" opacity="0.88"/><circle cx="1556.6" cy="182.7" r="1.1" fill="#f2bd62" opacity="0.67"/><circle cx="243.5" cy="79.3" r="0.6" fill="#f2bd62" opacity="0.70"/><circle cx="1548.6" cy="155.5" r="1.3" fill="#f2bd62" opacity="0.33"/><circle cx="220.9" cy="135.4" r="0.7" fill="#f2bd62" opacity="0.35"/><circle cx="295.1" cy="77.0" r="0.8" fill="#f2bd62" opacity="0.86"/><circle cx="1174.7" cy="177.4" r="0.8" fill="#f2bd62" opacity="0.83"/><circle cx="1598.4" cy="176.3" r="1.0" fill="#f2bd62" opacity="0.35"/><circle cx="1181.4" cy="109.6" r="1.1" fill="#f2bd62" opacity="0.85"/><circle cx="914.9" cy="105.4" r="1.0" fill="#f2bd62" opacity="0.61"/><circle cx="1446.8" cy="175.0" r="0.5" fill="#f2bd62" opacity="0.67"/><circle cx="1128.5" cy="127.8" r="1.2" fill="#f2bd62" opacity="0.62"/><circle cx="499.4" cy="104.1" r="1.3" fill="#f2bd62" opacity="0.42"/><circle cx="471.6" cy="9.8" r="0.8" fill="#f2bd62" opacity="0.89"/><circle cx="532.5" cy="123.2" r="0.7" fill="#f2bd62" opacity="0.73"/><circle cx="330.5" cy="40.6" r="1.1" fill="#f2bd62" opacity="0.88"/><circle cx="1592.8" cy="25.1" r="0.8" fill="#f2bd62" opacity="0.40"/><circle cx="329.9" cy="153.5" r="0.8" fill="#f2bd62" opacity="0.50"/><circle cx="1443.9" cy="79.3" r="1.3" fill="#f2bd62" opacity="0.47"/><circle cx="621.0" cy="103.3" r="1.1" fill="#f2bd62" opacity="0.86"/><circle cx="1299.6" cy="29.3" r="0.8" fill="#f2bd62" opacity="0.79"/><circle cx="1595.4" cy="69.7" r="1.1" fill="#f2bd62" opacity="0.45"/><circle cx="1580.8" cy="69.3" r="1.2" fill="#f2bd62" opacity="0.65"/><circle cx="1481.2" cy="35.4" r="1.3" fill="#f2bd62" opacity="0.61"/><circle cx="716.0" cy="162.2" r="1.2" fill="#f2bd62" opacity="0.50"/><circle cx="1067.0" cy="7.6" r="0.7" fill="#f2bd62" opacity="0.78"/><circle cx="545.9" cy="84.3" r="0.5" fill="#f2bd62" opacity="0.50"/><circle cx="1337.0" cy="112.1" r="0.6" fill="#f2bd62" opacity="0.61"/><circle cx="385.1" cy="172.5" r="0.5" fill="#f2bd62" opacity="0.48"/><circle cx="426.6" cy="174.5" r="1.0" fill="#f2bd62" opacity="0.83"/><circle cx="1498.1" cy="22.4" r="0.8" fill="#f2bd62" opacity="0.38"/><circle cx="1246.2" cy="87.2" r="1.2" fill="#f2bd62" opacity="0.73"/><circle cx="1586.7" cy="135.8" r="0.6" fill="#f2bd62" opacity="0.44"/><circle cx="362.0" cy="47.9" r="1.0" fill="#f2bd62" opacity="0.69"/><circle cx="1064.1" cy="47.2" r="1.1" fill="#f2bd62" opacity="0.84"/><circle cx="1201.5" cy="184.2" r="0.9" fill="#f2bd62" opacity="0.36"/><circle cx="1341.6" cy="7.7" r="1.1" fill="#f2bd62" opacity="0.75"/><circle cx="1290.9" cy="103.5" r="0.8" fill="#f2bd62" opacity="0.63"/><circle cx="944.2" cy="60.5" r="1.1" fill="#f2bd62" opacity="0.34"/><circle cx="9.0" cy="140.1" r="1.0" fill="#f2bd62" opacity="0.54"/><circle cx="734.3" cy="66.0" r="0.7" fill="#f2bd62" opacity="0.54"/><circle cx="1397.6" cy="106.3" r="1.2" fill="#f2bd62" opacity="0.76"/><circle cx="533.2" cy="107.6" r="1.1" fill="#f2bd62" opacity="0.38"/><circle cx="927.4" cy="163.7" r="0.6" fill="#f2bd62" opacity="0.62"/><circle cx="1352.2" cy="106.8" r="1.2" fill="#f2bd62" opacity="0.67"/><circle cx="350.7" cy="177.2" r="1.1" fill="#f2bd62" opacity="0.84"/><circle cx="1616.8" cy="110.4" r="1.2" fill="#f2bd62" opacity="0.94"/><circle cx="478.8" cy="124.3" r="1.3" fill="#f2bd62" opacity="0.79"/><circle cx="401.7" cy="85.7" r="0.7" fill="#f2bd62" opacity="0.51"/><circle cx="928.2" cy="84.5" r="1.1" fill="#f2bd62" opacity="0.70"/><circle cx="1393.5" cy="104.0" r="0.7" fill="#f2bd62" opacity="0.43"/><circle cx="626.6" cy="26.3" r="1.0" fill="#f2bd62" opacity="0.84"/><circle cx="695.9" cy="135.4" r="1.3" fill="#f2bd62" opacity="0.90"/><circle cx="1145.8" cy="49.5" r="1.2" fill="#f2bd62" opacity="0.76"/><circle cx="1310.8" cy="51.7" r="0.6" fill="#f2bd62" opacity="0.52"/><circle cx="261.4" cy="170.5" r="0.7" fill="#f2bd62" opacity="0.63"/><circle cx="1336.6" cy="103.1" r="0.6" fill="#f2bd62" opacity="0.65"/><circle cx="50.9" cy="134.8" r="0.9" fill="#f2bd62" opacity="0.76"/><circle cx="1572.5" cy="92.1" r="0.8" fill="#f2bd62" opacity="0.44"/><circle cx="1375.0" cy="148.8" r="1.2" fill="#f2bd62" opacity="0.82"/><circle cx="449.6" cy="43.0" r="0.9" fill="#f2bd62" opacity="0.81"/><circle cx="635.9" cy="140.3" r="0.7" fill="#f2bd62" opacity="0.60"/><circle cx="592.0" cy="145.2" r="0.8" fill="#f2bd62" opacity="0.86"/><circle cx="283.2" cy="100.2" r="1.3" fill="#f2bd62" opacity="0.41"/><circle cx="604.6" cy="75.6" r="0.9" fill="#f2bd62" opacity="0.84"/><circle cx="1059.2" cy="116.5" r="0.8" fill="#f2bd62" opacity="0.39"/><circle cx="740.8" cy="143.9" r="0.9" fill="#f2bd62" opacity="0.71"/><circle cx="162.3" cy="157.7" r="1.2" fill="#f2bd62" opacity="0.51"/><circle cx="1550.2" cy="172.1" r="0.8" fill="#f2bd62" opacity="0.89"/><circle cx="1270.5" cy="59.8" r="0.9" fill="#f2bd62" opacity="0.34"/><circle cx="1272.5" cy="42.1" r="0.9" fill="#f2bd62" opacity="0.39"/><circle cx="1373.9" cy="78.5" r="1.1" fill="#f2bd62" opacity="0.40"/><circle cx="1184.6" cy="26.7" r="0.8" fill="#f2bd62" opacity="0.51"/><circle cx="1611.9" cy="74.4" r="0.9" fill="#f2bd62" opacity="0.50"/><circle cx="1398.1" cy="27.4" r="1.2" fill="#f2bd62" opacity="0.93"/><circle cx="357.6" cy="119.3" r="0.6" fill="#f2bd62" opacity="0.69"/><circle cx="308.5" cy="173.0" r="0.6" fill="#f2bd62" opacity="0.70"/><circle cx="483.6" cy="8.4" r="0.5" fill="#f2bd62" opacity="0.83"/><circle cx="1333.3" cy="14.6" r="0.9" fill="#f2bd62" opacity="0.36"/><circle cx="238.8" cy="183.0" r="1.3" fill="#f2bd62" opacity="0.60"/><circle cx="434.7" cy="43.6" r="1.1" fill="#f2bd62" opacity="0.64"/><circle cx="361.4" cy="96.7" r="0.9" fill="#f2bd62" opacity="0.80"/><circle cx="1286.4" cy="176.1" r="1.0" fill="#f2bd62" opacity="0.94"/><circle cx="335.2" cy="31.8" r="0.7" fill="#f2bd62" opacity="0.64"/><circle cx="987.3" cy="76.5" r="0.8" fill="#f2bd62" opacity="0.83"/><circle cx="1170.5" cy="63.8" r="0.5" fill="#f2bd62" opacity="0.41"/><circle cx="910.2" cy="180.5" r="0.6" fill="#f2bd62" opacity="0.48"/><circle cx="1117.4" cy="38.9" r="1.2" fill="#f2bd62" opacity="0.79"/><circle cx="530.3" cy="75.7" r="0.5" fill="#f2bd62" opacity="0.44"/><circle cx="1152.9" cy="61.0" r="0.7" fill="#f2bd62" opacity="0.68"/><circle cx="472.3" cy="5.2" r="1.1" fill="#f2bd62" opacity="0.31"/><circle cx="675.4" cy="76.0" r="0.6" fill="#f2bd62" opacity="0.40"/><circle cx="545.5" cy="163.4" r="0.9" fill="#f2bd62" opacity="0.52"/><circle cx="558.7" cy="55.1" r="0.9" fill="#f2bd62" opacity="0.86"/><circle cx="1490.6" cy="13.8" r="1.2" fill="#f2bd62" opacity="0.42"/><circle cx="1625.0" cy="57.6" r="0.6" fill="#f2bd62" opacity="0.57"/><circle cx="499.4" cy="171.4" r="0.9" fill="#f2bd62" opacity="0.57"/><circle cx="660.9" cy="154.6" r="0.8" fill="#f2bd62" opacity="0.94"/><circle cx="1298.5" cy="23.9" r="0.6" fill="#f2bd62" opacity="0.47"/><circle cx="238.4" cy="159.3" r="0.7" fill="#f2bd62" opacity="0.79"/><circle cx="1554.9" cy="86.7" r="0.8" fill="#f2bd62" opacity="0.68"/><circle cx="1670.5" cy="64.6" r="0.8" fill="#f2bd62" opacity="0.75"/><circle cx="1500.2" cy="145.8" r="0.7" fill="#f2bd62" opacity="0.39"/><circle cx="1479.7" cy="22.9" r="1.0" fill="#f2bd62" opacity="0.43"/><circle cx="1490.4" cy="30.0" r="1.3" fill="#f2bd62" opacity="0.60"/><circle cx="493.4" cy="2.3" r="0.8" fill="#f2bd62" opacity="0.72"/><circle cx="1183.0" cy="45.8" r="1.0" fill="#f2bd62" opacity="0.33"/><circle cx="682.6" cy="47.2" r="1.1" fill="#f2bd62" opacity="0.35"/><circle cx="488.3" cy="153.3" r="0.9" fill="#f2bd62" opacity="0.56"/><circle cx="435.1" cy="100.3" r="0.6" fill="#f2bd62" opacity="0.52"/><circle cx="17.8" cy="145.0" r="1.0" fill="#f2bd62" opacity="0.30"/><circle cx="363.3" cy="137.9" r="0.7" fill="#f2bd62" opacity="0.53"/><circle cx="1293.1" cy="31.5" r="1.0" fill="#f2bd62" opacity="0.32"/><circle cx="1600.7" cy="181.0" r="1.0" fill="#f2bd62" opacity="0.92"/><circle cx="973.9" cy="6.1" r="0.6" fill="#f2bd62" opacity="0.45"/><circle cx="644.0" cy="67.9" r="0.6" fill="#f2bd62" opacity="0.76"/><circle cx="1402.6" cy="89.6" r="1.0" fill="#f2bd62" opacity="0.35"/><circle cx="785.1" cy="147.7" r="0.8" fill="#f2bd62" opacity="0.48"/><circle cx="1119.5" cy="151.8" r="0.8" fill="#f2bd62" opacity="0.63"/><circle cx="206.0" cy="148.3" r="0.7" fill="#f2bd62" opacity="0.42"/><circle cx="351.9" cy="78.6" r="1.2" fill="#f2bd62" opacity="0.55"/><circle cx="246.3" cy="86.4" r="0.6" fill="#f2bd62" opacity="0.66"/><circle cx="1609.4" cy="41.5" r="1.2" fill="#f2bd62" opacity="0.83"/><circle cx="976.1" cy="96.2" r="0.7" fill="#f2bd62" opacity="0.38"/><circle cx="955.8" cy="175.0" r="1.0" fill="#f2bd62" opacity="0.53"/><circle cx="616.4" cy="26.5" r="0.6" fill="#f2bd62" opacity="0.60"/><circle cx="1247.5" cy="1.4" r="1.2" fill="#f2bd62" opacity="0.45"/><circle cx="477.8" cy="163.4" r="0.8" fill="#f2bd62" opacity="0.59"/><circle cx="588.3" cy="27.2" r="1.3" fill="#f2bd62" opacity="0.83"/><circle cx="487.1" cy="6.8" r="0.5" fill="#f2bd62" opacity="0.89"/><circle cx="438.3" cy="12.0" r="0.9" fill="#f2bd62" opacity="0.66"/><circle cx="44.1" cy="123.3" r="0.6" fill="#f2bd62" opacity="0.83"/><circle cx="1350.2" cy="130.7" r="0.8" fill="#f2bd62" opacity="0.94"/><circle cx="375.0" cy="38.6" r="1.1" fill="#f2bd62" opacity="0.33"/><circle cx="718.3" cy="102.0" r="0.8" fill="#f2bd62" opacity="0.61"/><circle cx="823.7" cy="65.6" r="0.6" fill="#f2bd62" opacity="0.90"/><circle cx="1533.0" cy="111.4" r="0.7" fill="#f2bd62" opacity="0.38"/><circle cx="863.1" cy="4.6" r="0.9" fill="#f2bd62" opacity="0.36"/><circle cx="1613.1" cy="102.1" r="1.2" fill="#f2bd62" opacity="0.49"/><circle cx="1511.3" cy="48.7" r="1.1" fill="#f2bd62" opacity="0.71"/><circle cx="752.2" cy="107.2" r="1.1" fill="#f2bd62" opacity="0.91"/><circle cx="368.1" cy="109.4" r="0.6" fill="#f2bd62" opacity="0.44"/><circle cx="97.2" cy="165.6" r="1.2" fill="#f2bd62" opacity="0.35"/><circle cx="643.3" cy="55.3" r="1.1" fill="#f2bd62" opacity="0.94"/><circle cx="448.9" cy="22.7" r="0.7" fill="#f2bd62" opacity="0.53"/><circle cx="81.1" cy="114.8" r="1.1" fill="#f2bd62" opacity="0.34"/><circle cx="1536.5" cy="168.8" r="0.9" fill="#f2bd62" opacity="0.49"/><circle cx="541.0" cy="47.9" r="0.9" fill="#f2bd62" opacity="0.79"/><circle cx="761.4" cy="65.5" r="0.7" fill="#f2bd62" opacity="0.83"/><circle cx="1281.7" cy="140.3" r="1.0" fill="#f2bd62" opacity="0.59"/><circle cx="1525.6" cy="96.7" r="0.6" fill="#f2bd62" opacity="0.48"/><circle cx="414.3" cy="99.6" r="1.0" fill="#f2bd62" opacity="0.47"/><circle cx="1112.0" cy="157.2" r="1.3" fill="#f2bd62" opacity="0.85"/><circle cx="1370.1" cy="13.2" r="1.2" fill="#f2bd62" opacity="0.66"/><circle cx="1641.5" cy="150.0" r="1.2" fill="#f2bd62" opacity="0.74"/><circle cx="1307.6" cy="27.5" r="1.1" fill="#f2bd62" opacity="0.89"/><circle cx="778.9" cy="28.7" r="1.1" fill="#f2bd62" opacity="0.63"/><circle cx="605.0" cy="118.8" r="0.5" fill="#f2bd62" opacity="0.72"/><circle cx="1059.7" cy="12.3" r="0.7" fill="#f2bd62" opacity="0.91"/><circle cx="1117.1" cy="178.7" r="0.8" fill="#f2bd62" opacity="0.53"/><circle cx="453.8" cy="184.6" r="1.1" fill="#f2bd62" opacity="0.38"/><circle cx="689.1" cy="71.4" r="0.8" fill="#f2bd62" opacity="0.88"/><circle cx="930.4" cy="89.1" r="1.2" fill="#f2bd62" opacity="0.85"/><circle cx="1525.0" cy="47.0" r="1.1" fill="#f2bd62" opacity="0.55"/><circle cx="1557.8" cy="79.4" r="0.7" fill="#f2bd62" opacity="0.65"/><circle cx="520.5" cy="120.6" r="0.6" fill="#f2bd62" opacity="0.84"/><circle cx="320.9" cy="112.4" r="1.2" fill="#f2bd62" opacity="0.47"/><circle cx="712.7" cy="126.6" r="1.0" fill="#f2bd62" opacity="0.45"/><circle cx="84.8" cy="180.9" r="1.1" fill="#f2bd62" opacity="0.84"/><circle cx="682.2" cy="75.8" r="0.5" fill="#f2bd62" opacity="0.72"/><circle cx="1367.8" cy="187.7" r="1.1" fill="#f2bd62" opacity="0.64"/><circle cx="762.9" cy="75.9" r="0.9" fill="#f2bd62" opacity="0.42"/><circle cx="1210.9" cy="112.4" r="0.6" fill="#f2bd62" opacity="0.66"/><circle cx="149.7" cy="87.7" r="0.9" fill="#f2bd62" opacity="0.34"/><circle cx="665.2" cy="97.4" r="1.0" fill="#f2bd62" opacity="0.32"/><circle cx="1440.1" cy="137.6" r="0.6" fill="#f2bd62" opacity="0.50"/><circle cx="582.2" cy="136.9" r="0.7" fill="#f2bd62" opacity="0.68"/><circle cx="893.8" cy="155.4" r="1.0" fill="#f2bd62" opacity="0.48"/><circle cx="1552.7" cy="163.4" r="0.7" fill="#f2bd62" opacity="0.67"/><circle cx="1280.8" cy="70.0" r="1.0" fill="#f2bd62" opacity="0.39"/><circle cx="1394.4" cy="74.8" r="1.2" fill="#f2bd62" opacity="0.49"/><circle cx="381.8" cy="61.4" r="0.8" fill="#f2bd62" opacity="0.52"/><circle cx="1133.5" cy="147.1" r="1.0" fill="#f2bd62" opacity="0.88"/><circle cx="412.3" cy="66.6" r="1.3" fill="#f2bd62" opacity="0.90"/><circle cx="1392.2" cy="61.3" r="0.5" fill="#f2bd62" opacity="0.75"/><circle cx="1194.5" cy="5.6" r="1.1" fill="#f2bd62" opacity="0.48"/><circle cx="730.1" cy="4.5" r="0.6" fill="#f2bd62" opacity="0.31"/><circle cx="951.1" cy="73.4" r="0.8" fill="#f2bd62" opacity="0.67"/><circle cx="1487.6" cy="36.6" r="0.8" fill="#f2bd62" opacity="0.44"/><circle cx="1052.3" cy="34.7" r="0.8" fill="#f2bd62" opacity="0.54"/><circle cx="315.8" cy="54.0" r="1.1" fill="#f2bd62" opacity="0.37"/><circle cx="1053.4" cy="27.4" r="0.5" fill="#f2bd62" opacity="0.66"/><circle cx="1093.6" cy="74.0" r="0.7" fill="#f2bd62" opacity="0.31"/><circle cx="1416.3" cy="23.8" r="0.6" fill="#f2bd62" opacity="0.54"/><circle cx="545.3" cy="36.6" r="1.1" fill="#f2bd62" opacity="0.49"/><circle cx="118.3" cy="99.8" r="0.7" fill="#f2bd62" opacity="0.39"/><circle cx="1111.2" cy="43.7" r="1.3" fill="#f2bd62" opacity="0.63"/><circle cx="386.5" cy="64.4" r="1.0" fill="#f2bd62" opacity="0.45"/><circle cx="575.9" cy="139.2" r="1.3" fill="#f2bd62" opacity="0.72"/><circle cx="271.5" cy="47.3" r="0.7" fill="#f2bd62" opacity="0.36"/><circle cx="1334.9" cy="164.0" r="1.0" fill="#f2bd62" opacity="0.51"/><circle cx="1401.3" cy="99.8" r="1.1" fill="#f2bd62" opacity="0.55"/><circle cx="1062.9" cy="21.7" r="1.1" fill="#f2bd62" opacity="0.32"/><circle cx="694.6" cy="38.7" r="0.9" fill="#f2bd62" opacity="0.79"/><circle cx="1525.8" cy="154.1" r="1.1" fill="#f2bd62" opacity="0.82"/><circle cx="1328.0" cy="39.1" r="0.8" fill="#f2bd62" opacity="0.61"/><circle cx="1497.1" cy="157.5" r="1.3" fill="#f2bd62" opacity="0.64"/><circle cx="1668.5" cy="94.8" r="0.6" fill="#f2bd62" opacity="0.55"/><circle cx="1577.7" cy="75.2" r="0.9" fill="#f2bd62" opacity="0.43"/><circle cx="581.9" cy="143.2" r="1.2" fill="#f2bd62" opacity="0.39"/><circle cx="177.0" cy="77.4" r="0.5" fill="#f2bd62" opacity="0.38"/><circle cx="23.6" cy="139.0" r="1.0" fill="#f2bd62" opacity="0.94"/><circle cx="686.9" cy="139.0" r="0.6" fill="#f2bd62" opacity="0.33"/><circle cx="1026.2" cy="18.0" r="0.8" fill="#f2bd62" opacity="0.78"/><circle cx="485.6" cy="124.9" r="1.3" fill="#f2bd62" opacity="0.76"/><circle cx="436.4" cy="26.9" r="0.6" fill="#f2bd62" opacity="0.66"/><circle cx="501.7" cy="167.3" r="1.0" fill="#f2bd62" opacity="0.57"/><circle cx="1090.2" cy="175.7" r="0.8" fill="#f2bd62" opacity="0.67"/><circle cx="1449.1" cy="162.3" r="0.9" fill="#f2bd62" opacity="0.41"/><circle cx="1640.2" cy="87.7" r="1.2" fill="#f2bd62" opacity="0.90"/><circle cx="1673.7" cy="94.9" r="1.0" fill="#f2bd62" opacity="0.48"/><circle cx="923.6" cy="173.9" r="1.1" fill="#f2bd62" opacity="0.35"/><circle cx="331.7" cy="177.4" r="0.7" fill="#f2bd62" opacity="0.68"/><circle cx="478.1" cy="168.2" r="1.2" fill="#f2bd62" opacity="0.50"/><circle cx="1221.4" cy="120.6" r="0.6" fill="#f2bd62" opacity="0.48"/><circle cx="1065.1" cy="137.5" r="0.9" fill="#f2bd62" opacity="0.69"/><circle cx="481.4" cy="43.8" r="1.0" fill="#f2bd62" opacity="0.57"/><circle cx="49.4" cy="144.2" r="1.2" fill="#f2bd62" opacity="0.93"/><circle cx="1048.7" cy="73.0" r="1.0" fill="#f2bd62" opacity="0.60"/><circle cx="1152.5" cy="84.2" r="0.6" fill="#f2bd62" opacity="0.86"/><circle cx="545.3" cy="127.7" r="0.8" fill="#f2bd62" opacity="0.41"/><circle cx="139.7" cy="148.6" r="0.7" fill="#f2bd62" opacity="0.56"/><circle cx="365.8" cy="105.9" r="0.8" fill="#f2bd62" opacity="0.39"/><circle cx="1194.5" cy="62.1" r="1.0" fill="#f2bd62" opacity="0.58"/><circle cx="761.3" cy="30.5" r="1.3" fill="#f2bd62" opacity="0.50"/><circle cx="496.7" cy="153.7" r="0.9" fill="#f2bd62" opacity="0.44"/><circle cx="583.4" cy="55.9" r="1.0" fill="#f2bd62" opacity="0.90"/><circle cx="904.6" cy="172.6" r="0.7" fill="#f2bd62" opacity="0.81"/><circle cx="1088.6" cy="114.6" r="0.5" fill="#f2bd62" opacity="0.90"/><circle cx="82.4" cy="128.1" r="0.5" fill="#f2bd62" opacity="0.30"/><circle cx="223.2" cy="65.6" r="0.6" fill="#f2bd62" opacity="0.60"/><circle cx="478.0" cy="71.5" r="0.6" fill="#f2bd62" opacity="0.85"/><circle cx="1203.0" cy="166.0" r="0.9" fill="#f2bd62" opacity="0.53"/><circle cx="114.7" cy="114.2" r="1.0" fill="#f2bd62" opacity="0.67"/><circle cx="1440.7" cy="121.1" r="1.1" fill="#f2bd62" opacity="0.56"/><circle cx="211.1" cy="107.0" r="1.2" fill="#f2bd62" opacity="0.49"/><circle cx="1658.1" cy="136.4" r="1.0" fill="#f2bd62" opacity="0.53"/><circle cx="1350.7" cy="187.6" r="0.6" fill="#f2bd62" opacity="0.33"/><circle cx="414.9" cy="105.1" r="0.8" fill="#f2bd62" opacity="0.79"/><circle cx="1339.7" cy="1.2" r="1.1" fill="#f2bd62" opacity="0.71"/><circle cx="381.0" cy="136.6" r="0.6" fill="#f2bd62" opacity="0.51"/><circle cx="976.7" cy="18.1" r="1.0" fill="#f2bd62" opacity="0.52"/><circle cx="1168.7" cy="23.2" r="1.0" fill="#f2bd62" opacity="0.37"/><circle cx="709.6" cy="31.1" r="0.9" fill="#f2bd62" opacity="0.81"/><circle cx="289.7" cy="60.9" r="1.1" fill="#f2bd62" opacity="0.49"/><circle cx="460.7" cy="110.5" r="0.7" fill="#f2bd62" opacity="0.31"/><circle cx="1276.6" cy="65.2" r="0.7" fill="#f2bd62" opacity="0.84"/><circle cx="1537.1" cy="73.5" r="0.9" fill="#f2bd62" opacity="0.68"/><circle cx="1380.4" cy="29.8" r="0.7" fill="#f2bd62" opacity="0.86"/><circle cx="1046.8" cy="132.4" r="0.8" fill="#f2bd62" opacity="0.41"/><circle cx="1384.7" cy="147.5" r="1.1" fill="#f2bd62" opacity="0.38"/><circle cx="1456.1" cy="71.4" r="1.1" fill="#f2bd62" opacity="0.75"/><circle cx="1217.3" cy="95.2" r="0.7" fill="#f2bd62" opacity="0.80"/><circle cx="112.8" cy="145.7" r="0.7" fill="#f2bd62" opacity="0.62"/><circle cx="739.2" cy="144.3" r="1.1" fill="#f2bd62" opacity="0.42"/><circle cx="1554.7" cy="143.1" r="0.7" fill="#f2bd62" opacity="0.92"/><circle cx="190.5" cy="95.8" r="1.2" fill="#f2bd62" opacity="0.43"/><circle cx="1427.7" cy="176.6" r="0.9" fill="#f2bd62" opacity="0.82"/><circle cx="1076.1" cy="151.4" r="1.0" fill="#f2bd62" opacity="0.51"/><circle cx="1520.8" cy="15.4" r="1.2" fill="#f2bd62" opacity="0.88"/><circle cx="696.3" cy="54.5" r="0.8" fill="#f2bd62" opacity="0.45"/><circle cx="393.7" cy="96.7" r="1.0" fill="#f2bd62" opacity="0.80"/><circle cx="954.3" cy="100.5" r="1.0" fill="#f2bd62" opacity="0.57"/><circle cx="1401.6" cy="187.2" r="1.0" fill="#f2bd62" opacity="0.43"/><circle cx="729.1" cy="74.1" r="1.3" fill="#f2bd62" opacity="0.52"/><circle cx="595.6" cy="38.0" r="1.0" fill="#f2bd62" opacity="0.88"/><circle cx="1063.9" cy="33.7" r="1.1" fill="#f2bd62" opacity="0.94"/><circle cx="1581.4" cy="113.7" r="0.7" fill="#f2bd62" opacity="0.44"/><circle cx="1070.9" cy="95.5" r="1.0" fill="#f2bd62" opacity="0.78"/><circle cx="244.3" cy="78.4" r="1.0" fill="#f2bd62" opacity="0.94"/><circle cx="1605.0" cy="117.7" r="0.9" fill="#f2bd62" opacity="0.69"/><circle cx="1310.7" cy="121.1" r="1.1" fill="#f2bd62" opacity="0.59"/><circle cx="971.3" cy="118.5" r="0.9" fill="#f2bd62" opacity="0.53"/><circle cx="1003.2" cy="181.0" r="1.2" fill="#f2bd62" opacity="0.49"/><circle cx="344.0" cy="125.8" r="0.7" fill="#f2bd62" opacity="0.93"/><circle cx="21.5" cy="163.4" r="0.6" fill="#f2bd62" opacity="0.78"/><circle cx="1126.5" cy="43.8" r="0.9" fill="#f2bd62" opacity="0.94"/><circle cx="272.4" cy="101.4" r="0.8" fill="#f2bd62" opacity="0.67"/><circle cx="94.2" cy="137.0" r="0.7" fill="#f2bd62" opacity="0.75"/><circle cx="344.2" cy="89.9" r="1.1" fill="#f2bd62" opacity="0.53"/><circle cx="1518.0" cy="125.6" r="0.8" fill="#f2bd62" opacity="0.44"/><circle cx="582.8" cy="142.6" r="0.7" fill="#f2bd62" opacity="0.72"/><circle cx="647.5" cy="75.5" r="1.2" fill="#f2bd62" opacity="0.72"/><circle cx="344.5" cy="173.9" r="1.0" fill="#f2bd62" opacity="0.61"/><circle cx="1178.6" cy="144.3" r="1.2" fill="#f2bd62" opacity="0.54"/><circle cx="907.3" cy="60.9" r="0.7" fill="#f2bd62" opacity="0.45"/><circle cx="1190.6" cy="135.9" r="0.6" fill="#f2bd62" opacity="0.61"/><circle cx="884.5" cy="44.2" r="1.0" fill="#f2bd62" opacity="0.80"/><circle cx="1335.8" cy="121.7" r="0.9" fill="#f2bd62" opacity="0.51"/><circle cx="1527.9" cy="106.7" r="1.2" fill="#f2bd62" opacity="0.88"/><circle cx="896.5" cy="6.3" r="0.6" fill="#f2bd62" opacity="0.45"/><circle cx="834.6" cy="108.2" r="0.5" fill="#f2bd62" opacity="0.33"/><circle cx="203.1" cy="186.1" r="1.3" fill="#f2bd62" opacity="0.94"/><circle cx="816.9" cy="96.6" r="0.6" fill="#f2bd62" opacity="0.41"/><circle cx="1292.3" cy="135.2" r="0.6" fill="#f2bd62" opacity="0.37"/><circle cx="1241.0" cy="73.2" r="1.2" fill="#f2bd62" opacity="0.80"/><circle cx="385.2" cy="96.4" r="0.5" fill="#f2bd62" opacity="0.47"/><circle cx="645.0" cy="133.7" r="1.2" fill="#f2bd62" opacity="0.85"/><circle cx="949.9" cy="28.4" r="0.8" fill="#f2bd62" opacity="0.52"/><circle cx="1133.4" cy="128.2" r="0.5" fill="#f2bd62" opacity="0.54"/><circle cx="912.8" cy="77.1" r="1.1" fill="#f2bd62" opacity="0.93"/><circle cx="413.4" cy="138.6" r="0.5" fill="#f2bd62" opacity="0.52"/><circle cx="1284.7" cy="111.6" r="0.9" fill="#f2bd62" opacity="0.70"/><circle cx="1066.8" cy="135.1" r="1.0" fill="#f2bd62" opacity="0.56"/><circle cx="502.8" cy="162.5" r="1.2" fill="#f2bd62" opacity="0.48"/><circle cx="775.4" cy="134.3" r="1.2" fill="#f2bd62" opacity="0.81"/><circle cx="989.6" cy="81.6" r="0.5" fill="#f2bd62" opacity="0.40"/><circle cx="1275.4" cy="145.8" r="1.0" fill="#f2bd62" opacity="0.92"/><circle cx="1389.8" cy="84.1" r="1.0" fill="#f2bd62" opacity="0.61"/><circle cx="1397.8" cy="51.7" r="1.0" fill="#f2bd62" opacity="0.91"/><circle cx="998.8" cy="151.7" r="0.5" fill="#f2bd62" opacity="0.70"/><circle cx="653.5" cy="26.3" r="1.3" fill="#f2bd62" opacity="0.78"/><circle cx="732.7" cy="57.0" r="1.0" fill="#f2bd62" opacity="0.59"/><circle cx="164.1" cy="170.3" r="0.8" fill="#f2bd62" opacity="0.32"/><circle cx="1170.1" cy="76.3" r="0.7" fill="#f2bd62" opacity="0.75"/><circle cx="1254.5" cy="25.8" r="0.8" fill="#f2bd62" opacity="0.79"/><circle cx="1489.4" cy="161.5" r="0.8" fill="#f2bd62" opacity="0.88"/><circle cx="895.8" cy="119.1" r="0.5" fill="#f2bd62" opacity="0.62"/><circle cx="1070.0" cy="8.5" r="0.6" fill="#f2bd62" opacity="0.64"/><circle cx="998.7" cy="82.1" r="0.8" fill="#f2bd62" opacity="0.93"/><circle cx="373.7" cy="153.6" r="0.5" fill="#f2bd62" opacity="0.67"/><circle cx="526.0" cy="11.0" r="0.9" fill="#f2bd62" opacity="0.65"/><circle cx="764.6" cy="122.1" r="1.2" fill="#f2bd62" opacity="0.51"/><circle cx="1024.6" cy="56.8" r="1.0" fill="#f2bd62" opacity="0.90"/><circle cx="1118.7" cy="139.8" r="0.5" fill="#f2bd62" opacity="0.48"/><circle cx="1415.0" cy="97.6" r="0.6" fill="#f2bd62" opacity="0.60"/><circle cx="1624.8" cy="134.5" r="0.5" fill="#f2bd62" opacity="0.91"/><circle cx="1662.0" cy="35.3" r="0.9" fill="#f2bd62" opacity="0.85"/><circle cx="974.9" cy="165.9" r="1.1" fill="#f2bd62" opacity="0.56"/><circle cx="336.7" cy="43.7" r="0.8" fill="#f2bd62" opacity="0.62"/><circle cx="845.9" cy="109.8" r="1.0" fill="#f2bd62" opacity="0.53"/><circle cx="476.8" cy="144.4" r="0.7" fill="#f2bd62" opacity="0.44"/><circle cx="1572.1" cy="179.8" r="1.0" fill="#f2bd62" opacity="0.80"/><circle cx="694.8" cy="106.8" r="1.1" fill="#f2bd62" opacity="0.46"/><circle cx="1389.8" cy="45.4" r="1.2" fill="#f2bd62" opacity="0.31"/><circle cx="1216.4" cy="104.6" r="1.3" fill="#f2bd62" opacity="0.47"/><circle cx="386.1" cy="79.5" r="0.5" fill="#f2bd62" opacity="0.49"/><circle cx="184.7" cy="97.2" r="1.1" fill="#f2bd62" opacity="0.48"/><circle cx="1078.6" cy="31.5" r="0.6" fill="#f2bd62" opacity="0.74"/><circle cx="86.8" cy="156.8" r="1.1" fill="#f2bd62" opacity="0.84"/><circle cx="955.2" cy="143.6" r="0.8" fill="#f2bd62" opacity="0.68"/><circle cx="454.8" cy="165.4" r="0.8" fill="#f2bd62" opacity="0.76"/><circle cx="431.5" cy="183.0" r="0.6" fill="#f2bd62" opacity="0.82"/><circle cx="683.2" cy="69.3" r="0.9" fill="#f2bd62" opacity="0.53"/><circle cx="807.6" cy="40.3" r="1.0" fill="#f2bd62" opacity="0.53"/><circle cx="130.3" cy="132.6" r="1.0" fill="#f2bd62" opacity="0.74"/><circle cx="717.2" cy="37.3" r="0.8" fill="#f2bd62" opacity="0.53"/><circle cx="748.8" cy="178.2" r="0.9" fill="#f2bd62" opacity="0.77"/><circle cx="1046.7" cy="4.1" r="0.6" fill="#f2bd62" opacity="0.45"/><circle cx="296.4" cy="73.2" r="1.0" fill="#f2bd62" opacity="0.39"/><circle cx="857.4" cy="39.6" r="0.8" fill="#f2bd62" opacity="0.77"/><circle cx="1142.8" cy="65.9" r="1.2" fill="#f2bd62" opacity="0.36"/><circle cx="608.9" cy="8.1" r="0.5" fill="#f2bd62" opacity="0.54"/><circle cx="553.7" cy="82.5" r="1.3" fill="#f2bd62" opacity="0.55"/><circle cx="358.2" cy="74.9" r="1.3" fill="#f2bd62" opacity="0.87"/><circle cx="721.6" cy="72.9" r="0.9" fill="#f2bd62" opacity="0.73"/><circle cx="825.4" cy="110.5" r="1.1" fill="#f2bd62" opacity="0.86"/><circle cx="1436.4" cy="19.7" r="1.2" fill="#f2bd62" opacity="0.39"/><circle cx="642.5" cy="180.8" r="0.7" fill="#f2bd62" opacity="0.76"/><circle cx="1653.3" cy="2.4" r="0.7" fill="#f2bd62" opacity="0.56"/><circle cx="1209.1" cy="103.4" r="1.2" fill="#f2bd62" opacity="0.69"/><circle cx="1277.7" cy="74.6" r="0.6" fill="#f2bd62" opacity="0.89"/><circle cx="194.1" cy="131.6" r="1.0" fill="#f2bd62" opacity="0.60"/><circle cx="515.0" cy="101.9" r="1.2" fill="#f2bd62" opacity="0.35"/><circle cx="1001.1" cy="176.8" r="1.1" fill="#f2bd62" opacity="0.94"/><circle cx="281.0" cy="72.3" r="0.6" fill="#f2bd62" opacity="0.89"/><circle cx="644.8" cy="166.9" r="1.2" fill="#f2bd62" opacity="0.46"/><circle cx="1172.3" cy="77.4" r="1.0" fill="#f2bd62" opacity="0.31"/><circle cx="1565.4" cy="154.8" r="1.3" fill="#f2bd62" opacity="0.66"/><circle cx="1389.8" cy="146.8" r="0.5" fill="#f2bd62" opacity="0.43"/><circle cx="1171.1" cy="172.7" r="0.5" fill="#f2bd62" opacity="0.56"/><circle cx="1608.3" cy="113.7" r="1.2" fill="#f2bd62" opacity="0.67"/><circle cx="783.0" cy="161.6" r="1.3" fill="#f2bd62" opacity="0.47"/><circle cx="354.2" cy="64.7" r="0.9" fill="#f2bd62" opacity="0.35"/><circle cx="492.2" cy="121.8" r="0.8" fill="#f2bd62" opacity="0.62"/><circle cx="937.5" cy="109.4" r="1.2" fill="#f2bd62" opacity="0.66"/><circle cx="1231.7" cy="54.2" r="0.8" fill="#f2bd62" opacity="0.67"/><circle cx="1673.3" cy="87.2" r="1.0" fill="#f2bd62" opacity="0.41"/><circle cx="937.1" cy="155.0" r="0.5" fill="#f2bd62" opacity="0.46"/><circle cx="709.8" cy="156.6" r="0.9" fill="#f2bd62" opacity="0.64"/><circle cx="616.2" cy="42.8" r="0.6" fill="#f2bd62" opacity="0.88"/><circle cx="1406.3" cy="31.8" r="1.1" fill="#f2bd62" opacity="0.63"/><circle cx="1040.3" cy="79.8" r="1.0" fill="#f2bd62" opacity="0.82"/><circle cx="220.2" cy="111.8" r="0.7" fill="#f2bd62" opacity="0.65"/><circle cx="1339.3" cy="34.0" r="0.7" fill="#f2bd62" opacity="0.60"/><circle cx="740.5" cy="135.8" r="0.5" fill="#f2bd62" opacity="0.34"/><circle cx="748.8" cy="186.5" r="1.3" fill="#f2bd62" opacity="0.56"/><circle cx="1045.7" cy="80.6" r="0.9" fill="#f2bd62" opacity="0.41"/><circle cx="222.5" cy="83.7" r="0.6" fill="#f2bd62" opacity="0.65"/><circle cx="1106.4" cy="4.2" r="0.9" fill="#f2bd62" opacity="0.44"/><circle cx="644.4" cy="170.0" r="0.7" fill="#f2bd62" opacity="0.79"/><circle cx="804.8" cy="96.6" r="0.5" fill="#f2bd62" opacity="0.38"/><circle cx="1671.9" cy="44.5" r="1.1" fill="#f2bd62" opacity="0.71"/><circle cx="550.6" cy="156.0" r="1.1" fill="#f2bd62" opacity="0.93"/><circle cx="1118.7" cy="97.3" r="0.7" fill="#f2bd62" opacity="0.59"/><circle cx="757.7" cy="3.1" r="0.8" fill="#f2bd62" opacity="0.92"/><circle cx="400.0" cy="35.8" r="1.0" fill="#f2bd62" opacity="0.73"/><circle cx="290.6" cy="174.3" r="0.7" fill="#f2bd62" opacity="0.50"/><circle cx="1288.9" cy="55.6" r="0.6" fill="#f2bd62" opacity="0.46"/><circle cx="439.8" cy="163.6" r="1.2" fill="#f2bd62" opacity="0.62"/><circle cx="1097.8" cy="117.0" r="0.5" fill="#f2bd62" opacity="0.79"/><circle cx="470.8" cy="86.3" r="0.8" fill="#f2bd62" opacity="0.67"/><circle cx="1424.6" cy="114.2" r="1.1" fill="#f2bd62" opacity="0.62"/><circle cx="1163.1" cy="171.1" r="0.6" fill="#f2bd62" opacity="0.60"/><circle cx="935.2" cy="84.8" r="1.0" fill="#f2bd62" opacity="0.35"/><circle cx="1204.8" cy="161.0" r="0.9" fill="#f2bd62" opacity="0.84"/><circle cx="1590.7" cy="74.2" r="0.6" fill="#f2bd62" opacity="0.33"/><circle cx="511.1" cy="128.4" r="0.8" fill="#f2bd62" opacity="0.94"/><circle cx="1172.2" cy="13.4" r="0.9" fill="#f2bd62" opacity="0.84"/><circle cx="1109.7" cy="92.8" r="0.5" fill="#f2bd62" opacity="0.88"/><circle cx="527.9" cy="36.4" r="0.5" fill="#f2bd62" opacity="0.30"/><circle cx="1484.2" cy="156.9" r="0.6" fill="#f2bd62" opacity="0.53"/><circle cx="243.1" cy="136.5" r="1.0" fill="#f2bd62" opacity="0.49"/><circle cx="881.0" cy="99.3" r="0.6" fill="#f2bd62" opacity="0.57"/><circle cx="503.8" cy="98.1" r="1.2" fill="#f2bd62" opacity="0.78"/><circle cx="1058.3" cy="144.3" r="0.6" fill="#f2bd62" opacity="0.37"/><circle cx="1105.9" cy="133.9" r="1.1" fill="#f2bd62" opacity="0.40"/><circle cx="932.9" cy="126.7" r="0.5" fill="#f2bd62" opacity="0.71"/><circle cx="935.2" cy="18.5" r="0.9" fill="#f2bd62" opacity="0.82"/><circle cx="723.4" cy="68.1" r="0.7" fill="#f2bd62" opacity="0.91"/><circle cx="464.5" cy="3.5" r="0.8" fill="#f2bd62" opacity="0.50"/><circle cx="1655.4" cy="40.3" r="1.2" fill="#f2bd62" opacity="0.31"/><circle cx="676.0" cy="103.3" r="1.2" fill="#f2bd62" opacity="0.35"/><circle cx="790.5" cy="135.3" r="1.2" fill="#f2bd62" opacity="0.94"/><circle cx="251.4" cy="127.5" r="0.7" fill="#f2bd62" opacity="0.42"/><circle cx="1577.9" cy="112.1" r="1.1" fill="#f2bd62" opacity="0.48"/><circle cx="1359.8" cy="148.9" r="0.6" fill="#f2bd62" opacity="0.72"/><circle cx="205.6" cy="121.0" r="0.7" fill="#f2bd62" opacity="0.66"/><circle cx="74.4" cy="173.7" r="0.8" fill="#f2bd62" opacity="0.54"/><circle cx="1463.7" cy="173.2" r="1.0" fill="#f2bd62" opacity="0.61"/><circle cx="1135.8" cy="83.0" r="0.9" fill="#f2bd62" opacity="0.33"/><circle cx="832.1" cy="102.2" r="0.6" fill="#f2bd62" opacity="0.59"/><circle cx="305.8" cy="183.9" r="1.1" fill="#f2bd62" opacity="0.95"/><circle cx="457.8" cy="4.8" r="0.8" fill="#f2bd62" opacity="0.36"/><circle cx="765.5" cy="106.8" r="1.2" fill="#f2bd62" opacity="0.95"/><circle cx="1256.7" cy="126.6" r="0.5" fill="#f2bd62" opacity="0.91"/><circle cx="698.9" cy="169.4" r="0.6" fill="#f2bd62" opacity="0.88"/><circle cx="200.2" cy="131.3" r="0.6" fill="#f2bd62" opacity="0.64"/><circle cx="1199.4" cy="8.5" r="0.7" fill="#f2bd62" opacity="0.45"/><circle cx="517.7" cy="2.6" r="1.3" fill="#f2bd62" opacity="0.72"/><circle cx="1029.1" cy="44.1" r="0.7" fill="#f2bd62" opacity="0.90"/><circle cx="1021.2" cy="175.1" r="0.7" fill="#f2bd62" opacity="0.91"/><circle cx="478.9" cy="26.8" r="0.5" fill="#f2bd62" opacity="0.53"/><circle cx="538.9" cy="172.6" r="1.2" fill="#f2bd62" opacity="0.61"/><circle cx="191.7" cy="84.1" r="0.9" fill="#f2bd62" opacity="0.79"/><circle cx="1514.3" cy="61.5" r="1.2" fill="#f2bd62" opacity="0.33"/><circle cx="1390.0" cy="149.7" r="0.9" fill="#f2bd62" opacity="0.50"/><circle cx="575.8" cy="82.4" r="1.1" fill="#f2bd62" opacity="0.72"/><circle cx="164.7" cy="151.7" r="1.0" fill="#f2bd62" opacity="0.51"/><circle cx="608.0" cy="66.7" r="1.2" fill="#f2bd62" opacity="0.54"/><circle cx="1309.3" cy="118.8" r="1.0" fill="#f2bd62" opacity="0.78"/><circle cx="516.2" cy="99.6" r="0.8" fill="#f2bd62" opacity="0.67"/><circle cx="1277.9" cy="57.5" r="0.7" fill="#f2bd62" opacity="0.45"/><circle cx="817.9" cy="36.6" r="0.6" fill="#f2bd62" opacity="0.93"/><circle cx="321.3" cy="102.4" r="0.6" fill="#f2bd62" opacity="0.66"/><circle cx="624.4" cy="119.4" r="1.2" fill="#f2bd62" opacity="0.61"/><circle cx="1276.5" cy="41.2" r="0.9" fill="#f2bd62" opacity="0.55"/><circle cx="1115.1" cy="35.1" r="0.6" fill="#f2bd62" opacity="0.87"/><circle cx="21.0" cy="123.6" r="1.1" fill="#f2bd62" opacity="0.91"/><circle cx="1242.1" cy="157.8" r="1.1" fill="#f2bd62" opacity="0.92"/><circle cx="1577.4" cy="6.9" r="1.1" fill="#f2bd62" opacity="0.57"/><circle cx="996.0" cy="146.4" r="0.6" fill="#f2bd62" opacity="0.79"/><circle cx="593.4" cy="105.2" r="0.9" fill="#f2bd62" opacity="0.95"/><circle cx="1222.2" cy="157.1" r="1.2" fill="#f2bd62" opacity="0.53"/><circle cx="1505.1" cy="104.7" r="0.7" fill="#f2bd62" opacity="0.46"/><circle cx="1353.0" cy="27.2" r="1.1" fill="#f2bd62" opacity="0.34"/><circle cx="940.5" cy="123.6" r="1.0" fill="#f2bd62" opacity="0.36"/><circle cx="1264.6" cy="145.6" r="0.7" fill="#f2bd62" opacity="0.46"/><circle cx="691.0" cy="145.2" r="0.7" fill="#f2bd62" opacity="0.86"/><circle cx="1468.4" cy="170.9" r="0.7" fill="#f2bd62" opacity="0.55"/><circle cx="504.5" cy="178.6" r="0.7" fill="#f2bd62" opacity="0.57"/><circle cx="793.4" cy="22.2" r="0.7" fill="#f2bd62" opacity="0.67"/><circle cx="211.7" cy="106.3" r="0.5" fill="#f2bd62" opacity="0.82"/><circle cx="905.4" cy="84.1" r="0.5" fill="#f2bd62" opacity="0.36"/><circle cx="1157.8" cy="34.8" r="1.1" fill="#f2bd62" opacity="0.93"/><circle cx="494.3" cy="68.0" r="1.1" fill="#f2bd62" opacity="0.73"/><circle cx="1264.4" cy="146.8" r="1.3" fill="#f2bd62" opacity="0.91"/><circle cx="942.3" cy="113.6" r="1.1" fill="#f2bd62" opacity="0.54"/><circle cx="471.7" cy="103.0" r="0.8" fill="#f2bd62" opacity="0.49"/><circle cx="592.9" cy="164.8" r="0.6" fill="#f2bd62" opacity="0.60"/><circle cx="1099.2" cy="128.8" r="1.3" fill="#f2bd62" opacity="0.85"/><circle cx="1482.1" cy="80.6" r="0.7" fill="#f2bd62" opacity="0.87"/><circle cx="1166.0" cy="16.6" r="0.9" fill="#f2bd62" opacity="0.52"/><circle cx="1055.0" cy="132.1" r="0.7" fill="#f2bd62" opacity="0.64"/><circle cx="981.1" cy="31.5" r="1.1" fill="#f2bd62" opacity="0.53"/><circle cx="1555.1" cy="40.7" r="0.6" fill="#f2bd62" opacity="0.83"/><circle cx="1431.2" cy="55.8" r="1.0" fill="#f2bd62" opacity="0.63"/><circle cx="699.2" cy="124.9" r="0.8" fill="#f2bd62" opacity="0.58"/><circle cx="573.8" cy="45.5" r="0.9" fill="#f2bd62" opacity="0.93"/><circle cx="1223.6" cy="8.6" r="1.1" fill="#f2bd62" opacity="0.82"/><circle cx="476.6" cy="49.6" r="1.0" fill="#f2bd62" opacity="0.73"/><circle cx="402.6" cy="93.8" r="0.7" fill="#f2bd62" opacity="0.83"/><circle cx="716.2" cy="94.2" r="0.8" fill="#f2bd62" opacity="0.44"/><circle cx="476.0" cy="43.7" r="0.8" fill="#f2bd62" opacity="0.47"/><circle cx="742.3" cy="157.4" r="1.2" fill="#f2bd62" opacity="0.43"/><circle cx="712.2" cy="158.5" r="0.6" fill="#f2bd62" opacity="0.70"/><circle cx="530.8" cy="13.6" r="0.7" fill="#f2bd62" opacity="0.68"/><circle cx="1380.5" cy="108.0" r="0.7" fill="#f2bd62" opacity="0.51"/><circle cx="1561.4" cy="28.0" r="0.8" fill="#f2bd62" opacity="0.59"/><circle cx="691.5" cy="61.8" r="0.9" fill="#f2bd62" opacity="0.50"/><circle cx="648.5" cy="185.5" r="1.1" fill="#f2bd62" opacity="0.90"/><circle cx="439.7" cy="81.0" r="0.7" fill="#f2bd62" opacity="0.36"/><circle cx="184.3" cy="181.5" r="1.3" fill="#f2bd62" opacity="0.50"/><circle cx="1164.6" cy="138.0" r="0.7" fill="#f2bd62" opacity="0.55"/><circle cx="494.0" cy="133.6" r="1.1" fill="#f2bd62" opacity="0.74"/><circle cx="501.1" cy="127.3" r="0.6" fill="#f2bd62" opacity="0.88"/><circle cx="1447.8" cy="161.5" r="0.9" fill="#f2bd62" opacity="0.78"/><circle cx="1422.0" cy="154.6" r="0.8" fill="#f2bd62" opacity="0.57"/><circle cx="1585.2" cy="134.9" r="0.8" fill="#f2bd62" opacity="0.54"/><circle cx="877.9" cy="142.6" r="0.8" fill="#f2bd62" opacity="0.56"/><circle cx="677.2" cy="44.4" r="1.0" fill="#f2bd62" opacity="0.55"/><circle cx="804.2" cy="177.3" r="0.7" fill="#f2bd62" opacity="0.94"/><circle cx="164.2" cy="136.3" r="0.9" fill="#f2bd62" opacity="0.44"/><circle cx="1360.2" cy="30.3" r="0.9" fill="#f2bd62" opacity="0.44"/><circle cx="615.6" cy="68.6" r="1.3" fill="#f2bd62" opacity="0.86"/><circle cx="1275.4" cy="41.2" r="0.6" fill="#f2bd62" opacity="0.89"/><circle cx="945.5" cy="124.4" r="1.0" fill="#f2bd62" opacity="0.66"/><circle cx="1063.5" cy="127.9" r="0.7" fill="#f2bd62" opacity="0.34"/><circle cx="229.0" cy="70.8" r="1.3" fill="#f2bd62" opacity="0.47"/><circle cx="431.5" cy="45.9" r="0.5" fill="#f2bd62" opacity="0.34"/><circle cx="1318.5" cy="132.5" r="1.0" fill="#f2bd62" opacity="0.93"/><circle cx="336.9" cy="167.6" r="0.6" fill="#f2bd62" opacity="0.58"/><circle cx="972.2" cy="155.5" r="0.6" fill="#f2bd62" opacity="0.76"/><circle cx="693.0" cy="139.7" r="1.2" fill="#f2bd62" opacity="0.69"/><circle cx="1624.4" cy="179.4" r="1.2" fill="#f2bd62" opacity="0.82"/><circle cx="937.5" cy="51.7" r="0.6" fill="#f2bd62" opacity="0.87"/><circle cx="1168.0" cy="113.1" r="1.3" fill="#f2bd62" opacity="0.72"/><circle cx="1173.9" cy="131.6" r="0.7" fill="#f2bd62" opacity="0.36"/><circle cx="1186.4" cy="126.5" r="1.1" fill="#f2bd62" opacity="0.38"/><circle cx="241.8" cy="90.7" r="0.7" fill="#f2bd62" opacity="0.72"/><circle cx="1348.1" cy="8.2" r="1.1" fill="#f2bd62" opacity="0.68"/><circle cx="515.3" cy="44.2" r="0.8" fill="#f2bd62" opacity="0.46"/><circle cx="530.4" cy="4.5" r="0.8" fill="#f2bd62" opacity="0.88"/><circle cx="780.8" cy="22.9" r="0.9" fill="#f2bd62" opacity="0.80"/><circle cx="969.4" cy="87.2" r="1.0" fill="#f2bd62" opacity="0.45"/><circle cx="1510.0" cy="30.5" r="1.0" fill="#f2bd62" opacity="0.92"/><circle cx="976.8" cy="73.3" r="0.7" fill="#f2bd62" opacity="0.69"/><circle cx="378.7" cy="145.3" r="0.9" fill="#f2bd62" opacity="0.67"/><circle cx="450.3" cy="147.7" r="0.9" fill="#f2bd62" opacity="0.38"/><circle cx="579.5" cy="12.3" r="1.1" fill="#f2bd62" opacity="0.74"/><circle cx="1335.5" cy="22.2" r="1.2" fill="#f2bd62" opacity="0.74"/><circle cx="1198.5" cy="102.2" r="1.1" fill="#f2bd62" opacity="0.68"/><circle cx="135.4" cy="171.9" r="0.8" fill="#f2bd62" opacity="0.52"/><circle cx="1149.3" cy="71.6" r="0.9" fill="#f2bd62" opacity="0.55"/><circle cx="897.8" cy="180.7" r="0.6" fill="#f2bd62" opacity="0.36"/><circle cx="381.1" cy="137.7" r="0.8" fill="#f2bd62" opacity="0.87"/>
<ellipse cx="516.7" cy="109.1" rx="7.6" ry="3.5" transform="rotate(-18 516.7 109.1)" fill="#fff6d8" opacity="0.85" filter="url(#g1)"/><ellipse cx="524.5" cy="106.4" rx="7.6" ry="3.5" transform="rotate(-18 524.5 106.4)" fill="#fff6d8" opacity="0.85" filter="url(#g1)"/><ellipse cx="528.2" cy="107.6" rx="7.6" ry="3.5" transform="rotate(-18 528.2 107.6)" fill="#fff6d8" opacity="0.85" filter="url(#g1)"/><ellipse cx="500.7" cy="111.8" rx="7.6" ry="3.5" transform="rotate(-18 500.7 111.8)" fill="#fff6d8" opacity="0.85" filter="url(#g1)"/><ellipse cx="507.4" cy="107.1" rx="7.6" ry="3.5" transform="rotate(-18 507.4 107.1)" fill="#fff6d8" opacity="0.85" filter="url(#g1)"/><ellipse cx="530.8" cy="105.6" rx="7.6" ry="3.5" transform="rotate(-18 530.8 105.6)" fill="#fff6d8" opacity="0.85" filter="url(#g1)"/><ellipse cx="563.8" cy="97.6" rx="4.6" ry="2.3" transform="rotate(-18 563.8 97.6)" fill="#fff6d8" opacity="0.77" filter="url(#g1)"/><ellipse cx="569.3" cy="91.1" rx="4.6" ry="2.3" transform="rotate(-18 569.3 91.1)" fill="#fff6d8" opacity="0.77" filter="url(#g1)"/><ellipse cx="572.3" cy="93.4" rx="4.6" ry="2.3" transform="rotate(-18 572.3 93.4)" fill="#fff6d8" opacity="0.77" filter="url(#g1)"/><ellipse cx="502.7" cy="116.2" rx="4.0" ry="2.0" transform="rotate(-18 502.7 116.2)" fill="#fff6d8" opacity="0.68" filter="url(#g1)"/><ellipse cx="503.5" cy="111.8" rx="4.0" ry="2.0" transform="rotate(-18 503.5 111.8)" fill="#fff6d8" opacity="0.68" filter="url(#g1)"/><ellipse cx="490.8" cy="118.3" rx="4.0" ry="2.0" transform="rotate(-18 490.8 118.3)" fill="#fff6d8" opacity="0.68" filter="url(#g1)"/><ellipse cx="1288.2" cy="111.9" rx="4.6" ry="2.3" transform="rotate(-18 1288.2 111.9)" fill="#fff6d8" opacity="0.85" filter="url(#g1)"/><ellipse cx="1291.2" cy="113.3" rx="4.6" ry="2.3" transform="rotate(-18 1291.2 113.3)" fill="#fff6d8" opacity="0.85" filter="url(#g1)"/><ellipse cx="1309.8" cy="104.8" rx="4.6" ry="2.3" transform="rotate(-18 1309.8 104.8)" fill="#fff6d8" opacity="0.85" filter="url(#g1)"/><ellipse cx="1289.7" cy="124.9" rx="2.2" ry="1.3" transform="rotate(-18 1289.7 124.9)" fill="#fff6d8" opacity="0.59" filter="url(#g1)"/><ellipse cx="1315.4" cy="95.2" rx="2.4" ry="1.4" transform="rotate(-18 1315.4 95.2)" fill="#fff6d8" opacity="0.59" filter="url(#g1)"/><ellipse cx="849.5" cy="103.1" rx="3.2" ry="1.7" transform="rotate(-18 849.5 103.1)" fill="#fff6d8" opacity="0.68" filter="url(#g1)"/><ellipse cx="836.2" cy="106.7" rx="3.2" ry="1.7" transform="rotate(-18 836.2 106.7)" fill="#fff6d8" opacity="0.68" filter="url(#g1)"/><ellipse cx="671.5" cy="122.2" rx="2.4" ry="1.4" transform="rotate(-18 671.5 122.2)" fill="#fff6d8" opacity="0.68" filter="url(#g1)"/><ellipse cx="427.6" cy="167.8" rx="2.9" ry="1.6" transform="rotate(-18 427.6 167.8)" fill="#fff6d8" opacity="0.68" filter="url(#g1)"/><ellipse cx="430.2" cy="164.7" rx="2.9" ry="1.6" transform="rotate(-18 430.2 164.7)" fill="#fff6d8" opacity="0.68" filter="url(#g1)"/><ellipse cx="684.1" cy="176.1" rx="2.4" ry="1.4" transform="rotate(-18 684.1 176.1)" fill="#fff6d8" opacity="0.59" filter="url(#g1)"/><ellipse cx="697.9" cy="156.6" rx="2.2" ry="1.3" transform="rotate(-18 697.9 156.6)" fill="#fff6d8" opacity="0.59" filter="url(#g1)"/><ellipse cx="966.4" cy="173.3" rx="2.4" ry="1.4" transform="rotate(-18 966.4 173.3)" fill="#fff6d8" opacity="0.59" filter="url(#g1)"/><ellipse cx="615.0" cy="65.5" rx="2.2" ry="1.3" transform="rotate(-18 615.0 65.5)" fill="#fff6d8" opacity="0.51" filter="url(#g1)"/><ellipse cx="635.9" cy="9.0" rx="2.9" ry="1.6" transform="rotate(-18 635.9 9.0)" fill="#fff6d8" opacity="0.42" filter="url(#g1)"/><ellipse cx="630.8" cy="8.6" rx="2.9" ry="1.6" transform="rotate(-18 630.8 8.6)" fill="#fff6d8" opacity="0.42" filter="url(#g1)"/><ellipse cx="523.8" cy="141.1" rx="2.0" ry="1.2" transform="rotate(-18 523.8 141.1)" fill="#fff6d8" opacity="0.51" filter="url(#g1)"/><ellipse cx="381.9" cy="137.8" rx="2.0" ry="1.2" transform="rotate(-18 381.9 137.8)" fill="#fff6d8" opacity="0.51" filter="url(#g1)"/><ellipse cx="900.1" cy="146.5" rx="2.0" ry="1.2" transform="rotate(-18 900.1 146.5)" fill="#fff6d8" opacity="0.51" filter="url(#g1)"/><ellipse cx="96.8" cy="109.2" rx="2.2" ry="1.3" transform="rotate(-18 96.8 109.2)" fill="#fff6d8" opacity="0.59" filter="url(#g1)"/><ellipse cx="218.3" cy="110.8" rx="2.7" ry="1.5" transform="rotate(-18 218.3 110.8)" fill="#fff6d8" opacity="0.77" filter="url(#g1)"/><ellipse cx="336.4" cy="60.4" rx="2.7" ry="1.5" transform="rotate(-18 336.4 60.4)" fill="#fff6d8" opacity="0.68" filter="url(#g1)"/><ellipse cx="272.9" cy="140.3" rx="2.4" ry="1.4" transform="rotate(-18 272.9 140.3)" fill="#fff6d8" opacity="0.42" filter="url(#g1)"/><ellipse cx="73.4" cy="155.3" rx="2.0" ry="1.2" transform="rotate(-18 73.4 155.3)" fill="#fff6d8" opacity="0.51" filter="url(#g1)"/><ellipse cx="65.9" cy="178.7" rx="2.7" ry="1.5" transform="rotate(-18 65.9 178.7)" fill="#fff6d8" opacity="0.68" filter="url(#g1)"/><ellipse cx="429.1" cy="168.5" rx="2.2" ry="1.3" transform="rotate(-18 429.1 168.5)" fill="#fff6d8" opacity="0.59" filter="url(#g1)"/><ellipse cx="439.5" cy="126.7" rx="2.0" ry="1.2" transform="rotate(-18 439.5 126.7)" fill="#fff6d8" opacity="0.51" filter="url(#g1)"/><ellipse cx="381.4" cy="41.7" rx="2.0" ry="1.2" transform="rotate(-18 381.4 41.7)" fill="#fff6d8" opacity="0.51" filter="url(#g1)"/><ellipse cx="1045.8" cy="100.2" rx="2.2" ry="1.3" transform="rotate(-18 1045.8 100.2)" fill="#fff6d8" opacity="0.59" filter="url(#g1)"/><ellipse cx="1205.7" cy="107.7" rx="2.2" ry="1.3" transform="rotate(-18 1205.7 107.7)" fill="#fff6d8" opacity="0.59" filter="url(#g1)"/><ellipse cx="1127.5" cy="154.9" rx="2.7" ry="1.5" transform="rotate(-18 1127.5 154.9)" fill="#fff6d8" opacity="0.68" filter="url(#g1)"/><ellipse cx="1447.9" cy="179.1" rx="2.7" ry="1.5" transform="rotate(-18 1447.9 179.1)" fill="#fff6d8" opacity="0.68" filter="url(#g1)"/><ellipse cx="1474.0" cy="152.8" rx="2.2" ry="1.3" transform="rotate(-18 1474.0 152.8)" fill="#fff6d8" opacity="0.68" filter="url(#g1)"/><ellipse cx="1511.1" cy="114.6" rx="2.4" ry="1.4" transform="rotate(-18 1511.1 114.6)" fill="#fff6d8" opacity="0.68" filter="url(#g1)"/><ellipse cx="1446.4" cy="24.3" rx="2.2" ry="1.3" transform="rotate(-18 1446.4 24.3)" fill="#fff6d8" opacity="0.59" filter="url(#g1)"/><ellipse cx="1634.6" cy="14.5" rx="2.4" ry="1.4" transform="rotate(-18 1634.6 14.5)" fill="#fff6d8" opacity="0.51" filter="url(#g1)"/><ellipse cx="1627.9" cy="70.7" rx="2.4" ry="1.4" transform="rotate(-18 1627.9 70.7)" fill="#fff6d8" opacity="0.30" filter="url(#g1)"/><ellipse cx="980.0" cy="168.9" rx="2.2" ry="1.3" transform="rotate(-18 980.0 168.9)" fill="#fff6d8" opacity="0.51" filter="url(#g1)"/><ellipse cx="1241.8" cy="23.4" rx="2.0" ry="1.2" transform="rotate(-18 1241.8 23.4)" fill="#fff6d8" opacity="0.51" filter="url(#g1)"/><ellipse cx="1226.2" cy="39.7" rx="1.7" ry="1.1" transform="rotate(-18 1226.2 39.7)" fill="#fff6d8" opacity="0.51" filter="url(#g1)"/><ellipse cx="1183.1" cy="55.4" rx="1.7" ry="1.1" transform="rotate(-18 1183.1 55.4)" fill="#fff6d8" opacity="0.51" filter="url(#g1)"/><ellipse cx="1289.8" cy="52.6" rx="1.7" ry="1.1" transform="rotate(-18 1289.8 52.6)" fill="#fff6d8" opacity="0.51" filter="url(#g1)"/><ellipse cx="1260.3" cy="85.0" rx="2.0" ry="1.2" transform="rotate(-18 1260.3 85.0)" fill="#fff6d8" opacity="0.51" filter="url(#g1)"/><ellipse cx="1369.9" cy="119.8" rx="1.7" ry="1.1" transform="rotate(-18 1369.9 119.8)" fill="#fff6d8" opacity="0.51" filter="url(#g1)"/><ellipse cx="1517.1" cy="80.9" rx="1.7" ry="1.1" transform="rotate(-18 1517.1 80.9)" fill="#fff6d8" opacity="0.42" filter="url(#g1)"/><ellipse cx="1580.2" cy="139.7" rx="1.7" ry="1.1" transform="rotate(-18 1580.2 139.7)" fill="#fff6d8" opacity="0.42" filter="url(#g1)"/><ellipse cx="1637.6" cy="150.1" rx="1.7" ry="1.1" transform="rotate(-18 1637.6 150.1)" fill="#fff6d8" opacity="0.42" filter="url(#g1)"/><ellipse cx="1391.2" cy="160.1" rx="2.0" ry="1.2" transform="rotate(-18 1391.2 160.1)" fill="#fff6d8" opacity="0.51" filter="url(#g1)"/><ellipse cx="1180.9" cy="175.1" rx="2.0" ry="1.2" transform="rotate(-18 1180.9 175.1)" fill="#fff6d8" opacity="0.51" filter="url(#g1)"/><ellipse cx="1029.7" cy="119.8" rx="1.7" ry="1.1" transform="rotate(-18 1029.7 119.8)" fill="#fff6d8" opacity="0.42" filter="url(#g1)"/><ellipse cx="759.1" cy="60.9" rx="2.0" ry="1.2" transform="rotate(-18 759.1 60.9)" fill="#fff6d8" opacity="0.51" filter="url(#g1)"/><ellipse cx="790.8" cy="129.6" rx="1.7" ry="1.1" transform="rotate(-18 790.8 129.6)" fill="#fff6d8" opacity="0.42" filter="url(#g1)"/><ellipse cx="743.5" cy="97.8" rx="1.7" ry="1.1" transform="rotate(-18 743.5 97.8)" fill="#fff6d8" opacity="0.42" filter="url(#g1)"/><ellipse cx="619.1" cy="149.3" rx="1.7" ry="1.1" transform="rotate(-18 619.1 149.3)" fill="#fff6d8" opacity="0.42" filter="url(#g1)"/><ellipse cx="560.7" cy="179.7" rx="2.0" ry="1.2" transform="rotate(-18 560.7 179.7)" fill="#fff6d8" opacity="0.51" filter="url(#g1)"/><ellipse cx="297.9" cy="176.2" rx="2.2" ry="1.3" transform="rotate(-18 297.9 176.2)" fill="#fff6d8" opacity="0.59" filter="url(#g1)"/><ellipse cx="155.2" cy="171.8" rx="2.0" ry="1.2" transform="rotate(-18 155.2 171.8)" fill="#fff6d8" opacity="0.51" filter="url(#g1)"/><ellipse cx="933.0" cy="58.6" rx="1.7" ry="1.1" transform="rotate(-18 933.0 58.6)" fill="#fff6d8" opacity="0.42" filter="url(#g1)"/><ellipse cx="881.3" cy="29.0" rx="1.7" ry="1.1" transform="rotate(-18 881.3 29.0)" fill="#fff6d8" opacity="0.42" filter="url(#g1)"/><ellipse cx="1001.0" cy="49.1" rx="1.7" ry="1.1" transform="rotate(-18 1001.0 49.1)" fill="#fff6d8" opacity="0.42" filter="url(#g1)"/><ellipse cx="1100.2" cy="30.2" rx="1.7" ry="1.1" transform="rotate(-18 1100.2 30.2)" fill="#fff6d8" opacity="0.42" filter="url(#g1)"/>
</svg>
  <div id="btitle">供应商管理系统</div>
  <div id="bsub">write a great title</div>
 </div>

 <div class="card" style="left:30px"><div class="lbl">供应商总数</div><div class="num">10<span class="j">家</span></div></div>
 <div class="card" style="left:456.6px"><div class="lbl">正常合作</div><div class="num">7<span class="j">家</span></div></div>
 <div class="card" style="left:883.3px"><div class="lbl">暂停合作</div><div class="num">1<span class="j">家</span></div></div>
 <div class="card gray" style="left:1310px"><div class="lbl">黑名单</div><div class="num">2<span class="j">家</span></div></div>

 <div id="tabs">
  <div id="tdiv"></div>
  <div class="tab" id="tab1">供应商信息一览</div>
  <div class="tab" style="left:234px">供应商多维度分析</div>
  <div class="tab" style="left:467px">产品采购分析</div>
  <div id="uline"></div>
 </div>

 <div id="tcard">
  <div id="thead"><div id="ttitle">合作中</div></div>
  <div class="vl" style="left:117.5px;width:2px;background:#d8d8d8"></div>
<div class="vl" style="left:235.6px;width:2px;background:#f0f0f0"></div>
<div class="vl" style="left:354.2px;width:2px;background:#f0f0f0"></div>
<div class="vl" style="left:472.8px;width:2px;background:#f0f0f0"></div>
<div class="vl" style="left:591.4px;width:2px;background:#f0f0f0"></div>
<div class="vl" style="left:710.0px;width:2px;background:#f0f0f0"></div>
<div class="vl" style="left:828.6px;width:2px;background:#f0f0f0"></div>
<div class="vl" style="left:947.2px;width:2px;background:#f0f0f0"></div>
<div class="vl" style="left:1065.8px;width:2px;background:#f0f0f0"></div>
<div class="vl" style="left:1184.4px;width:2px;background:#f0f0f0"></div>
<div class="vl" style="left:1303.0px;width:2px;background:#f0f0f0"></div>
<div class="vl" style="left:1421.6px;width:2px;background:#f0f0f0"></div>
<div class="vl" style="left:1540.2px;width:2px;background:#f0f0f0"></div>
<div class="vl" style="left:1658.8px;width:2px;background:#f0f0f0"></div>
<div class="hl" style="top:112.80px"></div>
<div class="hl" style="top:168.05px"></div>
<div class="hl" style="top:223.30px"></div>
<div class="hl" style="top:278.55px"></div>
<div class="hl" style="top:333.80px"></div>
<div class="hl" style="top:389.05px"></div>
<div class="hl" style="top:444.30px"></div>
<div class="hl" style="top:499.55px"></div>
<div class="hl" style="top:503.05px"></div>
<div class="cb" style="left:22px;top:75px"></div>
<div class="th" style="left:132.0px;top:63px">合作状态</div>
<div class="th" style="left:250.6px;top:63px">供应商<span class="d">...</span></div>
<div class="th" style="left:369.2px;top:63px">税号</div>
<div class="th" style="left:487.8px;top:63px">注册地址</div>
<div class="th" style="left:606.4px;top:63px">成立时间</div>
<div class="th" style="left:725.0px;top:63px">注册资本</div>
<div class="th" style="left:843.6px;top:63px">实缴资本</div>
<div class="th" style="left:962.2px;top:63px">法人姓名</div>
<div class="th" style="left:1080.8px;top:63px">企业类型</div>
<div class="th" style="left:1199.4px;top:63px">联系人<span class="d">...</span></div>
<div class="th" style="left:1318.0px;top:63px">联系人<span class="d">...</span></div>
<div class="th" style="left:1436.6px;top:63px">合作过<span class="d">...</span></div>
<div class="th" style="left:1555.2px;top:63px">是否参</div>
<div class="idx" style="left:24.5px;top:114.0px">1</div>
<div class="pill" style="left:131.5px;top:125.8px">正常<span class="l">...</span></div>
<div class="td" style="left:250.6px;top:114.5px"><span class="l">ZZZ</span>供<span class="d">...</span></div>
<div class="td" style="left:369.2px;top:114.5px"><span class="l">234678</span></div>
<div class="td" style="left:487.8px;top:114.5px">北京市<span class="d">...</span></div>
<div class="td" style="left:606.4px;top:114.5px"><span class="l">2023-</span><span class="d">...</span></div>
<div class="td" style="left:725.0px;top:114.5px"><span class="l">32000</span><span class="d">...</span></div>
<div class="td" style="left:843.6px;top:114.5px"><span class="l">30000</span><span class="d">...</span></div>
<div class="td" style="left:962.2px;top:114.5px">王五</div>
<div class="tag" style="left:1080.3px;top:126.5px">民营</div>
<div class="td" style="left:1199.4px;top:114.5px"><span class="l">13888</span><span class="d">...</span></div>
<div class="td" style="left:1318.0px;top:114.5px">赵六</div>
<div class="td" style="left:1436.6px;top:114.5px">否</div>
<div class="td" style="left:1555.2px;top:114.5px">否</div>
<div class="idx" style="left:24.5px;top:169.2px">2</div>
<div class="pill" style="left:131.5px;top:181.0px">正常<span class="l">...</span></div>
<div class="td" style="left:250.6px;top:169.7px"><span class="l">WXY</span>供<span class="d">...</span></div>
<div class="td" style="left:369.2px;top:169.7px"><span class="l">890345</span></div>
<div class="td" style="left:487.8px;top:169.7px">上海市<span class="d">...</span></div>
<div class="td" style="left:606.4px;top:169.7px"><span class="l">2025-</span><span class="d">...</span></div>
<div class="td" style="left:725.0px;top:169.7px"><span class="l">18000</span><span class="d">...</span></div>
<div class="td" style="left:843.6px;top:169.7px"><span class="l">15000</span><span class="d">...</span></div>
<div class="td" style="left:962.2px;top:169.7px">张三</div>
<div class="tag" style="left:1080.3px;top:181.7px">外资</div>
<div class="td" style="left:1199.4px;top:169.7px"><span class="l">13977</span><span class="d">...</span></div>
<div class="td" style="left:1318.0px;top:169.7px">李四</div>
<div class="td" style="left:1436.6px;top:169.7px">是</div>
<div class="td" style="left:1555.2px;top:169.7px">是</div>
<div class="idx" style="left:24.5px;top:224.4px">3</div>
<div class="pill" style="left:131.5px;top:236.2px">正常<span class="l">...</span></div>
<div class="td" style="left:250.6px;top:224.9px"><span class="l">TUV</span>供<span class="d">...</span></div>
<div class="td" style="left:369.2px;top:224.9px"><span class="l">456012</span></div>
<div class="td" style="left:487.8px;top:224.9px">深圳市<span class="d">...</span></div>
<div class="td" style="left:606.4px;top:224.9px"><span class="l">2019-</span><span class="d">...</span></div>
<div class="td" style="left:725.0px;top:224.9px"><span class="l">35000</span><span class="d">...</span></div>
<div class="td" style="left:843.6px;top:224.9px"><span class="l">32000</span><span class="d">...</span></div>
<div class="td" style="left:962.2px;top:224.9px">王五</div>
<div class="tag" style="left:1080.3px;top:236.9px">其他</div>
<div class="td" style="left:1199.4px;top:224.9px"><span class="l">13766</span><span class="d">...</span></div>
<div class="td" style="left:1318.0px;top:224.9px">赵六</div>
<div class="td" style="left:1436.6px;top:224.9px">否</div>
<div class="td" style="left:1555.2px;top:224.9px">否</div>
<div class="idx" style="left:24.5px;top:279.6px">4</div>
<div class="pill" style="left:131.5px;top:291.4px">正常<span class="l">...</span></div>
<div class="td" style="left:250.6px;top:280.1px"><span class="l">NOP</span>供<span class="d">...</span></div>
<div class="td" style="left:369.2px;top:280.1px"><span class="l">567890</span></div>
<div class="td" style="left:487.8px;top:280.1px">北京市<span class="d">...</span></div>
<div class="td" style="left:606.4px;top:280.1px"><span class="l">2022-</span><span class="d">...</span></div>
<div class="td" style="left:725.0px;top:280.1px"><span class="l">25000</span><span class="d">...</span></div>
<div class="td" style="left:843.6px;top:280.1px"><span class="l">22000</span><span class="d">...</span></div>
<div class="td" style="left:962.2px;top:280.1px">王五</div>
<div class="tag" style="left:1080.3px;top:292.1px">民营</div>
<div class="td" style="left:1199.4px;top:280.1px"><span class="l">13844</span><span class="d">...</span></div>
<div class="td" style="left:1318.0px;top:280.1px">赵六</div>
<div class="td" style="left:1436.6px;top:280.1px">否</div>
<div class="td" style="left:1555.2px;top:280.1px">否</div>
<div class="idx" style="left:24.5px;top:334.8px">5</div>
<div class="pill" style="left:131.5px;top:346.6px">正常<span class="l">...</span></div>
<div class="td" style="left:250.6px;top:335.3px"><span class="l">KLM</span>供<span class="d">...</span></div>
<div class="td" style="left:369.2px;top:335.3px"><span class="l">901234</span></div>
<div class="td" style="left:487.8px;top:335.3px">上海市<span class="d">...</span></div>
<div class="td" style="left:606.4px;top:335.3px"><span class="l">2024-</span><span class="d">...</span></div>
<div class="td" style="left:725.0px;top:335.3px"><span class="l">15000</span><span class="d">...</span></div>
<div class="td" style="left:843.6px;top:335.3px"><span class="l">12000</span><span class="d">...</span></div>
<div class="td" style="left:962.2px;top:335.3px">张三</div>
<div class="tag" style="left:1080.3px;top:347.3px">外资</div>
<div class="td" style="left:1199.4px;top:335.3px"><span class="l">13933</span><span class="d">...</span></div>
<div class="td" style="left:1318.0px;top:335.3px">李四</div>
<div class="td" style="left:1436.6px;top:335.3px">是</div>
<div class="td" style="left:1555.2px;top:335.3px">是</div>
<div class="idx" style="left:24.5px;top:390.0px">6</div>
<div class="pill" style="left:131.5px;top:401.8px">正常<span class="l">...</span></div>
<div class="td" style="left:250.6px;top:390.5px"><span class="l">HIJ</span>供<span class="d">...</span></div>
<div class="td" style="left:369.2px;top:390.5px"><span class="l">345678</span></div>
<div class="td" style="left:487.8px;top:390.5px">深圳市<span class="d">...</span></div>
<div class="td" style="left:606.4px;top:390.5px"><span class="l">2018-</span><span class="d">...</span></div>
<div class="td" style="left:725.0px;top:390.5px"><span class="l">30000</span><span class="d">...</span></div>
<div class="td" style="left:843.6px;top:390.5px"><span class="l">28000</span><span class="d">...</span></div>
<div class="td" style="left:962.2px;top:390.5px">王五</div>
<div class="tag" style="left:1080.3px;top:402.5px">其他</div>
<div class="td" style="left:1199.4px;top:390.5px"><span class="l">13722</span><span class="d">...</span></div>
<div class="td" style="left:1318.0px;top:390.5px">赵六</div>
<div class="td" style="left:1436.6px;top:390.5px">否</div>
<div class="td" style="left:1555.2px;top:390.5px">否</div>
<div class="idx" style="left:24.5px;top:445.2px">7</div>
<div class="pill" style="left:131.5px;top:457.0px">正常<span class="l">...</span></div>
<div class="td" style="left:250.6px;top:445.7px"><span class="l">EFG</span>供<span class="d">...</span></div>
<div class="td" style="left:369.2px;top:445.7px"><span class="l">789012</span></div>
<div class="td" style="left:487.8px;top:445.7px">广州市<span class="d">...</span></div>
<div class="td" style="left:606.4px;top:445.7px"><span class="l">2014-</span><span class="d">...</span></div>
<div class="td" style="left:725.0px;top:445.7px"><span class="l">50000</span><span class="d">...</span></div>
<div class="td" style="left:843.6px;top:445.7px"><span class="l">40000</span><span class="d">...</span></div>
<div class="td" style="left:962.2px;top:445.7px">李四</div>
<div class="tag" style="left:1080.3px;top:457.7px">合资</div>
<div class="td" style="left:1199.4px;top:445.7px"><span class="l">13611</span><span class="d">...</span></div>
<div class="td" style="left:1318.0px;top:445.7px">张三</div>
<div class="td" style="left:1436.6px;top:445.7px">是</div>
<div class="td" style="left:1555.2px;top:445.7px">是</div>
<div class="idx foot" style="left:25px;top:503.9px"><span class="l">7</span>条</div>
<div class="hscroll"></div>
 </div>
 <div id="ncard"><div id="ntitle">已暂停合作</div></div>
 <div id="lpill"></div>
</div>
</body></html>
